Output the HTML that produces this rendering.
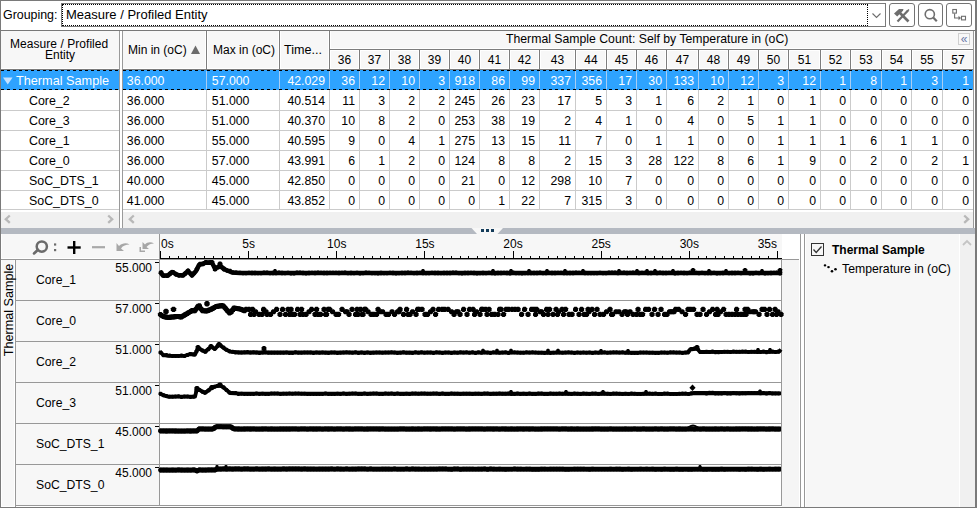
<!DOCTYPE html>
<html><head><meta charset="utf-8"><style>
html,body{margin:0;padding:0;width:977px;height:508px;overflow:hidden;background:#fff}
body{position:relative}
body>div,body>svg{position:absolute}
.t{font-family:'Liberation Sans',sans-serif;line-height:20px;height:20px;white-space:nowrap;color:#000}
</style></head><body>
<div class="t" style="left:3px;top:5px;font-size:12.4px;color:#000;">Grouping:</div>
<div style="left:61px;top:3px;width:825px;height:24px;border:1px solid #7a7a7a;box-sizing:border-box;background:#fff"></div>
<div style="left:62px;top:4px;width:806px;height:22px;border:1px dotted #000;box-sizing:border-box"></div>
<div class="t" style="left:66px;top:4.5px;font-size:13px;color:#000;">Measure / Profiled Entity</div>
<svg style="left:871px;top:11px" width="12" height="9"><polyline points="1.5,2.5 5.5,6.5 9.5,2.5" fill="none" stroke="#6d6d6d" stroke-width="1.1"/></svg>
<div style="left:889px;top:3px;width:26px;height:24px;border:1px solid #737373;border-radius:3px;box-sizing:border-box;background:#fff"></div>
<div style="left:918px;top:3px;width:25px;height:24px;border:1px solid #737373;border-radius:3px;box-sizing:border-box;background:#fff"></div>
<div style="left:946px;top:3px;width:26px;height:24px;border:1px solid #737373;border-radius:3px;box-sizing:border-box;background:#fff"></div>
<svg style="left:889px;top:3px" width="26" height="24">
<path d="M5,10.5 L10,6 L14.5,6 L14,7.8 L8.2,13.5 Z" fill="#6e6e6e"/>
<line x1="10" y1="9" x2="19.5" y2="18.5" stroke="#6e6e6e" stroke-width="2.6"/>
<line x1="19" y1="7.5" x2="8.5" y2="18.5" stroke="#6e6e6e" stroke-width="2.2"/>
<line x1="17.5" y1="9" x2="20" y2="6.5" stroke="#6e6e6e" stroke-width="1.4"/>
</svg>
<svg style="left:918px;top:3px" width="25" height="24">
<circle cx="11.8" cy="11.2" r="4.6" fill="none" stroke="#6e6e6e" stroke-width="1.6"/>
<line x1="15.2" y1="14.6" x2="18.8" y2="18.3" stroke="#6e6e6e" stroke-width="2.2"/>
</svg>
<svg style="left:946px;top:3px" width="26" height="24">
<rect x="6.8" y="6.5" width="3.6" height="3.6" fill="none" stroke="#6e6e6e" stroke-width="1.1"/>
<polyline points="8.6,10.5 8.6,15 13,15" fill="none" stroke="#6e6e6e" stroke-width="1.1"/>
<path d="M12.5,12.8 L15,15 L12.5,17.2 Z" fill="#6e6e6e"/>
<rect x="15.5" y="13.3" width="4" height="3.6" fill="none" stroke="#6e6e6e" stroke-width="1.1"/>
</svg>
<div style="left:1px;top:30px;width:974px;height:1px;background:#787878"></div>
<div style="left:1px;top:31px;width:973px;height:38px;background:#f7f7f7"></div>
<div style="left:1px;top:68px;width:973px;height:1px;background:#ffffff"></div>
<div style="left:1px;top:69px;width:973px;height:1px;background:#7d7d7d"></div>
<div style="left:120px;top:31px;width:2px;height:197px;background:#fff"></div>
<div style="left:119px;top:31px;width:1px;height:197px;background:#9a9a9a"></div>
<div style="left:122px;top:31px;width:1px;height:197px;background:#9a9a9a"></div>
<div style="left:205px;top:31px;width:1px;height:38px;background:#fff"></div>
<div style="left:207px;top:31px;width:1px;height:38px;background:#fff"></div>
<div style="left:278px;top:31px;width:1px;height:38px;background:#fff"></div>
<div style="left:280px;top:31px;width:1px;height:38px;background:#fff"></div>
<div style="left:328px;top:31px;width:1px;height:38px;background:#fff"></div>
<div style="left:330px;top:31px;width:1px;height:38px;background:#fff"></div>
<div style="left:358px;top:50px;width:1px;height:19px;background:#fff"></div>
<div style="left:360px;top:50px;width:1px;height:19px;background:#fff"></div>
<div style="left:388px;top:50px;width:1px;height:19px;background:#fff"></div>
<div style="left:390px;top:50px;width:1px;height:19px;background:#fff"></div>
<div style="left:418px;top:50px;width:1px;height:19px;background:#fff"></div>
<div style="left:420px;top:50px;width:1px;height:19px;background:#fff"></div>
<div style="left:448px;top:50px;width:1px;height:19px;background:#fff"></div>
<div style="left:450px;top:50px;width:1px;height:19px;background:#fff"></div>
<div style="left:478px;top:50px;width:1px;height:19px;background:#fff"></div>
<div style="left:480px;top:50px;width:1px;height:19px;background:#fff"></div>
<div style="left:508px;top:50px;width:1px;height:19px;background:#fff"></div>
<div style="left:510px;top:50px;width:1px;height:19px;background:#fff"></div>
<div style="left:538px;top:50px;width:1px;height:19px;background:#fff"></div>
<div style="left:540px;top:50px;width:1px;height:19px;background:#fff"></div>
<div style="left:574px;top:50px;width:1px;height:19px;background:#fff"></div>
<div style="left:576px;top:50px;width:1px;height:19px;background:#fff"></div>
<div style="left:605px;top:50px;width:1px;height:19px;background:#fff"></div>
<div style="left:607px;top:50px;width:1px;height:19px;background:#fff"></div>
<div style="left:635px;top:50px;width:1px;height:19px;background:#fff"></div>
<div style="left:637px;top:50px;width:1px;height:19px;background:#fff"></div>
<div style="left:665px;top:50px;width:1px;height:19px;background:#fff"></div>
<div style="left:667px;top:50px;width:1px;height:19px;background:#fff"></div>
<div style="left:697px;top:50px;width:1px;height:19px;background:#fff"></div>
<div style="left:699px;top:50px;width:1px;height:19px;background:#fff"></div>
<div style="left:727px;top:50px;width:1px;height:19px;background:#fff"></div>
<div style="left:729px;top:50px;width:1px;height:19px;background:#fff"></div>
<div style="left:757px;top:50px;width:1px;height:19px;background:#fff"></div>
<div style="left:759px;top:50px;width:1px;height:19px;background:#fff"></div>
<div style="left:787px;top:50px;width:1px;height:19px;background:#fff"></div>
<div style="left:789px;top:50px;width:1px;height:19px;background:#fff"></div>
<div style="left:819px;top:50px;width:1px;height:19px;background:#fff"></div>
<div style="left:821px;top:50px;width:1px;height:19px;background:#fff"></div>
<div style="left:849px;top:50px;width:1px;height:19px;background:#fff"></div>
<div style="left:851px;top:50px;width:1px;height:19px;background:#fff"></div>
<div style="left:880px;top:50px;width:1px;height:19px;background:#fff"></div>
<div style="left:882px;top:50px;width:1px;height:19px;background:#fff"></div>
<div style="left:910px;top:50px;width:1px;height:19px;background:#fff"></div>
<div style="left:912px;top:50px;width:1px;height:19px;background:#fff"></div>
<div style="left:941px;top:50px;width:1px;height:19px;background:#fff"></div>
<div style="left:943px;top:50px;width:1px;height:19px;background:#fff"></div>
<div style="left:330px;top:48px;width:644px;height:1px;background:#fff"></div>
<div style="left:330px;top:50px;width:644px;height:1px;background:#fff"></div>
<div style="left:206px;top:31px;width:1px;height:38px;background:#7d7d7d"></div>
<div style="left:279px;top:31px;width:1px;height:38px;background:#7d7d7d"></div>
<div style="left:329px;top:31px;width:1px;height:38px;background:#7d7d7d"></div>
<div style="left:359px;top:50px;width:1px;height:19px;background:#7d7d7d"></div>
<div style="left:389px;top:50px;width:1px;height:19px;background:#7d7d7d"></div>
<div style="left:419px;top:50px;width:1px;height:19px;background:#7d7d7d"></div>
<div style="left:449px;top:50px;width:1px;height:19px;background:#7d7d7d"></div>
<div style="left:479px;top:50px;width:1px;height:19px;background:#7d7d7d"></div>
<div style="left:509px;top:50px;width:1px;height:19px;background:#7d7d7d"></div>
<div style="left:539px;top:50px;width:1px;height:19px;background:#7d7d7d"></div>
<div style="left:575px;top:50px;width:1px;height:19px;background:#7d7d7d"></div>
<div style="left:606px;top:50px;width:1px;height:19px;background:#7d7d7d"></div>
<div style="left:636px;top:50px;width:1px;height:19px;background:#7d7d7d"></div>
<div style="left:666px;top:50px;width:1px;height:19px;background:#7d7d7d"></div>
<div style="left:698px;top:50px;width:1px;height:19px;background:#7d7d7d"></div>
<div style="left:728px;top:50px;width:1px;height:19px;background:#7d7d7d"></div>
<div style="left:758px;top:50px;width:1px;height:19px;background:#7d7d7d"></div>
<div style="left:788px;top:50px;width:1px;height:19px;background:#7d7d7d"></div>
<div style="left:820px;top:50px;width:1px;height:19px;background:#7d7d7d"></div>
<div style="left:850px;top:50px;width:1px;height:19px;background:#7d7d7d"></div>
<div style="left:881px;top:50px;width:1px;height:19px;background:#7d7d7d"></div>
<div style="left:911px;top:50px;width:1px;height:19px;background:#7d7d7d"></div>
<div style="left:942px;top:50px;width:1px;height:19px;background:#7d7d7d"></div>
<div style="left:330px;top:49px;width:644px;height:1px;background:#7d7d7d"></div>
<div style="left:973px;top:31px;width:1px;height:197px;background:#9a9a9a"></div>
<div class="t" style="left:10px;top:34px;font-size:12px;color:#000;letter-spacing:0.05px">Measure / Profiled</div>
<div class="t" style="left:45px;top:45px;font-size:12px;color:#000;">Entity</div>
<div class="t" style="left:128px;top:40px;font-size:12px;color:#000;">Min in (oC)</div>
<svg style="left:190px;top:44px" width="12" height="11"><path d="M1,10 L5.5,1.5 L10,10 Z" fill="#6b6b6b"/></svg>
<div class="t" style="left:213px;top:40px;font-size:12px;color:#000;">Max in (oC)</div>
<div class="t" style="left:284px;top:40px;font-size:12.6px;color:#000;">Time...</div>
<div class="t" style="left:506px;top:29px;font-size:12.25px;color:#000;">Thermal Sample Count: Self by Temperature in (oC)</div>
<div style="left:958px;top:33px;width:12px;height:12px;border:1px solid #cfcfcf;box-sizing:border-box;background:#f8f8f8"></div>
<div class="t" style="left:958px;top:30px;width:12px;text-align:center;font-size:12px;color:#6a78a8;line-height:18px">&laquo;</div>
<div class="t" style="left:194.5px;width:300px;text-align:center;top:50px;font-size:12px;color:#000;">36</div>
<div class="t" style="left:224.5px;width:300px;text-align:center;top:50px;font-size:12px;color:#000;">37</div>
<div class="t" style="left:254.5px;width:300px;text-align:center;top:50px;font-size:12px;color:#000;">38</div>
<div class="t" style="left:284.5px;width:300px;text-align:center;top:50px;font-size:12px;color:#000;">39</div>
<div class="t" style="left:314.5px;width:300px;text-align:center;top:50px;font-size:12px;color:#000;">40</div>
<div class="t" style="left:344.5px;width:300px;text-align:center;top:50px;font-size:12px;color:#000;">41</div>
<div class="t" style="left:374.5px;width:300px;text-align:center;top:50px;font-size:12px;color:#000;">42</div>
<div class="t" style="left:407.5px;width:300px;text-align:center;top:50px;font-size:12px;color:#000;">43</div>
<div class="t" style="left:441.0px;width:300px;text-align:center;top:50px;font-size:12px;color:#000;">44</div>
<div class="t" style="left:471.5px;width:300px;text-align:center;top:50px;font-size:12px;color:#000;">45</div>
<div class="t" style="left:501.5px;width:300px;text-align:center;top:50px;font-size:12px;color:#000;">46</div>
<div class="t" style="left:532.5px;width:300px;text-align:center;top:50px;font-size:12px;color:#000;">47</div>
<div class="t" style="left:563.5px;width:300px;text-align:center;top:50px;font-size:12px;color:#000;">48</div>
<div class="t" style="left:593.5px;width:300px;text-align:center;top:50px;font-size:12px;color:#000;">49</div>
<div class="t" style="left:623.5px;width:300px;text-align:center;top:50px;font-size:12px;color:#000;">50</div>
<div class="t" style="left:654.5px;width:300px;text-align:center;top:50px;font-size:12px;color:#000;">51</div>
<div class="t" style="left:685.5px;width:300px;text-align:center;top:50px;font-size:12px;color:#000;">52</div>
<div class="t" style="left:716.0px;width:300px;text-align:center;top:50px;font-size:12px;color:#000;">53</div>
<div class="t" style="left:746.5px;width:300px;text-align:center;top:50px;font-size:12px;color:#000;">54</div>
<div class="t" style="left:777.0px;width:300px;text-align:center;top:50px;font-size:12px;color:#000;">55</div>
<div class="t" style="left:808.0px;width:300px;text-align:center;top:50px;font-size:12px;color:#000;">57</div>
<div style="left:1px;top:110px;width:118px;height:1px;background:#cbcbcb"></div>
<div style="left:123px;top:110px;width:850px;height:1px;background:#cbcbcb"></div>
<div style="left:1px;top:130px;width:118px;height:1px;background:#cbcbcb"></div>
<div style="left:123px;top:130px;width:850px;height:1px;background:#cbcbcb"></div>
<div style="left:1px;top:150px;width:118px;height:1px;background:#cbcbcb"></div>
<div style="left:123px;top:150px;width:850px;height:1px;background:#cbcbcb"></div>
<div style="left:1px;top:170px;width:118px;height:1px;background:#cbcbcb"></div>
<div style="left:123px;top:170px;width:850px;height:1px;background:#cbcbcb"></div>
<div style="left:1px;top:190px;width:118px;height:1px;background:#cbcbcb"></div>
<div style="left:123px;top:190px;width:850px;height:1px;background:#cbcbcb"></div>
<div style="left:1px;top:209px;width:118px;height:1px;background:#cbcbcb"></div>
<div style="left:123px;top:209px;width:850px;height:1px;background:#cbcbcb"></div>
<div style="left:1px;top:70px;width:118px;height:20px;background:#2ea3ff"></div>
<div style="left:123px;top:70px;width:850px;height:20px;background:#2ea3ff"></div>
<div style="left:1px;top:70px;width:118px;height:1px;background:repeating-linear-gradient(90deg,#000 0 3px,transparent 3px 6px)"></div>
<div style="left:1px;top:89px;width:118px;height:1px;background:repeating-linear-gradient(90deg,#000 0 3px,transparent 3px 6px)"></div>
<div style="left:123px;top:70px;width:850px;height:1px;background:repeating-linear-gradient(90deg,#000 0 3px,transparent 3px 6px)"></div>
<div style="left:123px;top:89px;width:850px;height:1px;background:repeating-linear-gradient(90deg,#000 0 3px,transparent 3px 6px)"></div>
<div style="left:206px;top:71px;width:1px;height:18px;background:#a9cdf2"></div>
<div style="left:206px;top:90px;width:1px;height:120px;background:#cbcbcb"></div>
<div style="left:279px;top:71px;width:1px;height:18px;background:#a9cdf2"></div>
<div style="left:279px;top:90px;width:1px;height:120px;background:#cbcbcb"></div>
<div style="left:329px;top:71px;width:1px;height:18px;background:#a9cdf2"></div>
<div style="left:329px;top:90px;width:1px;height:120px;background:#cbcbcb"></div>
<div style="left:359px;top:71px;width:1px;height:18px;background:#a9cdf2"></div>
<div style="left:359px;top:90px;width:1px;height:120px;background:#cbcbcb"></div>
<div style="left:389px;top:71px;width:1px;height:18px;background:#a9cdf2"></div>
<div style="left:389px;top:90px;width:1px;height:120px;background:#cbcbcb"></div>
<div style="left:419px;top:71px;width:1px;height:18px;background:#a9cdf2"></div>
<div style="left:419px;top:90px;width:1px;height:120px;background:#cbcbcb"></div>
<div style="left:449px;top:71px;width:1px;height:18px;background:#a9cdf2"></div>
<div style="left:449px;top:90px;width:1px;height:120px;background:#cbcbcb"></div>
<div style="left:479px;top:71px;width:1px;height:18px;background:#a9cdf2"></div>
<div style="left:479px;top:90px;width:1px;height:120px;background:#cbcbcb"></div>
<div style="left:509px;top:71px;width:1px;height:18px;background:#a9cdf2"></div>
<div style="left:509px;top:90px;width:1px;height:120px;background:#cbcbcb"></div>
<div style="left:539px;top:71px;width:1px;height:18px;background:#a9cdf2"></div>
<div style="left:539px;top:90px;width:1px;height:120px;background:#cbcbcb"></div>
<div style="left:575px;top:71px;width:1px;height:18px;background:#a9cdf2"></div>
<div style="left:575px;top:90px;width:1px;height:120px;background:#cbcbcb"></div>
<div style="left:606px;top:71px;width:1px;height:18px;background:#a9cdf2"></div>
<div style="left:606px;top:90px;width:1px;height:120px;background:#cbcbcb"></div>
<div style="left:636px;top:71px;width:1px;height:18px;background:#a9cdf2"></div>
<div style="left:636px;top:90px;width:1px;height:120px;background:#cbcbcb"></div>
<div style="left:666px;top:71px;width:1px;height:18px;background:#a9cdf2"></div>
<div style="left:666px;top:90px;width:1px;height:120px;background:#cbcbcb"></div>
<div style="left:698px;top:71px;width:1px;height:18px;background:#a9cdf2"></div>
<div style="left:698px;top:90px;width:1px;height:120px;background:#cbcbcb"></div>
<div style="left:728px;top:71px;width:1px;height:18px;background:#a9cdf2"></div>
<div style="left:728px;top:90px;width:1px;height:120px;background:#cbcbcb"></div>
<div style="left:758px;top:71px;width:1px;height:18px;background:#a9cdf2"></div>
<div style="left:758px;top:90px;width:1px;height:120px;background:#cbcbcb"></div>
<div style="left:788px;top:71px;width:1px;height:18px;background:#a9cdf2"></div>
<div style="left:788px;top:90px;width:1px;height:120px;background:#cbcbcb"></div>
<div style="left:820px;top:71px;width:1px;height:18px;background:#a9cdf2"></div>
<div style="left:820px;top:90px;width:1px;height:120px;background:#cbcbcb"></div>
<div style="left:850px;top:71px;width:1px;height:18px;background:#a9cdf2"></div>
<div style="left:850px;top:90px;width:1px;height:120px;background:#cbcbcb"></div>
<div style="left:881px;top:71px;width:1px;height:18px;background:#a9cdf2"></div>
<div style="left:881px;top:90px;width:1px;height:120px;background:#cbcbcb"></div>
<div style="left:911px;top:71px;width:1px;height:18px;background:#a9cdf2"></div>
<div style="left:911px;top:90px;width:1px;height:120px;background:#cbcbcb"></div>
<div style="left:942px;top:71px;width:1px;height:18px;background:#a9cdf2"></div>
<div style="left:942px;top:90px;width:1px;height:120px;background:#cbcbcb"></div>
<svg style="left:2px;top:76px" width="12" height="10"><path d="M1,1.5 L10.5,1.5 L5.75,8.5 Z" fill="#c6e2ff"/></svg>
<div class="t" style="left:16px;top:71px;font-size:12.7px;color:#fff;">Thermal Sample</div>
<div class="t" style="left:126.8px;top:71px;font-size:12.3px;color:#fff;">36.000</div>
<div class="t" style="left:211.8px;top:71px;font-size:12.3px;color:#fff;">57.000</div>
<div class="t" style="left:25px;width:300px;text-align:right;top:71px;font-size:12.3px;color:#fff;">42.029</div>
<div class="t" style="left:55px;width:300px;text-align:right;top:71px;font-size:12.3px;color:#fff;">36</div>
<div class="t" style="left:85px;width:300px;text-align:right;top:71px;font-size:12.3px;color:#fff;">12</div>
<div class="t" style="left:115px;width:300px;text-align:right;top:71px;font-size:12.3px;color:#fff;">10</div>
<div class="t" style="left:145px;width:300px;text-align:right;top:71px;font-size:12.3px;color:#fff;">3</div>
<div class="t" style="left:175px;width:300px;text-align:right;top:71px;font-size:12.3px;color:#fff;">918</div>
<div class="t" style="left:205px;width:300px;text-align:right;top:71px;font-size:12.3px;color:#fff;">86</div>
<div class="t" style="left:235px;width:300px;text-align:right;top:71px;font-size:12.3px;color:#fff;">99</div>
<div class="t" style="left:271px;width:300px;text-align:right;top:71px;font-size:12.3px;color:#fff;">337</div>
<div class="t" style="left:302px;width:300px;text-align:right;top:71px;font-size:12.3px;color:#fff;">356</div>
<div class="t" style="left:332px;width:300px;text-align:right;top:71px;font-size:12.3px;color:#fff;">17</div>
<div class="t" style="left:362px;width:300px;text-align:right;top:71px;font-size:12.3px;color:#fff;">30</div>
<div class="t" style="left:394px;width:300px;text-align:right;top:71px;font-size:12.3px;color:#fff;">133</div>
<div class="t" style="left:424px;width:300px;text-align:right;top:71px;font-size:12.3px;color:#fff;">10</div>
<div class="t" style="left:454px;width:300px;text-align:right;top:71px;font-size:12.3px;color:#fff;">12</div>
<div class="t" style="left:484px;width:300px;text-align:right;top:71px;font-size:12.3px;color:#fff;">3</div>
<div class="t" style="left:516px;width:300px;text-align:right;top:71px;font-size:12.3px;color:#fff;">12</div>
<div class="t" style="left:546px;width:300px;text-align:right;top:71px;font-size:12.3px;color:#fff;">1</div>
<div class="t" style="left:577px;width:300px;text-align:right;top:71px;font-size:12.3px;color:#fff;">8</div>
<div class="t" style="left:607px;width:300px;text-align:right;top:71px;font-size:12.3px;color:#fff;">1</div>
<div class="t" style="left:638px;width:300px;text-align:right;top:71px;font-size:12.3px;color:#fff;">3</div>
<div class="t" style="left:669px;width:300px;text-align:right;top:71px;font-size:12.3px;color:#fff;">1</div>
<div class="t" style="left:29px;top:91px;font-size:12.4px;color:#000;">Core_2</div>
<div class="t" style="left:126.8px;top:91px;font-size:12.3px;color:#000;">36.000</div>
<div class="t" style="left:211.8px;top:91px;font-size:12.3px;color:#000;">51.000</div>
<div class="t" style="left:25px;width:300px;text-align:right;top:91px;font-size:12.3px;color:#000;">40.514</div>
<div class="t" style="left:55px;width:300px;text-align:right;top:91px;font-size:12.3px;color:#000;">11</div>
<div class="t" style="left:85px;width:300px;text-align:right;top:91px;font-size:12.3px;color:#000;">3</div>
<div class="t" style="left:115px;width:300px;text-align:right;top:91px;font-size:12.3px;color:#000;">2</div>
<div class="t" style="left:145px;width:300px;text-align:right;top:91px;font-size:12.3px;color:#000;">2</div>
<div class="t" style="left:175px;width:300px;text-align:right;top:91px;font-size:12.3px;color:#000;">245</div>
<div class="t" style="left:205px;width:300px;text-align:right;top:91px;font-size:12.3px;color:#000;">26</div>
<div class="t" style="left:235px;width:300px;text-align:right;top:91px;font-size:12.3px;color:#000;">23</div>
<div class="t" style="left:271px;width:300px;text-align:right;top:91px;font-size:12.3px;color:#000;">17</div>
<div class="t" style="left:302px;width:300px;text-align:right;top:91px;font-size:12.3px;color:#000;">5</div>
<div class="t" style="left:332px;width:300px;text-align:right;top:91px;font-size:12.3px;color:#000;">3</div>
<div class="t" style="left:362px;width:300px;text-align:right;top:91px;font-size:12.3px;color:#000;">1</div>
<div class="t" style="left:394px;width:300px;text-align:right;top:91px;font-size:12.3px;color:#000;">6</div>
<div class="t" style="left:424px;width:300px;text-align:right;top:91px;font-size:12.3px;color:#000;">2</div>
<div class="t" style="left:454px;width:300px;text-align:right;top:91px;font-size:12.3px;color:#000;">1</div>
<div class="t" style="left:484px;width:300px;text-align:right;top:91px;font-size:12.3px;color:#000;">0</div>
<div class="t" style="left:516px;width:300px;text-align:right;top:91px;font-size:12.3px;color:#000;">1</div>
<div class="t" style="left:546px;width:300px;text-align:right;top:91px;font-size:12.3px;color:#000;">0</div>
<div class="t" style="left:577px;width:300px;text-align:right;top:91px;font-size:12.3px;color:#000;">0</div>
<div class="t" style="left:607px;width:300px;text-align:right;top:91px;font-size:12.3px;color:#000;">0</div>
<div class="t" style="left:638px;width:300px;text-align:right;top:91px;font-size:12.3px;color:#000;">0</div>
<div class="t" style="left:669px;width:300px;text-align:right;top:91px;font-size:12.3px;color:#000;">0</div>
<div class="t" style="left:29px;top:111px;font-size:12.4px;color:#000;">Core_3</div>
<div class="t" style="left:126.8px;top:111px;font-size:12.3px;color:#000;">36.000</div>
<div class="t" style="left:211.8px;top:111px;font-size:12.3px;color:#000;">51.000</div>
<div class="t" style="left:25px;width:300px;text-align:right;top:111px;font-size:12.3px;color:#000;">40.370</div>
<div class="t" style="left:55px;width:300px;text-align:right;top:111px;font-size:12.3px;color:#000;">10</div>
<div class="t" style="left:85px;width:300px;text-align:right;top:111px;font-size:12.3px;color:#000;">8</div>
<div class="t" style="left:115px;width:300px;text-align:right;top:111px;font-size:12.3px;color:#000;">2</div>
<div class="t" style="left:145px;width:300px;text-align:right;top:111px;font-size:12.3px;color:#000;">0</div>
<div class="t" style="left:175px;width:300px;text-align:right;top:111px;font-size:12.3px;color:#000;">253</div>
<div class="t" style="left:205px;width:300px;text-align:right;top:111px;font-size:12.3px;color:#000;">38</div>
<div class="t" style="left:235px;width:300px;text-align:right;top:111px;font-size:12.3px;color:#000;">19</div>
<div class="t" style="left:271px;width:300px;text-align:right;top:111px;font-size:12.3px;color:#000;">2</div>
<div class="t" style="left:302px;width:300px;text-align:right;top:111px;font-size:12.3px;color:#000;">4</div>
<div class="t" style="left:332px;width:300px;text-align:right;top:111px;font-size:12.3px;color:#000;">1</div>
<div class="t" style="left:362px;width:300px;text-align:right;top:111px;font-size:12.3px;color:#000;">0</div>
<div class="t" style="left:394px;width:300px;text-align:right;top:111px;font-size:12.3px;color:#000;">4</div>
<div class="t" style="left:424px;width:300px;text-align:right;top:111px;font-size:12.3px;color:#000;">0</div>
<div class="t" style="left:454px;width:300px;text-align:right;top:111px;font-size:12.3px;color:#000;">5</div>
<div class="t" style="left:484px;width:300px;text-align:right;top:111px;font-size:12.3px;color:#000;">1</div>
<div class="t" style="left:516px;width:300px;text-align:right;top:111px;font-size:12.3px;color:#000;">1</div>
<div class="t" style="left:546px;width:300px;text-align:right;top:111px;font-size:12.3px;color:#000;">0</div>
<div class="t" style="left:577px;width:300px;text-align:right;top:111px;font-size:12.3px;color:#000;">0</div>
<div class="t" style="left:607px;width:300px;text-align:right;top:111px;font-size:12.3px;color:#000;">0</div>
<div class="t" style="left:638px;width:300px;text-align:right;top:111px;font-size:12.3px;color:#000;">0</div>
<div class="t" style="left:669px;width:300px;text-align:right;top:111px;font-size:12.3px;color:#000;">0</div>
<div class="t" style="left:29px;top:131px;font-size:12.4px;color:#000;">Core_1</div>
<div class="t" style="left:126.8px;top:131px;font-size:12.3px;color:#000;">36.000</div>
<div class="t" style="left:211.8px;top:131px;font-size:12.3px;color:#000;">55.000</div>
<div class="t" style="left:25px;width:300px;text-align:right;top:131px;font-size:12.3px;color:#000;">40.595</div>
<div class="t" style="left:55px;width:300px;text-align:right;top:131px;font-size:12.3px;color:#000;">9</div>
<div class="t" style="left:85px;width:300px;text-align:right;top:131px;font-size:12.3px;color:#000;">0</div>
<div class="t" style="left:115px;width:300px;text-align:right;top:131px;font-size:12.3px;color:#000;">4</div>
<div class="t" style="left:145px;width:300px;text-align:right;top:131px;font-size:12.3px;color:#000;">1</div>
<div class="t" style="left:175px;width:300px;text-align:right;top:131px;font-size:12.3px;color:#000;">275</div>
<div class="t" style="left:205px;width:300px;text-align:right;top:131px;font-size:12.3px;color:#000;">13</div>
<div class="t" style="left:235px;width:300px;text-align:right;top:131px;font-size:12.3px;color:#000;">15</div>
<div class="t" style="left:271px;width:300px;text-align:right;top:131px;font-size:12.3px;color:#000;">11</div>
<div class="t" style="left:302px;width:300px;text-align:right;top:131px;font-size:12.3px;color:#000;">7</div>
<div class="t" style="left:332px;width:300px;text-align:right;top:131px;font-size:12.3px;color:#000;">0</div>
<div class="t" style="left:362px;width:300px;text-align:right;top:131px;font-size:12.3px;color:#000;">1</div>
<div class="t" style="left:394px;width:300px;text-align:right;top:131px;font-size:12.3px;color:#000;">1</div>
<div class="t" style="left:424px;width:300px;text-align:right;top:131px;font-size:12.3px;color:#000;">0</div>
<div class="t" style="left:454px;width:300px;text-align:right;top:131px;font-size:12.3px;color:#000;">0</div>
<div class="t" style="left:484px;width:300px;text-align:right;top:131px;font-size:12.3px;color:#000;">1</div>
<div class="t" style="left:516px;width:300px;text-align:right;top:131px;font-size:12.3px;color:#000;">1</div>
<div class="t" style="left:546px;width:300px;text-align:right;top:131px;font-size:12.3px;color:#000;">1</div>
<div class="t" style="left:577px;width:300px;text-align:right;top:131px;font-size:12.3px;color:#000;">6</div>
<div class="t" style="left:607px;width:300px;text-align:right;top:131px;font-size:12.3px;color:#000;">1</div>
<div class="t" style="left:638px;width:300px;text-align:right;top:131px;font-size:12.3px;color:#000;">1</div>
<div class="t" style="left:669px;width:300px;text-align:right;top:131px;font-size:12.3px;color:#000;">0</div>
<div class="t" style="left:29px;top:151px;font-size:12.4px;color:#000;">Core_0</div>
<div class="t" style="left:126.8px;top:151px;font-size:12.3px;color:#000;">36.000</div>
<div class="t" style="left:211.8px;top:151px;font-size:12.3px;color:#000;">57.000</div>
<div class="t" style="left:25px;width:300px;text-align:right;top:151px;font-size:12.3px;color:#000;">43.991</div>
<div class="t" style="left:55px;width:300px;text-align:right;top:151px;font-size:12.3px;color:#000;">6</div>
<div class="t" style="left:85px;width:300px;text-align:right;top:151px;font-size:12.3px;color:#000;">1</div>
<div class="t" style="left:115px;width:300px;text-align:right;top:151px;font-size:12.3px;color:#000;">2</div>
<div class="t" style="left:145px;width:300px;text-align:right;top:151px;font-size:12.3px;color:#000;">0</div>
<div class="t" style="left:175px;width:300px;text-align:right;top:151px;font-size:12.3px;color:#000;">124</div>
<div class="t" style="left:205px;width:300px;text-align:right;top:151px;font-size:12.3px;color:#000;">8</div>
<div class="t" style="left:235px;width:300px;text-align:right;top:151px;font-size:12.3px;color:#000;">8</div>
<div class="t" style="left:271px;width:300px;text-align:right;top:151px;font-size:12.3px;color:#000;">2</div>
<div class="t" style="left:302px;width:300px;text-align:right;top:151px;font-size:12.3px;color:#000;">15</div>
<div class="t" style="left:332px;width:300px;text-align:right;top:151px;font-size:12.3px;color:#000;">3</div>
<div class="t" style="left:362px;width:300px;text-align:right;top:151px;font-size:12.3px;color:#000;">28</div>
<div class="t" style="left:394px;width:300px;text-align:right;top:151px;font-size:12.3px;color:#000;">122</div>
<div class="t" style="left:424px;width:300px;text-align:right;top:151px;font-size:12.3px;color:#000;">8</div>
<div class="t" style="left:454px;width:300px;text-align:right;top:151px;font-size:12.3px;color:#000;">6</div>
<div class="t" style="left:484px;width:300px;text-align:right;top:151px;font-size:12.3px;color:#000;">1</div>
<div class="t" style="left:516px;width:300px;text-align:right;top:151px;font-size:12.3px;color:#000;">9</div>
<div class="t" style="left:546px;width:300px;text-align:right;top:151px;font-size:12.3px;color:#000;">0</div>
<div class="t" style="left:577px;width:300px;text-align:right;top:151px;font-size:12.3px;color:#000;">2</div>
<div class="t" style="left:607px;width:300px;text-align:right;top:151px;font-size:12.3px;color:#000;">0</div>
<div class="t" style="left:638px;width:300px;text-align:right;top:151px;font-size:12.3px;color:#000;">2</div>
<div class="t" style="left:669px;width:300px;text-align:right;top:151px;font-size:12.3px;color:#000;">1</div>
<div class="t" style="left:29px;top:171px;font-size:12.4px;color:#000;">SoC_DTS_1</div>
<div class="t" style="left:126.8px;top:171px;font-size:12.3px;color:#000;">40.000</div>
<div class="t" style="left:211.8px;top:171px;font-size:12.3px;color:#000;">45.000</div>
<div class="t" style="left:25px;width:300px;text-align:right;top:171px;font-size:12.3px;color:#000;">42.850</div>
<div class="t" style="left:55px;width:300px;text-align:right;top:171px;font-size:12.3px;color:#000;">0</div>
<div class="t" style="left:85px;width:300px;text-align:right;top:171px;font-size:12.3px;color:#000;">0</div>
<div class="t" style="left:115px;width:300px;text-align:right;top:171px;font-size:12.3px;color:#000;">0</div>
<div class="t" style="left:145px;width:300px;text-align:right;top:171px;font-size:12.3px;color:#000;">0</div>
<div class="t" style="left:175px;width:300px;text-align:right;top:171px;font-size:12.3px;color:#000;">21</div>
<div class="t" style="left:205px;width:300px;text-align:right;top:171px;font-size:12.3px;color:#000;">0</div>
<div class="t" style="left:235px;width:300px;text-align:right;top:171px;font-size:12.3px;color:#000;">12</div>
<div class="t" style="left:271px;width:300px;text-align:right;top:171px;font-size:12.3px;color:#000;">298</div>
<div class="t" style="left:302px;width:300px;text-align:right;top:171px;font-size:12.3px;color:#000;">10</div>
<div class="t" style="left:332px;width:300px;text-align:right;top:171px;font-size:12.3px;color:#000;">7</div>
<div class="t" style="left:362px;width:300px;text-align:right;top:171px;font-size:12.3px;color:#000;">0</div>
<div class="t" style="left:394px;width:300px;text-align:right;top:171px;font-size:12.3px;color:#000;">0</div>
<div class="t" style="left:424px;width:300px;text-align:right;top:171px;font-size:12.3px;color:#000;">0</div>
<div class="t" style="left:454px;width:300px;text-align:right;top:171px;font-size:12.3px;color:#000;">0</div>
<div class="t" style="left:484px;width:300px;text-align:right;top:171px;font-size:12.3px;color:#000;">0</div>
<div class="t" style="left:516px;width:300px;text-align:right;top:171px;font-size:12.3px;color:#000;">0</div>
<div class="t" style="left:546px;width:300px;text-align:right;top:171px;font-size:12.3px;color:#000;">0</div>
<div class="t" style="left:577px;width:300px;text-align:right;top:171px;font-size:12.3px;color:#000;">0</div>
<div class="t" style="left:607px;width:300px;text-align:right;top:171px;font-size:12.3px;color:#000;">0</div>
<div class="t" style="left:638px;width:300px;text-align:right;top:171px;font-size:12.3px;color:#000;">0</div>
<div class="t" style="left:669px;width:300px;text-align:right;top:171px;font-size:12.3px;color:#000;">0</div>
<div class="t" style="left:29px;top:191px;font-size:12.4px;color:#000;">SoC_DTS_0</div>
<div class="t" style="left:126.8px;top:191px;font-size:12.3px;color:#000;">41.000</div>
<div class="t" style="left:211.8px;top:191px;font-size:12.3px;color:#000;">45.000</div>
<div class="t" style="left:25px;width:300px;text-align:right;top:191px;font-size:12.3px;color:#000;">43.852</div>
<div class="t" style="left:55px;width:300px;text-align:right;top:191px;font-size:12.3px;color:#000;">0</div>
<div class="t" style="left:85px;width:300px;text-align:right;top:191px;font-size:12.3px;color:#000;">0</div>
<div class="t" style="left:115px;width:300px;text-align:right;top:191px;font-size:12.3px;color:#000;">0</div>
<div class="t" style="left:145px;width:300px;text-align:right;top:191px;font-size:12.3px;color:#000;">0</div>
<div class="t" style="left:175px;width:300px;text-align:right;top:191px;font-size:12.3px;color:#000;">0</div>
<div class="t" style="left:205px;width:300px;text-align:right;top:191px;font-size:12.3px;color:#000;">1</div>
<div class="t" style="left:235px;width:300px;text-align:right;top:191px;font-size:12.3px;color:#000;">22</div>
<div class="t" style="left:271px;width:300px;text-align:right;top:191px;font-size:12.3px;color:#000;">7</div>
<div class="t" style="left:302px;width:300px;text-align:right;top:191px;font-size:12.3px;color:#000;">315</div>
<div class="t" style="left:332px;width:300px;text-align:right;top:191px;font-size:12.3px;color:#000;">3</div>
<div class="t" style="left:362px;width:300px;text-align:right;top:191px;font-size:12.3px;color:#000;">0</div>
<div class="t" style="left:394px;width:300px;text-align:right;top:191px;font-size:12.3px;color:#000;">0</div>
<div class="t" style="left:424px;width:300px;text-align:right;top:191px;font-size:12.3px;color:#000;">0</div>
<div class="t" style="left:454px;width:300px;text-align:right;top:191px;font-size:12.3px;color:#000;">0</div>
<div class="t" style="left:484px;width:300px;text-align:right;top:191px;font-size:12.3px;color:#000;">0</div>
<div class="t" style="left:516px;width:300px;text-align:right;top:191px;font-size:12.3px;color:#000;">0</div>
<div class="t" style="left:546px;width:300px;text-align:right;top:191px;font-size:12.3px;color:#000;">0</div>
<div class="t" style="left:577px;width:300px;text-align:right;top:191px;font-size:12.3px;color:#000;">0</div>
<div class="t" style="left:607px;width:300px;text-align:right;top:191px;font-size:12.3px;color:#000;">0</div>
<div class="t" style="left:638px;width:300px;text-align:right;top:191px;font-size:12.3px;color:#000;">0</div>
<div class="t" style="left:669px;width:300px;text-align:right;top:191px;font-size:12.3px;color:#000;">0</div>
<div style="left:1px;top:210px;width:118px;height:18px;background:#fff"></div>
<div style="left:123px;top:210px;width:850px;height:18px;background:#fff"></div>
<div style="left:1px;top:212px;width:118px;height:16px;background:#f0f0f0"></div>
<div style="left:123px;top:212px;width:850px;height:16px;background:#f0f0f0"></div>
<svg style="left:3px;top:214px" width="9" height="10"><polyline points="6.8,1.5 2.8,5.2 6.8,8.9" fill="none" stroke="#b8b8b8" stroke-width="2.3"/></svg>
<svg style="left:106px;top:214px" width="9" height="10"><polyline points="2.2,1.5 6.2,5.2 2.2,8.9" fill="none" stroke="#b8b8b8" stroke-width="2.3"/></svg>
<svg style="left:127px;top:214px" width="9" height="10"><polyline points="6.8,1.5 2.8,5.2 6.8,8.9" fill="none" stroke="#b8b8b8" stroke-width="2.3"/></svg>
<svg style="left:962px;top:214px" width="9" height="10"><polyline points="2.2,1.5 6.2,5.2 2.2,8.9" fill="none" stroke="#b8b8b8" stroke-width="2.3"/></svg>
<div style="left:1px;top:228px;width:974px;height:6px;background:#b4b9c1"></div>
<svg style="left:471px;top:228px" width="33" height="6"><path d="M0.5,0 L32,0 L26.5,6 L6,6 Z" fill="#f7f7f7"/><rect x="10" y="1" width="3" height="3" fill="#143c5a"/><rect x="15" y="1" width="3" height="3" fill="#143c5a"/><rect x="20" y="1" width="3" height="3" fill="#143c5a"/></svg>
<div style="left:1px;top:234px;width:799px;height:25px;background:#f7f7f7"></div>
<div style="left:782px;top:234px;width:18px;height:25px;background:#fff"></div>
<svg style="left:28px;top:237px" width="132" height="20">
<circle cx="13.8" cy="9.6" r="5.1" fill="none" stroke="#6b6b6b" stroke-width="2.5"/>
<line x1="10" y1="12.8" x2="6" y2="16.4" stroke="#6b6b6b" stroke-width="2.7" stroke-linecap="round"/>
<rect x="26" y="6.4" width="2.2" height="2.2" fill="#6b6b6b"/>
<rect x="26" y="12" width="2.2" height="2.2" fill="#6b6b6b"/>
<line x1="39.5" y1="10.5" x2="52.7" y2="10.5" stroke="#000" stroke-width="2.4"/>
<line x1="46.2" y1="4" x2="46.2" y2="17" stroke="#000" stroke-width="2.4"/>
<line x1="64" y1="10.2" x2="77" y2="10.2" stroke="#a9a9a9" stroke-width="2.2"/>
<path d="M88.5,6 L88.5,14 L96,14 L93,11.5 C95,8.5 98,7.5 101.5,7.5 C98.5,5.5 94,6 91,9 Z" fill="#a7a7a7"/>
<path d="M114.5,5 L114.5,12 L121,12 L118.5,10 C120.5,7.5 123,6.5 126,6.5 C123,4.5 119,5 117,7.5 Z" fill="#a7a7a7"/>
<path d="M111.5,10 L111.5,15 L117,15 L117,13.5 L113,13.5 L113,10 Z" fill="#a7a7a7"/>
</svg>
<div style="left:16px;top:260px;width:143px;height:246px;background:#f7f7f7"></div>
<div style="left:1px;top:260px;width:14px;height:247px;background:#f7f7f7;border-left:1px solid #fff;border-right:1px solid #fff;border-bottom:1px solid #fff;box-sizing:border-box"></div>
<div style="left:1px;top:234px;width:1px;height:25px;background:#fff"></div>
<div style="left:1px;top:258px;width:158px;height:1px;background:#fff"></div>
<div style="left:15px;top:260px;width:1px;height:247px;background:#989898"></div>
<div style="left:159px;top:234px;width:1px;height:272px;background:#989898"></div>
<div style="left:1px;top:259px;width:799px;height:1px;background:#989898"></div>
<div style="left:160px;top:260px;width:621px;height:246px;background:#fff"></div>
<div style="left:781px;top:259px;width:1px;height:247px;background:#989898"></div>
<div style="left:782px;top:260px;width:17px;height:247px;background:#f5f5f5"></div>
<div class="t" style="left:-41px;top:300px;width:100px;height:20px;text-align:center;transform:rotate(-90deg);font-size:12.6px;color:#000">Thermal Sample</div>
<div class="t" style="left:36px;top:270px;font-size:12.2px;color:#000;">Core_1</div>
<div class="t" style="left:-148px;width:300px;text-align:right;top:258px;font-size:12px;color:#000;">55.000</div>
<div style="left:155px;top:262px;width:4px;height:1px;background:#000"></div>
<div style="left:16px;top:300px;width:765px;height:1px;background:#989898"></div>
<div class="t" style="left:36px;top:311px;font-size:12.2px;color:#000;">Core_0</div>
<div class="t" style="left:-148px;width:300px;text-align:right;top:299px;font-size:12px;color:#000;">57.000</div>
<div style="left:155px;top:303px;width:4px;height:1px;background:#000"></div>
<div style="left:16px;top:341px;width:765px;height:1px;background:#989898"></div>
<div class="t" style="left:36px;top:352px;font-size:12.2px;color:#000;">Core_2</div>
<div class="t" style="left:-148px;width:300px;text-align:right;top:340px;font-size:12px;color:#000;">51.000</div>
<div style="left:155px;top:344px;width:4px;height:1px;background:#000"></div>
<div style="left:16px;top:382px;width:765px;height:1px;background:#989898"></div>
<div class="t" style="left:36px;top:393px;font-size:12.2px;color:#000;">Core_3</div>
<div class="t" style="left:-148px;width:300px;text-align:right;top:381px;font-size:12px;color:#000;">51.000</div>
<div style="left:155px;top:385px;width:4px;height:1px;background:#000"></div>
<div style="left:16px;top:423px;width:765px;height:1px;background:#989898"></div>
<div class="t" style="left:36px;top:434px;font-size:12.2px;color:#000;">SoC_DTS_1</div>
<div class="t" style="left:-148px;width:300px;text-align:right;top:422px;font-size:12px;color:#000;">45.000</div>
<div style="left:155px;top:426px;width:4px;height:1px;background:#000"></div>
<div style="left:16px;top:464px;width:765px;height:1px;background:#989898"></div>
<div class="t" style="left:36px;top:475px;font-size:12.2px;color:#000;">SoC_DTS_0</div>
<div class="t" style="left:-148px;width:300px;text-align:right;top:463px;font-size:12px;color:#000;">45.000</div>
<div style="left:155px;top:467px;width:4px;height:1px;background:#000"></div>
<div style="left:16px;top:505px;width:765px;height:1px;background:#989898"></div>
<div style="left:160px;top:251px;width:1px;height:7px;background:#000"></div>
<div style="left:169px;top:256px;width:1px;height:2px;background:#000"></div>
<div style="left:178px;top:256px;width:1px;height:2px;background:#000"></div>
<div style="left:186px;top:256px;width:1px;height:2px;background:#000"></div>
<div style="left:195px;top:256px;width:1px;height:2px;background:#000"></div>
<div style="left:204px;top:256px;width:1px;height:2px;background:#000"></div>
<div style="left:213px;top:256px;width:1px;height:2px;background:#000"></div>
<div style="left:222px;top:256px;width:1px;height:2px;background:#000"></div>
<div style="left:231px;top:256px;width:1px;height:2px;background:#000"></div>
<div style="left:239px;top:256px;width:1px;height:2px;background:#000"></div>
<div style="left:248px;top:251px;width:1px;height:7px;background:#000"></div>
<div style="left:257px;top:256px;width:1px;height:2px;background:#000"></div>
<div style="left:266px;top:256px;width:1px;height:2px;background:#000"></div>
<div style="left:275px;top:256px;width:1px;height:2px;background:#000"></div>
<div style="left:283px;top:256px;width:1px;height:2px;background:#000"></div>
<div style="left:292px;top:256px;width:1px;height:2px;background:#000"></div>
<div style="left:301px;top:256px;width:1px;height:2px;background:#000"></div>
<div style="left:310px;top:256px;width:1px;height:2px;background:#000"></div>
<div style="left:319px;top:256px;width:1px;height:2px;background:#000"></div>
<div style="left:327px;top:256px;width:1px;height:2px;background:#000"></div>
<div style="left:336px;top:251px;width:1px;height:7px;background:#000"></div>
<div style="left:345px;top:256px;width:1px;height:2px;background:#000"></div>
<div style="left:354px;top:256px;width:1px;height:2px;background:#000"></div>
<div style="left:363px;top:256px;width:1px;height:2px;background:#000"></div>
<div style="left:372px;top:256px;width:1px;height:2px;background:#000"></div>
<div style="left:380px;top:256px;width:1px;height:2px;background:#000"></div>
<div style="left:389px;top:256px;width:1px;height:2px;background:#000"></div>
<div style="left:398px;top:256px;width:1px;height:2px;background:#000"></div>
<div style="left:407px;top:256px;width:1px;height:2px;background:#000"></div>
<div style="left:416px;top:256px;width:1px;height:2px;background:#000"></div>
<div style="left:424px;top:251px;width:1px;height:7px;background:#000"></div>
<div style="left:433px;top:256px;width:1px;height:2px;background:#000"></div>
<div style="left:442px;top:256px;width:1px;height:2px;background:#000"></div>
<div style="left:451px;top:256px;width:1px;height:2px;background:#000"></div>
<div style="left:460px;top:256px;width:1px;height:2px;background:#000"></div>
<div style="left:468px;top:256px;width:1px;height:2px;background:#000"></div>
<div style="left:477px;top:256px;width:1px;height:2px;background:#000"></div>
<div style="left:486px;top:256px;width:1px;height:2px;background:#000"></div>
<div style="left:495px;top:256px;width:1px;height:2px;background:#000"></div>
<div style="left:504px;top:256px;width:1px;height:2px;background:#000"></div>
<div style="left:513px;top:251px;width:1px;height:7px;background:#000"></div>
<div style="left:521px;top:256px;width:1px;height:2px;background:#000"></div>
<div style="left:530px;top:256px;width:1px;height:2px;background:#000"></div>
<div style="left:539px;top:256px;width:1px;height:2px;background:#000"></div>
<div style="left:548px;top:256px;width:1px;height:2px;background:#000"></div>
<div style="left:557px;top:256px;width:1px;height:2px;background:#000"></div>
<div style="left:565px;top:256px;width:1px;height:2px;background:#000"></div>
<div style="left:574px;top:256px;width:1px;height:2px;background:#000"></div>
<div style="left:583px;top:256px;width:1px;height:2px;background:#000"></div>
<div style="left:592px;top:256px;width:1px;height:2px;background:#000"></div>
<div style="left:601px;top:251px;width:1px;height:7px;background:#000"></div>
<div style="left:610px;top:256px;width:1px;height:2px;background:#000"></div>
<div style="left:618px;top:256px;width:1px;height:2px;background:#000"></div>
<div style="left:627px;top:256px;width:1px;height:2px;background:#000"></div>
<div style="left:636px;top:256px;width:1px;height:2px;background:#000"></div>
<div style="left:645px;top:256px;width:1px;height:2px;background:#000"></div>
<div style="left:654px;top:256px;width:1px;height:2px;background:#000"></div>
<div style="left:662px;top:256px;width:1px;height:2px;background:#000"></div>
<div style="left:671px;top:256px;width:1px;height:2px;background:#000"></div>
<div style="left:680px;top:256px;width:1px;height:2px;background:#000"></div>
<div style="left:689px;top:251px;width:1px;height:7px;background:#000"></div>
<div style="left:698px;top:256px;width:1px;height:2px;background:#000"></div>
<div style="left:706px;top:256px;width:1px;height:2px;background:#000"></div>
<div style="left:715px;top:256px;width:1px;height:2px;background:#000"></div>
<div style="left:724px;top:256px;width:1px;height:2px;background:#000"></div>
<div style="left:733px;top:256px;width:1px;height:2px;background:#000"></div>
<div style="left:742px;top:256px;width:1px;height:2px;background:#000"></div>
<div style="left:751px;top:256px;width:1px;height:2px;background:#000"></div>
<div style="left:759px;top:256px;width:1px;height:2px;background:#000"></div>
<div style="left:768px;top:256px;width:1px;height:2px;background:#000"></div>
<div style="left:777px;top:251px;width:1px;height:7px;background:#000"></div>
<div style="left:160px;top:258px;width:622px;height:1px;background:#000"></div>
<div class="t" style="left:161px;top:234px;font-size:12px;color:#000;">0s</div>
<div class="t" style="left:98.63999999999999px;width:300px;text-align:center;top:234px;font-size:12px;color:#000;">5s</div>
<div class="t" style="left:186.77999999999997px;width:300px;text-align:center;top:234px;font-size:12px;color:#000;">10s</div>
<div class="t" style="left:274.92px;width:300px;text-align:center;top:234px;font-size:12px;color:#000;">15s</div>
<div class="t" style="left:363.05999999999995px;width:300px;text-align:center;top:234px;font-size:12px;color:#000;">20s</div>
<div class="t" style="left:451.20000000000005px;width:300px;text-align:center;top:234px;font-size:12px;color:#000;">25s</div>
<div class="t" style="left:539.34px;width:300px;text-align:center;top:234px;font-size:12px;color:#000;">30s</div>
<div class="t" style="left:477px;width:300px;text-align:right;top:234px;font-size:12px;color:#000;">35s</div>
<svg style="left:0;top:0" width="977" height="508"><g fill="#000"><polyline points="160.0,271.5 163.0,275.5 168.0,275.5 172.0,272.0 178.0,275.0 183.0,275.5 188.0,271.0 192.0,275.5 196.0,271.0 199.0,265.0 205.0,262.8 212.0,262.8 215.0,268.5 220.0,266.0 225.0,269.5 232.0,272.5 240.0,273.0" fill="none" stroke="#000" stroke-width="3.0" stroke-linejoin="round"/><polyline points="160.0,271.5 163.0,275.5 168.0,275.5 172.0,272.0 178.0,275.0 183.0,275.5 188.0,271.0 192.0,275.5 196.0,271.0 199.0,265.0 205.0,262.8 212.0,262.8 215.0,268.5 220.0,266.0 225.0,269.5 232.0,272.5 240.0,273.0 781.0,273.0" fill="none" stroke="#000" stroke-width="4.6" stroke-linejoin="round"/><path d="M239.0,270.7h2.0l1.2,1.2v2.0l-1.2,1.2h-2.0l-1.2,-1.2v-2.0z"/><path d="M242.0,270.9h2.0l1.2,1.2v2.0l-1.2,1.2h-2.0l-1.2,-1.2v-2.0z"/><path d="M245.0,270.9h2.0l1.2,1.2v2.0l-1.2,1.2h-2.0l-1.2,-1.2v-2.0z"/><path d="M248.0,270.7h2.0l1.2,1.2v2.0l-1.2,1.2h-2.0l-1.2,-1.2v-2.0z"/><path d="M251.0,270.8h2.0l1.2,1.2v2.0l-1.2,1.2h-2.0l-1.2,-1.2v-2.0z"/><path d="M254.0,270.8h2.0l1.2,1.2v2.0l-1.2,1.2h-2.0l-1.2,-1.2v-2.0z"/><path d="M257.0,270.9h2.0l1.2,1.2v2.0l-1.2,1.2h-2.0l-1.2,-1.2v-2.0z"/><path d="M260.0,270.9h2.0l1.2,1.2v2.0l-1.2,1.2h-2.0l-1.2,-1.2v-2.0z"/><path d="M263.0,270.6h2.0l1.2,1.2v2.0l-1.2,1.2h-2.0l-1.2,-1.2v-2.0z"/><path d="M266.0,270.6h2.0l1.2,1.2v2.0l-1.2,1.2h-2.0l-1.2,-1.2v-2.0z"/><path d="M269.0,270.9h2.0l1.2,1.2v2.0l-1.2,1.2h-2.0l-1.2,-1.2v-2.0z"/><path d="M272.0,270.8h2.0l1.2,1.2v2.0l-1.2,1.2h-2.0l-1.2,-1.2v-2.0z"/><path d="M275.0,270.9h2.0l1.2,1.2v2.0l-1.2,1.2h-2.0l-1.2,-1.2v-2.0z"/><path d="M278.0,270.6h2.0l1.2,1.2v2.0l-1.2,1.2h-2.0l-1.2,-1.2v-2.0z"/><path d="M281.0,270.8h2.0l1.2,1.2v2.0l-1.2,1.2h-2.0l-1.2,-1.2v-2.0z"/><path d="M284.0,270.9h2.0l1.2,1.2v2.0l-1.2,1.2h-2.0l-1.2,-1.2v-2.0z"/><path d="M287.0,270.7h2.0l1.2,1.2v2.0l-1.2,1.2h-2.0l-1.2,-1.2v-2.0z"/><path d="M290.0,271.0h2.0l1.2,1.2v2.0l-1.2,1.2h-2.0l-1.2,-1.2v-2.0z"/><path d="M293.0,271.0h2.0l1.2,1.2v2.0l-1.2,1.2h-2.0l-1.2,-1.2v-2.0z"/><path d="M296.0,270.6h2.0l1.2,1.2v2.0l-1.2,1.2h-2.0l-1.2,-1.2v-2.0z"/><path d="M299.0,270.6h2.0l1.2,1.2v2.0l-1.2,1.2h-2.0l-1.2,-1.2v-2.0z"/><path d="M302.0,270.8h2.0l1.2,1.2v2.0l-1.2,1.2h-2.0l-1.2,-1.2v-2.0z"/><path d="M305.0,271.0h2.0l1.2,1.2v2.0l-1.2,1.2h-2.0l-1.2,-1.2v-2.0z"/><path d="M308.0,270.8h2.0l1.2,1.2v2.0l-1.2,1.2h-2.0l-1.2,-1.2v-2.0z"/><path d="M311.0,270.7h2.0l1.2,1.2v2.0l-1.2,1.2h-2.0l-1.2,-1.2v-2.0z"/><path d="M314.0,270.8h2.0l1.2,1.2v2.0l-1.2,1.2h-2.0l-1.2,-1.2v-2.0z"/><path d="M317.0,270.6h2.0l1.2,1.2v2.0l-1.2,1.2h-2.0l-1.2,-1.2v-2.0z"/><path d="M320.0,270.7h2.0l1.2,1.2v2.0l-1.2,1.2h-2.0l-1.2,-1.2v-2.0z"/><path d="M323.0,270.8h2.0l1.2,1.2v2.0l-1.2,1.2h-2.0l-1.2,-1.2v-2.0z"/><path d="M326.0,270.8h2.0l1.2,1.2v2.0l-1.2,1.2h-2.0l-1.2,-1.2v-2.0z"/><path d="M329.0,270.7h2.0l1.2,1.2v2.0l-1.2,1.2h-2.0l-1.2,-1.2v-2.0z"/><path d="M332.0,270.7h2.0l1.2,1.2v2.0l-1.2,1.2h-2.0l-1.2,-1.2v-2.0z"/><path d="M335.0,270.7h2.0l1.2,1.2v2.0l-1.2,1.2h-2.0l-1.2,-1.2v-2.0z"/><path d="M338.0,270.8h2.0l1.2,1.2v2.0l-1.2,1.2h-2.0l-1.2,-1.2v-2.0z"/><path d="M341.0,270.7h2.0l1.2,1.2v2.0l-1.2,1.2h-2.0l-1.2,-1.2v-2.0z"/><path d="M344.0,270.6h2.0l1.2,1.2v2.0l-1.2,1.2h-2.0l-1.2,-1.2v-2.0z"/><path d="M347.0,270.9h2.0l1.2,1.2v2.0l-1.2,1.2h-2.0l-1.2,-1.2v-2.0z"/><path d="M350.0,270.8h2.0l1.2,1.2v2.0l-1.2,1.2h-2.0l-1.2,-1.2v-2.0z"/><path d="M353.0,270.9h2.0l1.2,1.2v2.0l-1.2,1.2h-2.0l-1.2,-1.2v-2.0z"/><path d="M356.0,270.7h2.0l1.2,1.2v2.0l-1.2,1.2h-2.0l-1.2,-1.2v-2.0z"/><path d="M359.0,271.0h2.0l1.2,1.2v2.0l-1.2,1.2h-2.0l-1.2,-1.2v-2.0z"/><path d="M362.0,270.9h2.0l1.2,1.2v2.0l-1.2,1.2h-2.0l-1.2,-1.2v-2.0z"/><path d="M365.0,270.6h2.0l1.2,1.2v2.0l-1.2,1.2h-2.0l-1.2,-1.2v-2.0z"/><path d="M368.0,270.7h2.0l1.2,1.2v2.0l-1.2,1.2h-2.0l-1.2,-1.2v-2.0z"/><path d="M371.0,270.9h2.0l1.2,1.2v2.0l-1.2,1.2h-2.0l-1.2,-1.2v-2.0z"/><path d="M374.0,270.9h2.0l1.2,1.2v2.0l-1.2,1.2h-2.0l-1.2,-1.2v-2.0z"/><path d="M377.0,271.0h2.0l1.2,1.2v2.0l-1.2,1.2h-2.0l-1.2,-1.2v-2.0z"/><path d="M380.0,270.8h2.0l1.2,1.2v2.0l-1.2,1.2h-2.0l-1.2,-1.2v-2.0z"/><path d="M383.0,270.9h2.0l1.2,1.2v2.0l-1.2,1.2h-2.0l-1.2,-1.2v-2.0z"/><path d="M386.0,270.9h2.0l1.2,1.2v2.0l-1.2,1.2h-2.0l-1.2,-1.2v-2.0z"/><path d="M389.0,270.7h2.0l1.2,1.2v2.0l-1.2,1.2h-2.0l-1.2,-1.2v-2.0z"/><path d="M392.0,270.8h2.0l1.2,1.2v2.0l-1.2,1.2h-2.0l-1.2,-1.2v-2.0z"/><path d="M395.0,271.0h2.0l1.2,1.2v2.0l-1.2,1.2h-2.0l-1.2,-1.2v-2.0z"/><path d="M398.0,270.9h2.0l1.2,1.2v2.0l-1.2,1.2h-2.0l-1.2,-1.2v-2.0z"/><path d="M401.0,270.8h2.0l1.2,1.2v2.0l-1.2,1.2h-2.0l-1.2,-1.2v-2.0z"/><path d="M404.0,270.8h2.0l1.2,1.2v2.0l-1.2,1.2h-2.0l-1.2,-1.2v-2.0z"/><path d="M407.0,270.6h2.0l1.2,1.2v2.0l-1.2,1.2h-2.0l-1.2,-1.2v-2.0z"/><path d="M410.0,270.7h2.0l1.2,1.2v2.0l-1.2,1.2h-2.0l-1.2,-1.2v-2.0z"/><path d="M413.0,270.9h2.0l1.2,1.2v2.0l-1.2,1.2h-2.0l-1.2,-1.2v-2.0z"/><path d="M416.0,270.8h2.0l1.2,1.2v2.0l-1.2,1.2h-2.0l-1.2,-1.2v-2.0z"/><path d="M419.0,270.7h2.0l1.2,1.2v2.0l-1.2,1.2h-2.0l-1.2,-1.2v-2.0z"/><path d="M422.0,270.8h2.0l1.2,1.2v2.0l-1.2,1.2h-2.0l-1.2,-1.2v-2.0z"/><path d="M425.0,270.9h2.0l1.2,1.2v2.0l-1.2,1.2h-2.0l-1.2,-1.2v-2.0z"/><path d="M428.0,270.9h2.0l1.2,1.2v2.0l-1.2,1.2h-2.0l-1.2,-1.2v-2.0z"/><path d="M431.0,270.7h2.0l1.2,1.2v2.0l-1.2,1.2h-2.0l-1.2,-1.2v-2.0z"/><path d="M434.0,270.8h2.0l1.2,1.2v2.0l-1.2,1.2h-2.0l-1.2,-1.2v-2.0z"/><path d="M437.0,270.8h2.0l1.2,1.2v2.0l-1.2,1.2h-2.0l-1.2,-1.2v-2.0z"/><path d="M440.0,270.9h2.0l1.2,1.2v2.0l-1.2,1.2h-2.0l-1.2,-1.2v-2.0z"/><path d="M443.0,270.8h2.0l1.2,1.2v2.0l-1.2,1.2h-2.0l-1.2,-1.2v-2.0z"/><path d="M446.0,270.8h2.0l1.2,1.2v2.0l-1.2,1.2h-2.0l-1.2,-1.2v-2.0z"/><path d="M449.0,270.8h2.0l1.2,1.2v2.0l-1.2,1.2h-2.0l-1.2,-1.2v-2.0z"/><path d="M452.0,270.6h2.0l1.2,1.2v2.0l-1.2,1.2h-2.0l-1.2,-1.2v-2.0z"/><path d="M455.0,270.6h2.0l1.2,1.2v2.0l-1.2,1.2h-2.0l-1.2,-1.2v-2.0z"/><path d="M458.0,270.9h2.0l1.2,1.2v2.0l-1.2,1.2h-2.0l-1.2,-1.2v-2.0z"/><path d="M461.0,271.0h2.0l1.2,1.2v2.0l-1.2,1.2h-2.0l-1.2,-1.2v-2.0z"/><path d="M464.0,270.8h2.0l1.2,1.2v2.0l-1.2,1.2h-2.0l-1.2,-1.2v-2.0z"/><path d="M467.0,270.8h2.0l1.2,1.2v2.0l-1.2,1.2h-2.0l-1.2,-1.2v-2.0z"/><path d="M470.0,270.7h2.0l1.2,1.2v2.0l-1.2,1.2h-2.0l-1.2,-1.2v-2.0z"/><path d="M473.0,270.8h2.0l1.2,1.2v2.0l-1.2,1.2h-2.0l-1.2,-1.2v-2.0z"/><path d="M476.0,271.0h2.0l1.2,1.2v2.0l-1.2,1.2h-2.0l-1.2,-1.2v-2.0z"/><path d="M479.0,270.9h2.0l1.2,1.2v2.0l-1.2,1.2h-2.0l-1.2,-1.2v-2.0z"/><path d="M482.0,270.8h2.0l1.2,1.2v2.0l-1.2,1.2h-2.0l-1.2,-1.2v-2.0z"/><path d="M485.0,270.9h2.0l1.2,1.2v2.0l-1.2,1.2h-2.0l-1.2,-1.2v-2.0z"/><path d="M488.0,270.7h2.0l1.2,1.2v2.0l-1.2,1.2h-2.0l-1.2,-1.2v-2.0z"/><path d="M491.0,270.8h2.0l1.2,1.2v2.0l-1.2,1.2h-2.0l-1.2,-1.2v-2.0z"/><path d="M494.0,271.0h2.0l1.2,1.2v2.0l-1.2,1.2h-2.0l-1.2,-1.2v-2.0z"/><path d="M497.0,270.8h2.0l1.2,1.2v2.0l-1.2,1.2h-2.0l-1.2,-1.2v-2.0z"/><path d="M500.0,270.8h2.0l1.2,1.2v2.0l-1.2,1.2h-2.0l-1.2,-1.2v-2.0z"/><path d="M503.0,270.7h2.0l1.2,1.2v2.0l-1.2,1.2h-2.0l-1.2,-1.2v-2.0z"/><path d="M506.0,270.8h2.0l1.2,1.2v2.0l-1.2,1.2h-2.0l-1.2,-1.2v-2.0z"/><path d="M509.0,271.0h2.0l1.2,1.2v2.0l-1.2,1.2h-2.0l-1.2,-1.2v-2.0z"/><path d="M512.0,270.6h2.0l1.2,1.2v2.0l-1.2,1.2h-2.0l-1.2,-1.2v-2.0z"/><path d="M515.0,270.9h2.0l1.2,1.2v2.0l-1.2,1.2h-2.0l-1.2,-1.2v-2.0z"/><path d="M518.0,270.9h2.0l1.2,1.2v2.0l-1.2,1.2h-2.0l-1.2,-1.2v-2.0z"/><path d="M521.0,271.0h2.0l1.2,1.2v2.0l-1.2,1.2h-2.0l-1.2,-1.2v-2.0z"/><path d="M524.0,270.9h2.0l1.2,1.2v2.0l-1.2,1.2h-2.0l-1.2,-1.2v-2.0z"/><path d="M527.0,270.9h2.0l1.2,1.2v2.0l-1.2,1.2h-2.0l-1.2,-1.2v-2.0z"/><path d="M530.0,270.8h2.0l1.2,1.2v2.0l-1.2,1.2h-2.0l-1.2,-1.2v-2.0z"/><path d="M533.0,270.8h2.0l1.2,1.2v2.0l-1.2,1.2h-2.0l-1.2,-1.2v-2.0z"/><path d="M536.0,270.8h2.0l1.2,1.2v2.0l-1.2,1.2h-2.0l-1.2,-1.2v-2.0z"/><path d="M539.0,270.6h2.0l1.2,1.2v2.0l-1.2,1.2h-2.0l-1.2,-1.2v-2.0z"/><path d="M542.0,270.9h2.0l1.2,1.2v2.0l-1.2,1.2h-2.0l-1.2,-1.2v-2.0z"/><path d="M545.0,270.8h2.0l1.2,1.2v2.0l-1.2,1.2h-2.0l-1.2,-1.2v-2.0z"/><path d="M548.0,270.7h2.0l1.2,1.2v2.0l-1.2,1.2h-2.0l-1.2,-1.2v-2.0z"/><path d="M551.0,270.8h2.0l1.2,1.2v2.0l-1.2,1.2h-2.0l-1.2,-1.2v-2.0z"/><path d="M554.0,270.8h2.0l1.2,1.2v2.0l-1.2,1.2h-2.0l-1.2,-1.2v-2.0z"/><path d="M557.0,270.7h2.0l1.2,1.2v2.0l-1.2,1.2h-2.0l-1.2,-1.2v-2.0z"/><path d="M560.0,270.7h2.0l1.2,1.2v2.0l-1.2,1.2h-2.0l-1.2,-1.2v-2.0z"/><path d="M563.0,270.8h2.0l1.2,1.2v2.0l-1.2,1.2h-2.0l-1.2,-1.2v-2.0z"/><path d="M566.0,270.8h2.0l1.2,1.2v2.0l-1.2,1.2h-2.0l-1.2,-1.2v-2.0z"/><path d="M569.0,270.8h2.0l1.2,1.2v2.0l-1.2,1.2h-2.0l-1.2,-1.2v-2.0z"/><path d="M572.0,270.8h2.0l1.2,1.2v2.0l-1.2,1.2h-2.0l-1.2,-1.2v-2.0z"/><path d="M575.0,270.6h2.0l1.2,1.2v2.0l-1.2,1.2h-2.0l-1.2,-1.2v-2.0z"/><path d="M578.0,270.7h2.0l1.2,1.2v2.0l-1.2,1.2h-2.0l-1.2,-1.2v-2.0z"/><path d="M581.0,270.7h2.0l1.2,1.2v2.0l-1.2,1.2h-2.0l-1.2,-1.2v-2.0z"/><path d="M584.0,270.8h2.0l1.2,1.2v2.0l-1.2,1.2h-2.0l-1.2,-1.2v-2.0z"/><path d="M587.0,270.9h2.0l1.2,1.2v2.0l-1.2,1.2h-2.0l-1.2,-1.2v-2.0z"/><path d="M590.0,270.9h2.0l1.2,1.2v2.0l-1.2,1.2h-2.0l-1.2,-1.2v-2.0z"/><path d="M593.0,270.9h2.0l1.2,1.2v2.0l-1.2,1.2h-2.0l-1.2,-1.2v-2.0z"/><path d="M596.0,270.9h2.0l1.2,1.2v2.0l-1.2,1.2h-2.0l-1.2,-1.2v-2.0z"/><path d="M599.0,270.7h2.0l1.2,1.2v2.0l-1.2,1.2h-2.0l-1.2,-1.2v-2.0z"/><path d="M602.0,270.9h2.0l1.2,1.2v2.0l-1.2,1.2h-2.0l-1.2,-1.2v-2.0z"/><path d="M605.0,270.9h2.0l1.2,1.2v2.0l-1.2,1.2h-2.0l-1.2,-1.2v-2.0z"/><path d="M608.0,270.6h2.0l1.2,1.2v2.0l-1.2,1.2h-2.0l-1.2,-1.2v-2.0z"/><path d="M611.0,270.6h2.0l1.2,1.2v2.0l-1.2,1.2h-2.0l-1.2,-1.2v-2.0z"/><path d="M614.0,270.6h2.0l1.2,1.2v2.0l-1.2,1.2h-2.0l-1.2,-1.2v-2.0z"/><path d="M617.0,270.9h2.0l1.2,1.2v2.0l-1.2,1.2h-2.0l-1.2,-1.2v-2.0z"/><path d="M620.0,270.7h2.0l1.2,1.2v2.0l-1.2,1.2h-2.0l-1.2,-1.2v-2.0z"/><path d="M623.0,270.6h2.0l1.2,1.2v2.0l-1.2,1.2h-2.0l-1.2,-1.2v-2.0z"/><path d="M626.0,270.8h2.0l1.2,1.2v2.0l-1.2,1.2h-2.0l-1.2,-1.2v-2.0z"/><path d="M629.0,270.7h2.0l1.2,1.2v2.0l-1.2,1.2h-2.0l-1.2,-1.2v-2.0z"/><path d="M632.0,270.6h2.0l1.2,1.2v2.0l-1.2,1.2h-2.0l-1.2,-1.2v-2.0z"/><path d="M635.0,270.7h2.0l1.2,1.2v2.0l-1.2,1.2h-2.0l-1.2,-1.2v-2.0z"/><path d="M638.0,270.8h2.0l1.2,1.2v2.0l-1.2,1.2h-2.0l-1.2,-1.2v-2.0z"/><path d="M641.0,270.7h2.0l1.2,1.2v2.0l-1.2,1.2h-2.0l-1.2,-1.2v-2.0z"/><path d="M644.0,270.7h2.0l1.2,1.2v2.0l-1.2,1.2h-2.0l-1.2,-1.2v-2.0z"/><path d="M647.0,270.9h2.0l1.2,1.2v2.0l-1.2,1.2h-2.0l-1.2,-1.2v-2.0z"/><path d="M650.0,270.8h2.0l1.2,1.2v2.0l-1.2,1.2h-2.0l-1.2,-1.2v-2.0z"/><path d="M653.0,270.7h2.0l1.2,1.2v2.0l-1.2,1.2h-2.0l-1.2,-1.2v-2.0z"/><path d="M656.0,270.8h2.0l1.2,1.2v2.0l-1.2,1.2h-2.0l-1.2,-1.2v-2.0z"/><path d="M659.0,270.6h2.0l1.2,1.2v2.0l-1.2,1.2h-2.0l-1.2,-1.2v-2.0z"/><path d="M662.0,270.8h2.0l1.2,1.2v2.0l-1.2,1.2h-2.0l-1.2,-1.2v-2.0z"/><path d="M665.0,270.8h2.0l1.2,1.2v2.0l-1.2,1.2h-2.0l-1.2,-1.2v-2.0z"/><path d="M668.0,270.7h2.0l1.2,1.2v2.0l-1.2,1.2h-2.0l-1.2,-1.2v-2.0z"/><path d="M671.0,270.6h2.0l1.2,1.2v2.0l-1.2,1.2h-2.0l-1.2,-1.2v-2.0z"/><path d="M674.0,271.0h2.0l1.2,1.2v2.0l-1.2,1.2h-2.0l-1.2,-1.2v-2.0z"/><path d="M677.0,270.8h2.0l1.2,1.2v2.0l-1.2,1.2h-2.0l-1.2,-1.2v-2.0z"/><path d="M680.0,270.7h2.0l1.2,1.2v2.0l-1.2,1.2h-2.0l-1.2,-1.2v-2.0z"/><path d="M683.0,270.8h2.0l1.2,1.2v2.0l-1.2,1.2h-2.0l-1.2,-1.2v-2.0z"/><path d="M686.0,270.9h2.0l1.2,1.2v2.0l-1.2,1.2h-2.0l-1.2,-1.2v-2.0z"/><path d="M689.0,270.6h2.0l1.2,1.2v2.0l-1.2,1.2h-2.0l-1.2,-1.2v-2.0z"/><path d="M692.0,270.6h2.0l1.2,1.2v2.0l-1.2,1.2h-2.0l-1.2,-1.2v-2.0z"/><path d="M695.0,270.7h2.0l1.2,1.2v2.0l-1.2,1.2h-2.0l-1.2,-1.2v-2.0z"/><path d="M698.0,270.9h2.0l1.2,1.2v2.0l-1.2,1.2h-2.0l-1.2,-1.2v-2.0z"/><path d="M701.0,270.7h2.0l1.2,1.2v2.0l-1.2,1.2h-2.0l-1.2,-1.2v-2.0z"/><path d="M704.0,270.9h2.0l1.2,1.2v2.0l-1.2,1.2h-2.0l-1.2,-1.2v-2.0z"/><path d="M707.0,270.9h2.0l1.2,1.2v2.0l-1.2,1.2h-2.0l-1.2,-1.2v-2.0z"/><path d="M710.0,270.8h2.0l1.2,1.2v2.0l-1.2,1.2h-2.0l-1.2,-1.2v-2.0z"/><path d="M713.0,270.7h2.0l1.2,1.2v2.0l-1.2,1.2h-2.0l-1.2,-1.2v-2.0z"/><path d="M716.0,271.0h2.0l1.2,1.2v2.0l-1.2,1.2h-2.0l-1.2,-1.2v-2.0z"/><path d="M719.0,270.9h2.0l1.2,1.2v2.0l-1.2,1.2h-2.0l-1.2,-1.2v-2.0z"/><path d="M722.0,270.8h2.0l1.2,1.2v2.0l-1.2,1.2h-2.0l-1.2,-1.2v-2.0z"/><path d="M725.0,270.7h2.0l1.2,1.2v2.0l-1.2,1.2h-2.0l-1.2,-1.2v-2.0z"/><path d="M728.0,270.9h2.0l1.2,1.2v2.0l-1.2,1.2h-2.0l-1.2,-1.2v-2.0z"/><path d="M731.0,270.8h2.0l1.2,1.2v2.0l-1.2,1.2h-2.0l-1.2,-1.2v-2.0z"/><path d="M734.0,270.8h2.0l1.2,1.2v2.0l-1.2,1.2h-2.0l-1.2,-1.2v-2.0z"/><path d="M737.0,270.7h2.0l1.2,1.2v2.0l-1.2,1.2h-2.0l-1.2,-1.2v-2.0z"/><path d="M740.0,270.9h2.0l1.2,1.2v2.0l-1.2,1.2h-2.0l-1.2,-1.2v-2.0z"/><path d="M743.0,270.6h2.0l1.2,1.2v2.0l-1.2,1.2h-2.0l-1.2,-1.2v-2.0z"/><path d="M746.0,270.7h2.0l1.2,1.2v2.0l-1.2,1.2h-2.0l-1.2,-1.2v-2.0z"/><path d="M749.0,271.0h2.0l1.2,1.2v2.0l-1.2,1.2h-2.0l-1.2,-1.2v-2.0z"/><path d="M752.0,271.0h2.0l1.2,1.2v2.0l-1.2,1.2h-2.0l-1.2,-1.2v-2.0z"/><path d="M755.0,270.7h2.0l1.2,1.2v2.0l-1.2,1.2h-2.0l-1.2,-1.2v-2.0z"/><path d="M758.0,270.9h2.0l1.2,1.2v2.0l-1.2,1.2h-2.0l-1.2,-1.2v-2.0z"/><path d="M761.0,270.7h2.0l1.2,1.2v2.0l-1.2,1.2h-2.0l-1.2,-1.2v-2.0z"/><path d="M764.0,271.0h2.0l1.2,1.2v2.0l-1.2,1.2h-2.0l-1.2,-1.2v-2.0z"/><path d="M767.0,270.9h2.0l1.2,1.2v2.0l-1.2,1.2h-2.0l-1.2,-1.2v-2.0z"/><path d="M770.0,270.8h2.0l1.2,1.2v2.0l-1.2,1.2h-2.0l-1.2,-1.2v-2.0z"/><path d="M773.0,270.7h2.0l1.2,1.2v2.0l-1.2,1.2h-2.0l-1.2,-1.2v-2.0z"/><path d="M776.0,270.6h2.0l1.2,1.2v2.0l-1.2,1.2h-2.0l-1.2,-1.2v-2.0z"/><path d="M779.0,271.0h2.0l1.2,1.2v2.0l-1.2,1.2h-2.0l-1.2,-1.2v-2.0z"/><path d="M160.1,270.2h1.9l1.2,1.2v1.9l-1.2,1.2h-1.9l-1.2,-1.2v-1.9z"/><path d="M163.1,273.7h1.9l1.2,1.2v1.9l-1.2,1.2h-1.9l-1.2,-1.2v-1.9z"/><path d="M166.1,273.6h1.9l1.2,1.2v1.9l-1.2,1.2h-1.9l-1.2,-1.2v-1.9z"/><path d="M169.1,271.6h1.9l1.2,1.2v1.9l-1.2,1.2h-1.9l-1.2,-1.2v-1.9z"/><path d="M172.1,269.9h1.9l1.2,1.2v1.9l-1.2,1.2h-1.9l-1.2,-1.2v-1.9z"/><path d="M175.1,272.4h1.9l1.2,1.2v1.9l-1.2,1.2h-1.9l-1.2,-1.2v-1.9z"/><path d="M178.1,273.5h1.9l1.2,1.2v1.9l-1.2,1.2h-1.9l-1.2,-1.2v-1.9z"/><path d="M181.1,273.3h1.9l1.2,1.2v1.9l-1.2,1.2h-1.9l-1.2,-1.2v-1.9z"/><path d="M184.1,271.6h1.9l1.2,1.2v1.9l-1.2,1.2h-1.9l-1.2,-1.2v-1.9z"/><path d="M187.1,268.5h1.9l1.2,1.2v1.9l-1.2,1.2h-1.9l-1.2,-1.2v-1.9z"/><path d="M190.1,271.5h1.9l1.2,1.2v1.9l-1.2,1.2h-1.9l-1.2,-1.2v-1.9z"/><path d="M193.1,270.9h1.9l1.2,1.2v1.9l-1.2,1.2h-1.9l-1.2,-1.2v-1.9z"/><path d="M196.1,267.0h1.9l1.2,1.2v1.9l-1.2,1.2h-1.9l-1.2,-1.2v-1.9z"/><path d="M199.1,261.8h1.9l1.2,1.2v1.9l-1.2,1.2h-1.9l-1.2,-1.2v-1.9z"/><path d="M202.1,261.9h1.9l1.2,1.2v1.9l-1.2,1.2h-1.9l-1.2,-1.2v-1.9z"/><path d="M205.1,260.3h1.9l1.2,1.2v1.9l-1.2,1.2h-1.9l-1.2,-1.2v-1.9z"/><path d="M208.1,260.3h1.9l1.2,1.2v1.9l-1.2,1.2h-1.9l-1.2,-1.2v-1.9z"/><path d="M211.1,260.0h1.9l1.2,1.2v1.9l-1.2,1.2h-1.9l-1.2,-1.2v-1.9z"/><path d="M214.1,267.2h1.9l1.2,1.2v1.9l-1.2,1.2h-1.9l-1.2,-1.2v-1.9z"/><path d="M217.1,265.3h1.9l1.2,1.2v1.9l-1.2,1.2h-1.9l-1.2,-1.2v-1.9z"/><path d="M223.1,267.3h1.9l1.2,1.2v1.9l-1.2,1.2h-1.9l-1.2,-1.2v-1.9z"/><path d="M226.1,268.4h1.9l1.2,1.2v1.9l-1.2,1.2h-1.9l-1.2,-1.2v-1.9z"/><path d="M229.1,268.8h1.9l1.2,1.2v1.9l-1.2,1.2h-1.9l-1.2,-1.2v-1.9z"/><path d="M232.1,270.2h1.9l1.2,1.2v1.9l-1.2,1.2h-1.9l-1.2,-1.2v-1.9z"/><path d="M235.1,270.6h1.9l1.2,1.2v1.9l-1.2,1.2h-1.9l-1.2,-1.2v-1.9z"/><path d="M218.9,261.5h2.2l1.4,1.4v2.2l-1.4,1.4h-2.2l-1.4,-1.4v-2.2z"/><path d="M204.9,260.0h2.2l1.4,1.4v2.2l-1.4,1.4h-2.2l-1.4,-1.4v-2.2z"/><path d="M209.9,260.0h2.2l1.4,1.4v2.2l-1.4,1.4h-2.2l-1.4,-1.4v-2.2z"/><path d="M274.2,268.9h1.6l1.0,1.0v1.6l-1.0,1.0h-1.6l-1.0,-1.0v-1.6z"/><path d="M422.2,268.9h1.6l1.0,1.0v1.6l-1.0,1.0h-1.6l-1.0,-1.0v-1.6z"/><path d="M492.2,268.9h1.6l1.0,1.0v1.6l-1.0,1.0h-1.6l-1.0,-1.0v-1.6z"/><path d="M510.2,268.9h1.6l1.0,1.0v1.6l-1.0,1.0h-1.6l-1.0,-1.0v-1.6z"/><path d="M528.2,268.9h1.6l1.0,1.0v1.6l-1.0,1.0h-1.6l-1.0,-1.0v-1.6z"/><path d="M546.2,268.9h1.6l1.0,1.0v1.6l-1.0,1.0h-1.6l-1.0,-1.0v-1.6z"/><path d="M564.2,268.9h1.6l1.0,1.0v1.6l-1.0,1.0h-1.6l-1.0,-1.0v-1.6z"/><path d="M582.2,268.9h1.6l1.0,1.0v1.6l-1.0,1.0h-1.6l-1.0,-1.0v-1.6z"/><path d="M618.2,268.9h1.6l1.0,1.0v1.6l-1.0,1.0h-1.6l-1.0,-1.0v-1.6z"/><path d="M636.2,268.9h1.6l1.0,1.0v1.6l-1.0,1.0h-1.6l-1.0,-1.0v-1.6z"/><path d="M646.2,268.9h1.6l1.0,1.0v1.6l-1.0,1.0h-1.6l-1.0,-1.0v-1.6z"/><path d="M654.2,268.9h1.6l1.0,1.0v1.6l-1.0,1.0h-1.6l-1.0,-1.0v-1.6z"/><path d="M672.2,268.9h1.6l1.0,1.0v1.6l-1.0,1.0h-1.6l-1.0,-1.0v-1.6z"/><path d="M708.2,268.9h1.6l1.0,1.0v1.6l-1.0,1.0h-1.6l-1.0,-1.0v-1.6z"/><path d="M725.2,268.9h1.6l1.0,1.0v1.6l-1.0,1.0h-1.6l-1.0,-1.0v-1.6z"/><path d="M761.2,268.9h1.6l1.0,1.0v1.6l-1.0,1.0h-1.6l-1.0,-1.0v-1.6z"/><path d="M692.1,268.1h1.9l1.2,1.2v1.9l-1.2,1.2h-1.9l-1.2,-1.2v-1.9z"/><path d="M744.1,268.1h1.9l1.2,1.2v1.9l-1.2,1.2h-1.9l-1.2,-1.2v-1.9z"/><path d="M779.1,268.1h1.9l1.2,1.2v1.9l-1.2,1.2h-1.9l-1.2,-1.2v-1.9z"/><path d="M159.3,312.0h2.3l1.4,1.4v2.3l-1.4,1.4h-2.3l-1.4,-1.4v-2.3z"/><path d="M160.8,313.1h2.3l1.4,1.4v2.3l-1.4,1.4h-2.3l-1.4,-1.4v-2.3z"/><path d="M162.3,313.9h2.3l1.4,1.4v2.3l-1.4,1.4h-2.3l-1.4,-1.4v-2.3z"/><path d="M163.8,314.3h2.3l1.4,1.4v2.3l-1.4,1.4h-2.3l-1.4,-1.4v-2.3z"/><path d="M165.3,314.6h2.3l1.4,1.4v2.3l-1.4,1.4h-2.3l-1.4,-1.4v-2.3z"/><path d="M166.8,315.0h2.3l1.4,1.4v2.3l-1.4,1.4h-2.3l-1.4,-1.4v-2.3z"/><path d="M168.3,314.8h2.3l1.4,1.4v2.3l-1.4,1.4h-2.3l-1.4,-1.4v-2.3z"/><path d="M169.8,314.6h2.3l1.4,1.4v2.3l-1.4,1.4h-2.3l-1.4,-1.4v-2.3z"/><path d="M171.3,314.5h2.3l1.4,1.4v2.3l-1.4,1.4h-2.3l-1.4,-1.4v-2.3z"/><path d="M172.8,314.3h2.3l1.4,1.4v2.3l-1.4,1.4h-2.3l-1.4,-1.4v-2.3z"/><path d="M174.3,314.1h2.3l1.4,1.4v2.3l-1.4,1.4h-2.3l-1.4,-1.4v-2.3z"/><path d="M175.8,313.9h2.3l1.4,1.4v2.3l-1.4,1.4h-2.3l-1.4,-1.4v-2.3z"/><path d="M177.3,313.9h2.3l1.4,1.4v2.3l-1.4,1.4h-2.3l-1.4,-1.4v-2.3z"/><path d="M178.8,314.3h2.3l1.4,1.4v2.3l-1.4,1.4h-2.3l-1.4,-1.4v-2.3z"/><path d="M180.3,314.3h2.3l1.4,1.4v2.3l-1.4,1.4h-2.3l-1.4,-1.4v-2.3z"/><path d="M181.8,313.4h2.3l1.4,1.4v2.3l-1.4,1.4h-2.3l-1.4,-1.4v-2.3z"/><path d="M183.3,312.6h2.3l1.4,1.4v2.3l-1.4,1.4h-2.3l-1.4,-1.4v-2.3z"/><path d="M184.8,311.7h2.3l1.4,1.4v2.3l-1.4,1.4h-2.3l-1.4,-1.4v-2.3z"/><path d="M186.3,310.8h2.3l1.4,1.4v2.3l-1.4,1.4h-2.3l-1.4,-1.4v-2.3z"/><path d="M187.8,309.9h2.3l1.4,1.4v2.3l-1.4,1.4h-2.3l-1.4,-1.4v-2.3z"/><path d="M189.3,309.0h2.3l1.4,1.4v2.3l-1.4,1.4h-2.3l-1.4,-1.4v-2.3z"/><path d="M190.8,308.1h2.3l1.4,1.4v2.3l-1.4,1.4h-2.3l-1.4,-1.4v-2.3z"/><path d="M192.3,308.1h2.3l1.4,1.4v2.3l-1.4,1.4h-2.3l-1.4,-1.4v-2.3z"/><path d="M193.8,308.1h2.3l1.4,1.4v2.3l-1.4,1.4h-2.3l-1.4,-1.4v-2.3z"/><path d="M195.3,306.0h2.3l1.4,1.4v2.3l-1.4,1.4h-2.3l-1.4,-1.4v-2.3z"/><path d="M196.8,303.8h2.3l1.4,1.4v2.3l-1.4,1.4h-2.3l-1.4,-1.4v-2.3z"/><path d="M198.3,303.3h2.3l1.4,1.4v2.3l-1.4,1.4h-2.3l-1.4,-1.4v-2.3z"/><path d="M199.8,306.2h2.3l1.4,1.4v2.3l-1.4,1.4h-2.3l-1.4,-1.4v-2.3z"/><path d="M201.3,308.1h2.3l1.4,1.4v2.3l-1.4,1.4h-2.3l-1.4,-1.4v-2.3z"/><path d="M202.8,308.2h2.3l1.4,1.4v2.3l-1.4,1.4h-2.3l-1.4,-1.4v-2.3z"/><path d="M204.3,308.3h2.3l1.4,1.4v2.3l-1.4,1.4h-2.3l-1.4,-1.4v-2.3z"/><path d="M205.8,308.4h2.3l1.4,1.4v2.3l-1.4,1.4h-2.3l-1.4,-1.4v-2.3z"/><path d="M207.3,307.8h2.3l1.4,1.4v2.3l-1.4,1.4h-2.3l-1.4,-1.4v-2.3z"/><path d="M208.8,307.2h2.3l1.4,1.4v2.3l-1.4,1.4h-2.3l-1.4,-1.4v-2.3z"/><path d="M210.3,306.6h2.3l1.4,1.4v2.3l-1.4,1.4h-2.3l-1.4,-1.4v-2.3z"/><path d="M211.8,305.8h2.3l1.4,1.4v2.3l-1.4,1.4h-2.3l-1.4,-1.4v-2.3z"/><path d="M213.3,304.9h2.3l1.4,1.4v2.3l-1.4,1.4h-2.3l-1.4,-1.4v-2.3z"/><path d="M214.8,304.0h2.3l1.4,1.4v2.3l-1.4,1.4h-2.3l-1.4,-1.4v-2.3z"/><path d="M216.3,303.8h2.3l1.4,1.4v2.3l-1.4,1.4h-2.3l-1.4,-1.4v-2.3z"/><path d="M217.8,303.5h2.3l1.4,1.4v2.3l-1.4,1.4h-2.3l-1.4,-1.4v-2.3z"/><path d="M219.3,303.3h2.3l1.4,1.4v2.3l-1.4,1.4h-2.3l-1.4,-1.4v-2.3z"/><path d="M220.8,303.1h2.3l1.4,1.4v2.3l-1.4,1.4h-2.3l-1.4,-1.4v-2.3z"/><path d="M222.3,303.5h2.3l1.4,1.4v2.3l-1.4,1.4h-2.3l-1.4,-1.4v-2.3z"/><path d="M223.8,305.2h2.3l1.4,1.4v2.3l-1.4,1.4h-2.3l-1.4,-1.4v-2.3z"/><path d="M225.3,307.0h2.3l1.4,1.4v2.3l-1.4,1.4h-2.3l-1.4,-1.4v-2.3z"/><path d="M226.8,308.6h2.3l1.4,1.4v2.3l-1.4,1.4h-2.3l-1.4,-1.4v-2.3z"/><path d="M228.3,310.3h2.3l1.4,1.4v2.3l-1.4,1.4h-2.3l-1.4,-1.4v-2.3z"/><path d="M229.8,309.6h2.3l1.4,1.4v2.3l-1.4,1.4h-2.3l-1.4,-1.4v-2.3z"/><path d="M231.3,307.6h2.3l1.4,1.4v2.3l-1.4,1.4h-2.3l-1.4,-1.4v-2.3z"/><path d="M232.8,305.6h2.3l1.4,1.4v2.3l-1.4,1.4h-2.3l-1.4,-1.4v-2.3z"/><path d="M234.3,305.8h2.3l1.4,1.4v2.3l-1.4,1.4h-2.3l-1.4,-1.4v-2.3z"/><path d="M235.8,306.0h2.3l1.4,1.4v2.3l-1.4,1.4h-2.3l-1.4,-1.4v-2.3z"/><path d="M237.3,306.2h2.3l1.4,1.4v2.3l-1.4,1.4h-2.3l-1.4,-1.4v-2.3z"/><path d="M238.8,306.4h2.3l1.4,1.4v2.3l-1.4,1.4h-2.3l-1.4,-1.4v-2.3z"/><path d="M240.3,307.0h2.3l1.4,1.4v2.3l-1.4,1.4h-2.3l-1.4,-1.4v-2.3z"/><path d="M241.8,307.6h2.3l1.4,1.4v2.3l-1.4,1.4h-2.3l-1.4,-1.4v-2.3z"/><path d="M243.3,308.2h2.3l1.4,1.4v2.3l-1.4,1.4h-2.3l-1.4,-1.4v-2.3z"/><path d="M164.8,308.8h2.4l1.5,1.5v2.4l-1.5,1.5h-2.4l-1.5,-1.5v-2.4z"/><path d="M172.3,306.7h2.4l1.5,1.5v2.4l-1.5,1.5h-2.4l-1.5,-1.5v-2.4z"/><path d="M205.8,301.0h2.4l1.5,1.5v2.4l-1.5,1.5h-2.4l-1.5,-1.5v-2.4z"/><path d="M244.9,306.8h2.3l1.4,1.4v2.3l-1.4,1.4h-2.3l-1.4,-1.4v-2.3z"/><path d="M247.9,306.8h2.3l1.4,1.4v2.3l-1.4,1.4h-2.3l-1.4,-1.4v-2.3z"/><path d="M249.4,311.8h2.3l1.4,1.4v2.3l-1.4,1.4h-2.3l-1.4,-1.4v-2.3z"/><path d="M251.4,306.8h2.3l1.4,1.4v2.3l-1.4,1.4h-2.3l-1.4,-1.4v-2.3z"/><path d="M252.9,311.8h2.3l1.4,1.4v2.3l-1.4,1.4h-2.3l-1.4,-1.4v-2.3z"/><path d="M254.4,309.2h2.3l1.4,1.4v2.3l-1.4,1.4h-2.3l-1.4,-1.4v-2.3z"/><path d="M257.9,311.8h2.3l1.4,1.4v2.3l-1.4,1.4h-2.3l-1.4,-1.4v-2.3z"/><path d="M260.9,311.8h2.3l1.4,1.4v2.3l-1.4,1.4h-2.3l-1.4,-1.4v-2.3z"/><path d="M262.4,306.8h2.3l1.4,1.4v2.3l-1.4,1.4h-2.3l-1.4,-1.4v-2.3z"/><path d="M263.4,309.2h2.3l1.4,1.4v2.3l-1.4,1.4h-2.3l-1.4,-1.4v-2.3z"/><path d="M264.9,309.2h2.3l1.4,1.4v2.3l-1.4,1.4h-2.3l-1.4,-1.4v-2.3z"/><path d="M265.9,311.8h2.3l1.4,1.4v2.3l-1.4,1.4h-2.3l-1.4,-1.4v-2.3z"/><path d="M269.4,311.8h2.3l1.4,1.4v2.3l-1.4,1.4h-2.3l-1.4,-1.4v-2.3z"/><path d="M272.4,309.2h2.3l1.4,1.4v2.3l-1.4,1.4h-2.3l-1.4,-1.4v-2.3z"/><path d="M275.4,306.8h2.3l1.4,1.4v2.3l-1.4,1.4h-2.3l-1.4,-1.4v-2.3z"/><path d="M278.9,311.8h2.3l1.4,1.4v2.3l-1.4,1.4h-2.3l-1.4,-1.4v-2.3z"/><path d="M281.4,306.8h2.3l1.4,1.4v2.3l-1.4,1.4h-2.3l-1.4,-1.4v-2.3z"/><path d="M284.4,311.8h2.3l1.4,1.4v2.3l-1.4,1.4h-2.3l-1.4,-1.4v-2.3z"/><path d="M286.9,306.8h2.3l1.4,1.4v2.3l-1.4,1.4h-2.3l-1.4,-1.4v-2.3z"/><path d="M288.4,311.8h2.3l1.4,1.4v2.3l-1.4,1.4h-2.3l-1.4,-1.4v-2.3z"/><path d="M289.9,306.8h2.3l1.4,1.4v2.3l-1.4,1.4h-2.3l-1.4,-1.4v-2.3z"/><path d="M291.4,311.8h2.3l1.4,1.4v2.3l-1.4,1.4h-2.3l-1.4,-1.4v-2.3z"/><path d="M293.4,311.8h2.3l1.4,1.4v2.3l-1.4,1.4h-2.3l-1.4,-1.4v-2.3z"/><path d="M296.4,306.8h2.3l1.4,1.4v2.3l-1.4,1.4h-2.3l-1.4,-1.4v-2.3z"/><path d="M298.9,311.8h2.3l1.4,1.4v2.3l-1.4,1.4h-2.3l-1.4,-1.4v-2.3z"/><path d="M300.4,306.8h2.3l1.4,1.4v2.3l-1.4,1.4h-2.3l-1.4,-1.4v-2.3z"/><path d="M301.9,311.8h2.3l1.4,1.4v2.3l-1.4,1.4h-2.3l-1.4,-1.4v-2.3z"/><path d="M304.9,311.8h2.3l1.4,1.4v2.3l-1.4,1.4h-2.3l-1.4,-1.4v-2.3z"/><path d="M307.9,309.2h2.3l1.4,1.4v2.3l-1.4,1.4h-2.3l-1.4,-1.4v-2.3z"/><path d="M310.4,306.8h2.3l1.4,1.4v2.3l-1.4,1.4h-2.3l-1.4,-1.4v-2.3z"/><path d="M313.9,311.8h2.3l1.4,1.4v2.3l-1.4,1.4h-2.3l-1.4,-1.4v-2.3z"/><path d="M315.4,306.8h2.3l1.4,1.4v2.3l-1.4,1.4h-2.3l-1.4,-1.4v-2.3z"/><path d="M316.9,311.8h2.3l1.4,1.4v2.3l-1.4,1.4h-2.3l-1.4,-1.4v-2.3z"/><path d="M319.4,311.8h2.3l1.4,1.4v2.3l-1.4,1.4h-2.3l-1.4,-1.4v-2.3z"/><path d="M322.9,306.8h2.3l1.4,1.4v2.3l-1.4,1.4h-2.3l-1.4,-1.4v-2.3z"/><path d="M324.4,311.8h2.3l1.4,1.4v2.3l-1.4,1.4h-2.3l-1.4,-1.4v-2.3z"/><path d="M325.4,311.8h2.3l1.4,1.4v2.3l-1.4,1.4h-2.3l-1.4,-1.4v-2.3z"/><path d="M326.9,306.8h2.3l1.4,1.4v2.3l-1.4,1.4h-2.3l-1.4,-1.4v-2.3z"/><path d="M328.4,306.8h2.3l1.4,1.4v2.3l-1.4,1.4h-2.3l-1.4,-1.4v-2.3z"/><path d="M331.4,309.2h2.3l1.4,1.4v2.3l-1.4,1.4h-2.3l-1.4,-1.4v-2.3z"/><path d="M334.9,311.8h2.3l1.4,1.4v2.3l-1.4,1.4h-2.3l-1.4,-1.4v-2.3z"/><path d="M337.4,311.8h2.3l1.4,1.4v2.3l-1.4,1.4h-2.3l-1.4,-1.4v-2.3z"/><path d="M340.9,306.8h2.3l1.4,1.4v2.3l-1.4,1.4h-2.3l-1.4,-1.4v-2.3z"/><path d="M344.4,309.2h2.3l1.4,1.4v2.3l-1.4,1.4h-2.3l-1.4,-1.4v-2.3z"/><path d="M345.9,309.2h2.3l1.4,1.4v2.3l-1.4,1.4h-2.3l-1.4,-1.4v-2.3z"/><path d="M347.9,311.8h2.3l1.4,1.4v2.3l-1.4,1.4h-2.3l-1.4,-1.4v-2.3z"/><path d="M350.9,306.8h2.3l1.4,1.4v2.3l-1.4,1.4h-2.3l-1.4,-1.4v-2.3z"/><path d="M354.4,311.8h2.3l1.4,1.4v2.3l-1.4,1.4h-2.3l-1.4,-1.4v-2.3z"/><path d="M355.9,306.8h2.3l1.4,1.4v2.3l-1.4,1.4h-2.3l-1.4,-1.4v-2.3z"/><path d="M356.9,311.8h2.3l1.4,1.4v2.3l-1.4,1.4h-2.3l-1.4,-1.4v-2.3z"/><path d="M359.4,306.8h2.3l1.4,1.4v2.3l-1.4,1.4h-2.3l-1.4,-1.4v-2.3z"/><path d="M360.9,311.8h2.3l1.4,1.4v2.3l-1.4,1.4h-2.3l-1.4,-1.4v-2.3z"/><path d="M361.9,311.8h2.3l1.4,1.4v2.3l-1.4,1.4h-2.3l-1.4,-1.4v-2.3z"/><path d="M363.4,306.8h2.3l1.4,1.4v2.3l-1.4,1.4h-2.3l-1.4,-1.4v-2.3z"/><path d="M364.4,306.8h2.3l1.4,1.4v2.3l-1.4,1.4h-2.3l-1.4,-1.4v-2.3z"/><path d="M366.9,309.2h2.3l1.4,1.4v2.3l-1.4,1.4h-2.3l-1.4,-1.4v-2.3z"/><path d="M369.9,311.8h2.3l1.4,1.4v2.3l-1.4,1.4h-2.3l-1.4,-1.4v-2.3z"/><path d="M372.4,311.8h2.3l1.4,1.4v2.3l-1.4,1.4h-2.3l-1.4,-1.4v-2.3z"/><path d="M375.4,311.8h2.3l1.4,1.4v2.3l-1.4,1.4h-2.3l-1.4,-1.4v-2.3z"/><path d="M376.9,306.8h2.3l1.4,1.4v2.3l-1.4,1.4h-2.3l-1.4,-1.4v-2.3z"/><path d="M378.9,309.2h2.3l1.4,1.4v2.3l-1.4,1.4h-2.3l-1.4,-1.4v-2.3z"/><path d="M381.4,309.2h2.3l1.4,1.4v2.3l-1.4,1.4h-2.3l-1.4,-1.4v-2.3z"/><path d="M384.9,311.8h2.3l1.4,1.4v2.3l-1.4,1.4h-2.3l-1.4,-1.4v-2.3z"/><path d="M387.4,311.8h2.3l1.4,1.4v2.3l-1.4,1.4h-2.3l-1.4,-1.4v-2.3z"/><path d="M390.9,309.2h2.3l1.4,1.4v2.3l-1.4,1.4h-2.3l-1.4,-1.4v-2.3z"/><path d="M393.4,311.8h2.3l1.4,1.4v2.3l-1.4,1.4h-2.3l-1.4,-1.4v-2.3z"/><path d="M396.4,309.2h2.3l1.4,1.4v2.3l-1.4,1.4h-2.3l-1.4,-1.4v-2.3z"/><path d="M397.9,309.2h2.3l1.4,1.4v2.3l-1.4,1.4h-2.3l-1.4,-1.4v-2.3z"/><path d="M398.9,306.8h2.3l1.4,1.4v2.3l-1.4,1.4h-2.3l-1.4,-1.4v-2.3z"/><path d="M402.4,311.8h2.3l1.4,1.4v2.3l-1.4,1.4h-2.3l-1.4,-1.4v-2.3z"/><path d="M405.4,306.8h2.3l1.4,1.4v2.3l-1.4,1.4h-2.3l-1.4,-1.4v-2.3z"/><path d="M406.9,311.8h2.3l1.4,1.4v2.3l-1.4,1.4h-2.3l-1.4,-1.4v-2.3z"/><path d="M408.9,311.8h2.3l1.4,1.4v2.3l-1.4,1.4h-2.3l-1.4,-1.4v-2.3z"/><path d="M411.4,309.2h2.3l1.4,1.4v2.3l-1.4,1.4h-2.3l-1.4,-1.4v-2.3z"/><path d="M414.9,311.8h2.3l1.4,1.4v2.3l-1.4,1.4h-2.3l-1.4,-1.4v-2.3z"/><path d="M416.4,306.8h2.3l1.4,1.4v2.3l-1.4,1.4h-2.3l-1.4,-1.4v-2.3z"/><path d="M417.9,306.8h2.3l1.4,1.4v2.3l-1.4,1.4h-2.3l-1.4,-1.4v-2.3z"/><path d="M420.9,306.8h2.3l1.4,1.4v2.3l-1.4,1.4h-2.3l-1.4,-1.4v-2.3z"/><path d="M423.9,311.8h2.3l1.4,1.4v2.3l-1.4,1.4h-2.3l-1.4,-1.4v-2.3z"/><path d="M426.4,311.8h2.3l1.4,1.4v2.3l-1.4,1.4h-2.3l-1.4,-1.4v-2.3z"/><path d="M429.4,309.2h2.3l1.4,1.4v2.3l-1.4,1.4h-2.3l-1.4,-1.4v-2.3z"/><path d="M431.9,306.8h2.3l1.4,1.4v2.3l-1.4,1.4h-2.3l-1.4,-1.4v-2.3z"/><path d="M434.4,311.8h2.3l1.4,1.4v2.3l-1.4,1.4h-2.3l-1.4,-1.4v-2.3z"/><path d="M437.4,306.8h2.3l1.4,1.4v2.3l-1.4,1.4h-2.3l-1.4,-1.4v-2.3z"/><path d="M440.9,306.8h2.3l1.4,1.4v2.3l-1.4,1.4h-2.3l-1.4,-1.4v-2.3z"/><path d="M443.4,306.8h2.3l1.4,1.4v2.3l-1.4,1.4h-2.3l-1.4,-1.4v-2.3z"/><path d="M446.9,306.8h2.3l1.4,1.4v2.3l-1.4,1.4h-2.3l-1.4,-1.4v-2.3z"/><path d="M450.4,309.2h2.3l1.4,1.4v2.3l-1.4,1.4h-2.3l-1.4,-1.4v-2.3z"/><path d="M452.9,311.8h2.3l1.4,1.4v2.3l-1.4,1.4h-2.3l-1.4,-1.4v-2.3z"/><path d="M455.4,309.2h2.3l1.4,1.4v2.3l-1.4,1.4h-2.3l-1.4,-1.4v-2.3z"/><path d="M456.9,309.2h2.3l1.4,1.4v2.3l-1.4,1.4h-2.3l-1.4,-1.4v-2.3z"/><path d="M458.9,311.8h2.3l1.4,1.4v2.3l-1.4,1.4h-2.3l-1.4,-1.4v-2.3z"/><path d="M462.4,306.8h2.3l1.4,1.4v2.3l-1.4,1.4h-2.3l-1.4,-1.4v-2.3z"/><path d="M465.9,311.8h2.3l1.4,1.4v2.3l-1.4,1.4h-2.3l-1.4,-1.4v-2.3z"/><path d="M468.4,306.8h2.3l1.4,1.4v2.3l-1.4,1.4h-2.3l-1.4,-1.4v-2.3z"/><path d="M471.9,306.8h2.3l1.4,1.4v2.3l-1.4,1.4h-2.3l-1.4,-1.4v-2.3z"/><path d="M473.4,311.8h2.3l1.4,1.4v2.3l-1.4,1.4h-2.3l-1.4,-1.4v-2.3z"/><path d="M475.4,309.2h2.3l1.4,1.4v2.3l-1.4,1.4h-2.3l-1.4,-1.4v-2.3z"/><path d="M478.9,311.8h2.3l1.4,1.4v2.3l-1.4,1.4h-2.3l-1.4,-1.4v-2.3z"/><path d="M480.4,306.8h2.3l1.4,1.4v2.3l-1.4,1.4h-2.3l-1.4,-1.4v-2.3z"/><path d="M481.4,306.8h2.3l1.4,1.4v2.3l-1.4,1.4h-2.3l-1.4,-1.4v-2.3z"/><path d="M484.4,306.8h2.3l1.4,1.4v2.3l-1.4,1.4h-2.3l-1.4,-1.4v-2.3z"/><path d="M485.9,311.8h2.3l1.4,1.4v2.3l-1.4,1.4h-2.3l-1.4,-1.4v-2.3z"/><path d="M487.9,306.8h2.3l1.4,1.4v2.3l-1.4,1.4h-2.3l-1.4,-1.4v-2.3z"/><path d="M490.4,311.8h2.3l1.4,1.4v2.3l-1.4,1.4h-2.3l-1.4,-1.4v-2.3z"/><path d="M493.4,311.8h2.3l1.4,1.4v2.3l-1.4,1.4h-2.3l-1.4,-1.4v-2.3z"/><path d="M496.9,311.8h2.3l1.4,1.4v2.3l-1.4,1.4h-2.3l-1.4,-1.4v-2.3z"/><path d="M498.4,306.8h2.3l1.4,1.4v2.3l-1.4,1.4h-2.3l-1.4,-1.4v-2.3z"/><path d="M499.9,306.8h2.3l1.4,1.4v2.3l-1.4,1.4h-2.3l-1.4,-1.4v-2.3z"/><path d="M502.4,311.8h2.3l1.4,1.4v2.3l-1.4,1.4h-2.3l-1.4,-1.4v-2.3z"/><path d="M504.9,306.8h2.3l1.4,1.4v2.3l-1.4,1.4h-2.3l-1.4,-1.4v-2.3z"/><path d="M507.4,306.8h2.3l1.4,1.4v2.3l-1.4,1.4h-2.3l-1.4,-1.4v-2.3z"/><path d="M510.9,306.8h2.3l1.4,1.4v2.3l-1.4,1.4h-2.3l-1.4,-1.4v-2.3z"/><path d="M513.9,306.8h2.3l1.4,1.4v2.3l-1.4,1.4h-2.3l-1.4,-1.4v-2.3z"/><path d="M516.9,306.8h2.3l1.4,1.4v2.3l-1.4,1.4h-2.3l-1.4,-1.4v-2.3z"/><path d="M520.4,311.8h2.3l1.4,1.4v2.3l-1.4,1.4h-2.3l-1.4,-1.4v-2.3z"/><path d="M523.4,306.8h2.3l1.4,1.4v2.3l-1.4,1.4h-2.3l-1.4,-1.4v-2.3z"/><path d="M526.9,311.8h2.3l1.4,1.4v2.3l-1.4,1.4h-2.3l-1.4,-1.4v-2.3z"/><path d="M530.4,306.8h2.3l1.4,1.4v2.3l-1.4,1.4h-2.3l-1.4,-1.4v-2.3z"/><path d="M532.9,306.8h2.3l1.4,1.4v2.3l-1.4,1.4h-2.3l-1.4,-1.4v-2.3z"/><path d="M534.4,311.8h2.3l1.4,1.4v2.3l-1.4,1.4h-2.3l-1.4,-1.4v-2.3z"/><path d="M535.4,306.8h2.3l1.4,1.4v2.3l-1.4,1.4h-2.3l-1.4,-1.4v-2.3z"/><path d="M538.9,309.2h2.3l1.4,1.4v2.3l-1.4,1.4h-2.3l-1.4,-1.4v-2.3z"/><path d="M540.4,309.2h2.3l1.4,1.4v2.3l-1.4,1.4h-2.3l-1.4,-1.4v-2.3z"/><path d="M542.4,311.8h2.3l1.4,1.4v2.3l-1.4,1.4h-2.3l-1.4,-1.4v-2.3z"/><path d="M545.4,306.8h2.3l1.4,1.4v2.3l-1.4,1.4h-2.3l-1.4,-1.4v-2.3z"/><path d="M546.9,311.8h2.3l1.4,1.4v2.3l-1.4,1.4h-2.3l-1.4,-1.4v-2.3z"/><path d="M548.4,306.8h2.3l1.4,1.4v2.3l-1.4,1.4h-2.3l-1.4,-1.4v-2.3z"/><path d="M551.9,311.8h2.3l1.4,1.4v2.3l-1.4,1.4h-2.3l-1.4,-1.4v-2.3z"/><path d="M554.9,306.8h2.3l1.4,1.4v2.3l-1.4,1.4h-2.3l-1.4,-1.4v-2.3z"/><path d="M556.4,311.8h2.3l1.4,1.4v2.3l-1.4,1.4h-2.3l-1.4,-1.4v-2.3z"/><path d="M557.4,309.2h2.3l1.4,1.4v2.3l-1.4,1.4h-2.3l-1.4,-1.4v-2.3z"/><path d="M560.9,306.8h2.3l1.4,1.4v2.3l-1.4,1.4h-2.3l-1.4,-1.4v-2.3z"/><path d="M562.4,311.8h2.3l1.4,1.4v2.3l-1.4,1.4h-2.3l-1.4,-1.4v-2.3z"/><path d="M564.4,306.8h2.3l1.4,1.4v2.3l-1.4,1.4h-2.3l-1.4,-1.4v-2.3z"/><path d="M567.9,311.8h2.3l1.4,1.4v2.3l-1.4,1.4h-2.3l-1.4,-1.4v-2.3z"/><path d="M570.9,311.8h2.3l1.4,1.4v2.3l-1.4,1.4h-2.3l-1.4,-1.4v-2.3z"/><path d="M574.4,306.8h2.3l1.4,1.4v2.3l-1.4,1.4h-2.3l-1.4,-1.4v-2.3z"/><path d="M577.9,311.8h2.3l1.4,1.4v2.3l-1.4,1.4h-2.3l-1.4,-1.4v-2.3z"/><path d="M580.4,306.8h2.3l1.4,1.4v2.3l-1.4,1.4h-2.3l-1.4,-1.4v-2.3z"/><path d="M582.9,311.8h2.3l1.4,1.4v2.3l-1.4,1.4h-2.3l-1.4,-1.4v-2.3z"/><path d="M585.4,311.8h2.3l1.4,1.4v2.3l-1.4,1.4h-2.3l-1.4,-1.4v-2.3z"/><path d="M586.9,306.8h2.3l1.4,1.4v2.3l-1.4,1.4h-2.3l-1.4,-1.4v-2.3z"/><path d="M587.9,309.2h2.3l1.4,1.4v2.3l-1.4,1.4h-2.3l-1.4,-1.4v-2.3z"/><path d="M590.9,306.8h2.3l1.4,1.4v2.3l-1.4,1.4h-2.3l-1.4,-1.4v-2.3z"/><path d="M593.4,311.8h2.3l1.4,1.4v2.3l-1.4,1.4h-2.3l-1.4,-1.4v-2.3z"/><path d="M595.9,306.8h2.3l1.4,1.4v2.3l-1.4,1.4h-2.3l-1.4,-1.4v-2.3z"/><path d="M598.9,311.8h2.3l1.4,1.4v2.3l-1.4,1.4h-2.3l-1.4,-1.4v-2.3z"/><path d="M602.4,311.8h2.3l1.4,1.4v2.3l-1.4,1.4h-2.3l-1.4,-1.4v-2.3z"/><path d="M605.4,309.2h2.3l1.4,1.4v2.3l-1.4,1.4h-2.3l-1.4,-1.4v-2.3z"/><path d="M608.9,306.8h2.3l1.4,1.4v2.3l-1.4,1.4h-2.3l-1.4,-1.4v-2.3z"/><path d="M610.4,311.8h2.3l1.4,1.4v2.3l-1.4,1.4h-2.3l-1.4,-1.4v-2.3z"/><path d="M611.4,311.8h2.3l1.4,1.4v2.3l-1.4,1.4h-2.3l-1.4,-1.4v-2.3z"/><path d="M614.9,309.2h2.3l1.4,1.4v2.3l-1.4,1.4h-2.3l-1.4,-1.4v-2.3z"/><path d="M617.9,309.2h2.3l1.4,1.4v2.3l-1.4,1.4h-2.3l-1.4,-1.4v-2.3z"/><path d="M620.9,311.8h2.3l1.4,1.4v2.3l-1.4,1.4h-2.3l-1.4,-1.4v-2.3z"/><path d="M623.4,309.2h2.3l1.4,1.4v2.3l-1.4,1.4h-2.3l-1.4,-1.4v-2.3z"/><path d="M624.9,309.2h2.3l1.4,1.4v2.3l-1.4,1.4h-2.3l-1.4,-1.4v-2.3z"/><path d="M626.4,311.8h2.3l1.4,1.4v2.3l-1.4,1.4h-2.3l-1.4,-1.4v-2.3z"/><path d="M628.9,309.2h2.3l1.4,1.4v2.3l-1.4,1.4h-2.3l-1.4,-1.4v-2.3z"/><path d="M631.9,311.8h2.3l1.4,1.4v2.3l-1.4,1.4h-2.3l-1.4,-1.4v-2.3z"/><path d="M635.4,311.8h2.3l1.4,1.4v2.3l-1.4,1.4h-2.3l-1.4,-1.4v-2.3z"/><path d="M636.9,306.8h2.3l1.4,1.4v2.3l-1.4,1.4h-2.3l-1.4,-1.4v-2.3z"/><path d="M638.9,311.8h2.3l1.4,1.4v2.3l-1.4,1.4h-2.3l-1.4,-1.4v-2.3z"/><path d="M641.4,311.8h2.3l1.4,1.4v2.3l-1.4,1.4h-2.3l-1.4,-1.4v-2.3z"/><path d="M644.4,306.8h2.3l1.4,1.4v2.3l-1.4,1.4h-2.3l-1.4,-1.4v-2.3z"/><path d="M647.4,306.8h2.3l1.4,1.4v2.3l-1.4,1.4h-2.3l-1.4,-1.4v-2.3z"/><path d="M650.9,311.8h2.3l1.4,1.4v2.3l-1.4,1.4h-2.3l-1.4,-1.4v-2.3z"/><path d="M653.4,306.8h2.3l1.4,1.4v2.3l-1.4,1.4h-2.3l-1.4,-1.4v-2.3z"/><path d="M656.9,311.8h2.3l1.4,1.4v2.3l-1.4,1.4h-2.3l-1.4,-1.4v-2.3z"/><path d="M659.9,306.8h2.3l1.4,1.4v2.3l-1.4,1.4h-2.3l-1.4,-1.4v-2.3z"/><path d="M663.4,311.8h2.3l1.4,1.4v2.3l-1.4,1.4h-2.3l-1.4,-1.4v-2.3z"/><path d="M665.9,311.8h2.3l1.4,1.4v2.3l-1.4,1.4h-2.3l-1.4,-1.4v-2.3z"/><path d="M668.4,309.2h2.3l1.4,1.4v2.3l-1.4,1.4h-2.3l-1.4,-1.4v-2.3z"/><path d="M669.9,309.2h2.3l1.4,1.4v2.3l-1.4,1.4h-2.3l-1.4,-1.4v-2.3z"/><path d="M671.4,309.2h2.3l1.4,1.4v2.3l-1.4,1.4h-2.3l-1.4,-1.4v-2.3z"/><path d="M672.9,309.2h2.3l1.4,1.4v2.3l-1.4,1.4h-2.3l-1.4,-1.4v-2.3z"/><path d="M674.4,306.8h2.3l1.4,1.4v2.3l-1.4,1.4h-2.3l-1.4,-1.4v-2.3z"/><path d="M677.4,306.8h2.3l1.4,1.4v2.3l-1.4,1.4h-2.3l-1.4,-1.4v-2.3z"/><path d="M680.9,309.2h2.3l1.4,1.4v2.3l-1.4,1.4h-2.3l-1.4,-1.4v-2.3z"/><path d="M684.4,311.8h2.3l1.4,1.4v2.3l-1.4,1.4h-2.3l-1.4,-1.4v-2.3z"/><path d="M686.9,306.8h2.3l1.4,1.4v2.3l-1.4,1.4h-2.3l-1.4,-1.4v-2.3z"/><path d="M689.4,306.8h2.3l1.4,1.4v2.3l-1.4,1.4h-2.3l-1.4,-1.4v-2.3z"/><path d="M692.4,306.8h2.3l1.4,1.4v2.3l-1.4,1.4h-2.3l-1.4,-1.4v-2.3z"/><path d="M695.9,311.8h2.3l1.4,1.4v2.3l-1.4,1.4h-2.3l-1.4,-1.4v-2.3z"/><path d="M698.9,311.8h2.3l1.4,1.4v2.3l-1.4,1.4h-2.3l-1.4,-1.4v-2.3z"/><path d="M701.9,306.8h2.3l1.4,1.4v2.3l-1.4,1.4h-2.3l-1.4,-1.4v-2.3z"/><path d="M705.4,311.8h2.3l1.4,1.4v2.3l-1.4,1.4h-2.3l-1.4,-1.4v-2.3z"/><path d="M708.4,309.2h2.3l1.4,1.4v2.3l-1.4,1.4h-2.3l-1.4,-1.4v-2.3z"/><path d="M711.4,306.8h2.3l1.4,1.4v2.3l-1.4,1.4h-2.3l-1.4,-1.4v-2.3z"/><path d="M714.4,311.8h2.3l1.4,1.4v2.3l-1.4,1.4h-2.3l-1.4,-1.4v-2.3z"/><path d="M715.9,306.8h2.3l1.4,1.4v2.3l-1.4,1.4h-2.3l-1.4,-1.4v-2.3z"/><path d="M716.9,311.8h2.3l1.4,1.4v2.3l-1.4,1.4h-2.3l-1.4,-1.4v-2.3z"/><path d="M719.4,309.2h2.3l1.4,1.4v2.3l-1.4,1.4h-2.3l-1.4,-1.4v-2.3z"/><path d="M722.4,306.8h2.3l1.4,1.4v2.3l-1.4,1.4h-2.3l-1.4,-1.4v-2.3z"/><path d="M724.9,311.8h2.3l1.4,1.4v2.3l-1.4,1.4h-2.3l-1.4,-1.4v-2.3z"/><path d="M727.9,311.8h2.3l1.4,1.4v2.3l-1.4,1.4h-2.3l-1.4,-1.4v-2.3z"/><path d="M730.9,311.8h2.3l1.4,1.4v2.3l-1.4,1.4h-2.3l-1.4,-1.4v-2.3z"/><path d="M733.9,311.8h2.3l1.4,1.4v2.3l-1.4,1.4h-2.3l-1.4,-1.4v-2.3z"/><path d="M735.4,306.8h2.3l1.4,1.4v2.3l-1.4,1.4h-2.3l-1.4,-1.4v-2.3z"/><path d="M736.9,311.8h2.3l1.4,1.4v2.3l-1.4,1.4h-2.3l-1.4,-1.4v-2.3z"/><path d="M739.9,311.8h2.3l1.4,1.4v2.3l-1.4,1.4h-2.3l-1.4,-1.4v-2.3z"/><path d="M742.4,311.8h2.3l1.4,1.4v2.3l-1.4,1.4h-2.3l-1.4,-1.4v-2.3z"/><path d="M743.9,306.8h2.3l1.4,1.4v2.3l-1.4,1.4h-2.3l-1.4,-1.4v-2.3z"/><path d="M744.9,311.8h2.3l1.4,1.4v2.3l-1.4,1.4h-2.3l-1.4,-1.4v-2.3z"/><path d="M746.4,306.8h2.3l1.4,1.4v2.3l-1.4,1.4h-2.3l-1.4,-1.4v-2.3z"/><path d="M748.4,309.2h2.3l1.4,1.4v2.3l-1.4,1.4h-2.3l-1.4,-1.4v-2.3z"/><path d="M751.4,309.2h2.3l1.4,1.4v2.3l-1.4,1.4h-2.3l-1.4,-1.4v-2.3z"/><path d="M752.9,309.2h2.3l1.4,1.4v2.3l-1.4,1.4h-2.3l-1.4,-1.4v-2.3z"/><path d="M754.4,309.2h2.3l1.4,1.4v2.3l-1.4,1.4h-2.3l-1.4,-1.4v-2.3z"/><path d="M757.9,311.8h2.3l1.4,1.4v2.3l-1.4,1.4h-2.3l-1.4,-1.4v-2.3z"/><path d="M760.9,306.8h2.3l1.4,1.4v2.3l-1.4,1.4h-2.3l-1.4,-1.4v-2.3z"/><path d="M763.4,306.8h2.3l1.4,1.4v2.3l-1.4,1.4h-2.3l-1.4,-1.4v-2.3z"/><path d="M765.9,311.8h2.3l1.4,1.4v2.3l-1.4,1.4h-2.3l-1.4,-1.4v-2.3z"/><path d="M768.4,306.8h2.3l1.4,1.4v2.3l-1.4,1.4h-2.3l-1.4,-1.4v-2.3z"/><path d="M771.4,311.8h2.3l1.4,1.4v2.3l-1.4,1.4h-2.3l-1.4,-1.4v-2.3z"/><path d="M773.9,306.8h2.3l1.4,1.4v2.3l-1.4,1.4h-2.3l-1.4,-1.4v-2.3z"/><path d="M775.4,311.8h2.3l1.4,1.4v2.3l-1.4,1.4h-2.3l-1.4,-1.4v-2.3z"/><path d="M776.9,309.2h2.3l1.4,1.4v2.3l-1.4,1.4h-2.3l-1.4,-1.4v-2.3z"/><path d="M779.9,311.8h2.3l1.4,1.4v2.3l-1.4,1.4h-2.3l-1.4,-1.4v-2.3z"/><polyline points="160.0,351.6 163.0,354.8 168.0,355.8 185.0,355.8 190.0,354.0 195.0,354.8 198.0,348.0 205.0,351.8 211.0,346.7 215.0,349.0 219.0,344.5 225.0,349.0 230.0,351.6 240.0,352.5 688.0,352.7 690.0,349.5 697.0,348.5 700.0,352.0 720.0,351.8 779.0,351.8 781.0,349.5" fill="none" stroke="#000" stroke-width="3.8" stroke-linejoin="round"/><path d="M159.6,350.5h1.8l1.1,1.1v1.8l-1.1,1.1h-1.8l-1.1,-1.1v-1.8z"/><path d="M162.6,353.3h1.8l1.1,1.1v1.8l-1.1,1.1h-1.8l-1.1,-1.1v-1.8z"/><path d="M165.6,353.1h1.8l1.1,1.1v1.8l-1.1,1.1h-1.8l-1.1,-1.1v-1.8z"/><path d="M168.6,353.5h1.8l1.1,1.1v1.8l-1.1,1.1h-1.8l-1.1,-1.1v-1.8z"/><path d="M171.6,354.1h1.8l1.1,1.1v1.8l-1.1,1.1h-1.8l-1.1,-1.1v-1.8z"/><path d="M174.6,354.0h1.8l1.1,1.1v1.8l-1.1,1.1h-1.8l-1.1,-1.1v-1.8z"/><path d="M177.6,353.9h1.8l1.1,1.1v1.8l-1.1,1.1h-1.8l-1.1,-1.1v-1.8z"/><path d="M180.6,353.6h1.8l1.1,1.1v1.8l-1.1,1.1h-1.8l-1.1,-1.1v-1.8z"/><path d="M183.6,353.9h1.8l1.1,1.1v1.8l-1.1,1.1h-1.8l-1.1,-1.1v-1.8z"/><path d="M186.6,353.0h1.8l1.1,1.1v1.8l-1.1,1.1h-1.8l-1.1,-1.1v-1.8z"/><path d="M189.6,352.1h1.8l1.1,1.1v1.8l-1.1,1.1h-1.8l-1.1,-1.1v-1.8z"/><path d="M192.6,352.3h1.8l1.1,1.1v1.8l-1.1,1.1h-1.8l-1.1,-1.1v-1.8z"/><path d="M195.6,349.3h1.8l1.1,1.1v1.8l-1.1,1.1h-1.8l-1.1,-1.1v-1.8z"/><path d="M198.6,346.7h1.8l1.1,1.1v1.8l-1.1,1.1h-1.8l-1.1,-1.1v-1.8z"/><path d="M201.6,348.6h1.8l1.1,1.1v1.8l-1.1,1.1h-1.8l-1.1,-1.1v-1.8z"/><path d="M204.6,349.8h1.8l1.1,1.1v1.8l-1.1,1.1h-1.8l-1.1,-1.1v-1.8z"/><path d="M207.6,347.2h1.8l1.1,1.1v1.8l-1.1,1.1h-1.8l-1.1,-1.1v-1.8z"/><path d="M210.6,345.0h1.8l1.1,1.1v1.8l-1.1,1.1h-1.8l-1.1,-1.1v-1.8z"/><path d="M213.6,346.7h1.8l1.1,1.1v1.8l-1.1,1.1h-1.8l-1.1,-1.1v-1.8z"/><path d="M216.6,344.0h1.8l1.1,1.1v1.8l-1.1,1.1h-1.8l-1.1,-1.1v-1.8z"/><path d="M219.6,343.3h1.8l1.1,1.1v1.8l-1.1,1.1h-1.8l-1.1,-1.1v-1.8z"/><path d="M222.6,345.5h1.8l1.1,1.1v1.8l-1.1,1.1h-1.8l-1.1,-1.1v-1.8z"/><path d="M225.6,347.8h1.8l1.1,1.1v1.8l-1.1,1.1h-1.8l-1.1,-1.1v-1.8z"/><path d="M228.6,349.2h1.8l1.1,1.1v1.8l-1.1,1.1h-1.8l-1.1,-1.1v-1.8z"/><path d="M231.6,349.7h1.8l1.1,1.1v1.8l-1.1,1.1h-1.8l-1.1,-1.1v-1.8z"/><path d="M234.6,350.4h1.8l1.1,1.1v1.8l-1.1,1.1h-1.8l-1.1,-1.1v-1.8z"/><path d="M237.6,350.4h1.8l1.1,1.1v1.8l-1.1,1.1h-1.8l-1.1,-1.1v-1.8z"/><path d="M240.6,350.5h1.8l1.1,1.1v1.8l-1.1,1.1h-1.8l-1.1,-1.1v-1.8z"/><path d="M243.6,350.3h1.8l1.1,1.1v1.8l-1.1,1.1h-1.8l-1.1,-1.1v-1.8z"/><path d="M246.6,350.1h1.8l1.1,1.1v1.8l-1.1,1.1h-1.8l-1.1,-1.1v-1.8z"/><path d="M249.6,350.4h1.8l1.1,1.1v1.8l-1.1,1.1h-1.8l-1.1,-1.1v-1.8z"/><path d="M252.6,350.2h1.8l1.1,1.1v1.8l-1.1,1.1h-1.8l-1.1,-1.1v-1.8z"/><path d="M255.6,350.5h1.8l1.1,1.1v1.8l-1.1,1.1h-1.8l-1.1,-1.1v-1.8z"/><path d="M258.6,350.9h1.8l1.1,1.1v1.8l-1.1,1.1h-1.8l-1.1,-1.1v-1.8z"/><path d="M261.6,350.6h1.8l1.1,1.1v1.8l-1.1,1.1h-1.8l-1.1,-1.1v-1.8z"/><path d="M264.6,350.3h1.8l1.1,1.1v1.8l-1.1,1.1h-1.8l-1.1,-1.1v-1.8z"/><path d="M267.6,350.8h1.8l1.1,1.1v1.8l-1.1,1.1h-1.8l-1.1,-1.1v-1.8z"/><path d="M270.6,350.8h1.8l1.1,1.1v1.8l-1.1,1.1h-1.8l-1.1,-1.1v-1.8z"/><path d="M273.6,350.7h1.8l1.1,1.1v1.8l-1.1,1.1h-1.8l-1.1,-1.1v-1.8z"/><path d="M276.6,350.8h1.8l1.1,1.1v1.8l-1.1,1.1h-1.8l-1.1,-1.1v-1.8z"/><path d="M279.6,350.7h1.8l1.1,1.1v1.8l-1.1,1.1h-1.8l-1.1,-1.1v-1.8z"/><path d="M282.6,350.8h1.8l1.1,1.1v1.8l-1.1,1.1h-1.8l-1.1,-1.1v-1.8z"/><path d="M285.6,350.4h1.8l1.1,1.1v1.8l-1.1,1.1h-1.8l-1.1,-1.1v-1.8z"/><path d="M288.6,350.9h1.8l1.1,1.1v1.8l-1.1,1.1h-1.8l-1.1,-1.1v-1.8z"/><path d="M291.6,350.9h1.8l1.1,1.1v1.8l-1.1,1.1h-1.8l-1.1,-1.1v-1.8z"/><path d="M294.6,350.3h1.8l1.1,1.1v1.8l-1.1,1.1h-1.8l-1.1,-1.1v-1.8z"/><path d="M297.6,350.7h1.8l1.1,1.1v1.8l-1.1,1.1h-1.8l-1.1,-1.1v-1.8z"/><path d="M300.6,350.7h1.8l1.1,1.1v1.8l-1.1,1.1h-1.8l-1.1,-1.1v-1.8z"/><path d="M303.6,350.5h1.8l1.1,1.1v1.8l-1.1,1.1h-1.8l-1.1,-1.1v-1.8z"/><path d="M306.6,350.6h1.8l1.1,1.1v1.8l-1.1,1.1h-1.8l-1.1,-1.1v-1.8z"/><path d="M309.6,350.5h1.8l1.1,1.1v1.8l-1.1,1.1h-1.8l-1.1,-1.1v-1.8z"/><path d="M312.6,350.9h1.8l1.1,1.1v1.8l-1.1,1.1h-1.8l-1.1,-1.1v-1.8z"/><path d="M315.6,350.5h1.8l1.1,1.1v1.8l-1.1,1.1h-1.8l-1.1,-1.1v-1.8z"/><path d="M318.6,350.8h1.8l1.1,1.1v1.8l-1.1,1.1h-1.8l-1.1,-1.1v-1.8z"/><path d="M321.6,350.4h1.8l1.1,1.1v1.8l-1.1,1.1h-1.8l-1.1,-1.1v-1.8z"/><path d="M324.6,350.8h1.8l1.1,1.1v1.8l-1.1,1.1h-1.8l-1.1,-1.1v-1.8z"/><path d="M327.6,350.9h1.8l1.1,1.1v1.8l-1.1,1.1h-1.8l-1.1,-1.1v-1.8z"/><path d="M330.6,350.5h1.8l1.1,1.1v1.8l-1.1,1.1h-1.8l-1.1,-1.1v-1.8z"/><path d="M333.6,350.6h1.8l1.1,1.1v1.8l-1.1,1.1h-1.8l-1.1,-1.1v-1.8z"/><path d="M336.6,350.9h1.8l1.1,1.1v1.8l-1.1,1.1h-1.8l-1.1,-1.1v-1.8z"/><path d="M339.6,350.7h1.8l1.1,1.1v1.8l-1.1,1.1h-1.8l-1.1,-1.1v-1.8z"/><path d="M342.6,350.5h1.8l1.1,1.1v1.8l-1.1,1.1h-1.8l-1.1,-1.1v-1.8z"/><path d="M345.6,350.3h1.8l1.1,1.1v1.8l-1.1,1.1h-1.8l-1.1,-1.1v-1.8z"/><path d="M348.6,350.4h1.8l1.1,1.1v1.8l-1.1,1.1h-1.8l-1.1,-1.1v-1.8z"/><path d="M351.6,350.7h1.8l1.1,1.1v1.8l-1.1,1.1h-1.8l-1.1,-1.1v-1.8z"/><path d="M354.6,350.3h1.8l1.1,1.1v1.8l-1.1,1.1h-1.8l-1.1,-1.1v-1.8z"/><path d="M357.6,350.9h1.8l1.1,1.1v1.8l-1.1,1.1h-1.8l-1.1,-1.1v-1.8z"/><path d="M360.6,350.4h1.8l1.1,1.1v1.8l-1.1,1.1h-1.8l-1.1,-1.1v-1.8z"/><path d="M363.6,350.9h1.8l1.1,1.1v1.8l-1.1,1.1h-1.8l-1.1,-1.1v-1.8z"/><path d="M366.6,350.4h1.8l1.1,1.1v1.8l-1.1,1.1h-1.8l-1.1,-1.1v-1.8z"/><path d="M369.6,350.9h1.8l1.1,1.1v1.8l-1.1,1.1h-1.8l-1.1,-1.1v-1.8z"/><path d="M372.6,350.7h1.8l1.1,1.1v1.8l-1.1,1.1h-1.8l-1.1,-1.1v-1.8z"/><path d="M375.6,350.6h1.8l1.1,1.1v1.8l-1.1,1.1h-1.8l-1.1,-1.1v-1.8z"/><path d="M378.6,350.6h1.8l1.1,1.1v1.8l-1.1,1.1h-1.8l-1.1,-1.1v-1.8z"/><path d="M381.6,350.7h1.8l1.1,1.1v1.8l-1.1,1.1h-1.8l-1.1,-1.1v-1.8z"/><path d="M384.6,350.6h1.8l1.1,1.1v1.8l-1.1,1.1h-1.8l-1.1,-1.1v-1.8z"/><path d="M387.6,350.4h1.8l1.1,1.1v1.8l-1.1,1.1h-1.8l-1.1,-1.1v-1.8z"/><path d="M390.6,350.3h1.8l1.1,1.1v1.8l-1.1,1.1h-1.8l-1.1,-1.1v-1.8z"/><path d="M393.6,350.6h1.8l1.1,1.1v1.8l-1.1,1.1h-1.8l-1.1,-1.1v-1.8z"/><path d="M396.6,350.9h1.8l1.1,1.1v1.8l-1.1,1.1h-1.8l-1.1,-1.1v-1.8z"/><path d="M399.6,350.7h1.8l1.1,1.1v1.8l-1.1,1.1h-1.8l-1.1,-1.1v-1.8z"/><path d="M402.6,350.2h1.8l1.1,1.1v1.8l-1.1,1.1h-1.8l-1.1,-1.1v-1.8z"/><path d="M405.6,350.8h1.8l1.1,1.1v1.8l-1.1,1.1h-1.8l-1.1,-1.1v-1.8z"/><path d="M408.6,350.8h1.8l1.1,1.1v1.8l-1.1,1.1h-1.8l-1.1,-1.1v-1.8z"/><path d="M411.6,350.9h1.8l1.1,1.1v1.8l-1.1,1.1h-1.8l-1.1,-1.1v-1.8z"/><path d="M414.6,350.3h1.8l1.1,1.1v1.8l-1.1,1.1h-1.8l-1.1,-1.1v-1.8z"/><path d="M417.6,350.8h1.8l1.1,1.1v1.8l-1.1,1.1h-1.8l-1.1,-1.1v-1.8z"/><path d="M420.6,350.2h1.8l1.1,1.1v1.8l-1.1,1.1h-1.8l-1.1,-1.1v-1.8z"/><path d="M423.6,350.7h1.8l1.1,1.1v1.8l-1.1,1.1h-1.8l-1.1,-1.1v-1.8z"/><path d="M426.6,350.4h1.8l1.1,1.1v1.8l-1.1,1.1h-1.8l-1.1,-1.1v-1.8z"/><path d="M429.6,350.4h1.8l1.1,1.1v1.8l-1.1,1.1h-1.8l-1.1,-1.1v-1.8z"/><path d="M432.6,350.9h1.8l1.1,1.1v1.8l-1.1,1.1h-1.8l-1.1,-1.1v-1.8z"/><path d="M435.6,350.3h1.8l1.1,1.1v1.8l-1.1,1.1h-1.8l-1.1,-1.1v-1.8z"/><path d="M438.6,350.6h1.8l1.1,1.1v1.8l-1.1,1.1h-1.8l-1.1,-1.1v-1.8z"/><path d="M441.6,350.9h1.8l1.1,1.1v1.8l-1.1,1.1h-1.8l-1.1,-1.1v-1.8z"/><path d="M444.6,350.4h1.8l1.1,1.1v1.8l-1.1,1.1h-1.8l-1.1,-1.1v-1.8z"/><path d="M447.6,350.4h1.8l1.1,1.1v1.8l-1.1,1.1h-1.8l-1.1,-1.1v-1.8z"/><path d="M450.6,350.9h1.8l1.1,1.1v1.8l-1.1,1.1h-1.8l-1.1,-1.1v-1.8z"/><path d="M453.6,350.5h1.8l1.1,1.1v1.8l-1.1,1.1h-1.8l-1.1,-1.1v-1.8z"/><path d="M456.6,350.8h1.8l1.1,1.1v1.8l-1.1,1.1h-1.8l-1.1,-1.1v-1.8z"/><path d="M459.6,350.2h1.8l1.1,1.1v1.8l-1.1,1.1h-1.8l-1.1,-1.1v-1.8z"/><path d="M462.6,350.5h1.8l1.1,1.1v1.8l-1.1,1.1h-1.8l-1.1,-1.1v-1.8z"/><path d="M465.6,350.3h1.8l1.1,1.1v1.8l-1.1,1.1h-1.8l-1.1,-1.1v-1.8z"/><path d="M468.6,350.7h1.8l1.1,1.1v1.8l-1.1,1.1h-1.8l-1.1,-1.1v-1.8z"/><path d="M471.6,350.3h1.8l1.1,1.1v1.8l-1.1,1.1h-1.8l-1.1,-1.1v-1.8z"/><path d="M474.6,351.0h1.8l1.1,1.1v1.8l-1.1,1.1h-1.8l-1.1,-1.1v-1.8z"/><path d="M477.6,350.2h1.8l1.1,1.1v1.8l-1.1,1.1h-1.8l-1.1,-1.1v-1.8z"/><path d="M480.6,350.8h1.8l1.1,1.1v1.8l-1.1,1.1h-1.8l-1.1,-1.1v-1.8z"/><path d="M483.6,350.2h1.8l1.1,1.1v1.8l-1.1,1.1h-1.8l-1.1,-1.1v-1.8z"/><path d="M486.6,350.4h1.8l1.1,1.1v1.8l-1.1,1.1h-1.8l-1.1,-1.1v-1.8z"/><path d="M489.6,350.9h1.8l1.1,1.1v1.8l-1.1,1.1h-1.8l-1.1,-1.1v-1.8z"/><path d="M492.6,350.3h1.8l1.1,1.1v1.8l-1.1,1.1h-1.8l-1.1,-1.1v-1.8z"/><path d="M495.6,350.4h1.8l1.1,1.1v1.8l-1.1,1.1h-1.8l-1.1,-1.1v-1.8z"/><path d="M498.6,350.8h1.8l1.1,1.1v1.8l-1.1,1.1h-1.8l-1.1,-1.1v-1.8z"/><path d="M501.6,350.5h1.8l1.1,1.1v1.8l-1.1,1.1h-1.8l-1.1,-1.1v-1.8z"/><path d="M504.6,350.3h1.8l1.1,1.1v1.8l-1.1,1.1h-1.8l-1.1,-1.1v-1.8z"/><path d="M507.6,351.0h1.8l1.1,1.1v1.8l-1.1,1.1h-1.8l-1.1,-1.1v-1.8z"/><path d="M510.6,350.3h1.8l1.1,1.1v1.8l-1.1,1.1h-1.8l-1.1,-1.1v-1.8z"/><path d="M513.6,350.3h1.8l1.1,1.1v1.8l-1.1,1.1h-1.8l-1.1,-1.1v-1.8z"/><path d="M516.6,350.5h1.8l1.1,1.1v1.8l-1.1,1.1h-1.8l-1.1,-1.1v-1.8z"/><path d="M519.6,350.7h1.8l1.1,1.1v1.8l-1.1,1.1h-1.8l-1.1,-1.1v-1.8z"/><path d="M522.6,350.8h1.8l1.1,1.1v1.8l-1.1,1.1h-1.8l-1.1,-1.1v-1.8z"/><path d="M525.6,350.3h1.8l1.1,1.1v1.8l-1.1,1.1h-1.8l-1.1,-1.1v-1.8z"/><path d="M528.6,350.5h1.8l1.1,1.1v1.8l-1.1,1.1h-1.8l-1.1,-1.1v-1.8z"/><path d="M531.6,350.3h1.8l1.1,1.1v1.8l-1.1,1.1h-1.8l-1.1,-1.1v-1.8z"/><path d="M534.6,350.6h1.8l1.1,1.1v1.8l-1.1,1.1h-1.8l-1.1,-1.1v-1.8z"/><path d="M537.6,350.8h1.8l1.1,1.1v1.8l-1.1,1.1h-1.8l-1.1,-1.1v-1.8z"/><path d="M540.6,350.8h1.8l1.1,1.1v1.8l-1.1,1.1h-1.8l-1.1,-1.1v-1.8z"/><path d="M543.6,351.0h1.8l1.1,1.1v1.8l-1.1,1.1h-1.8l-1.1,-1.1v-1.8z"/><path d="M546.6,350.8h1.8l1.1,1.1v1.8l-1.1,1.1h-1.8l-1.1,-1.1v-1.8z"/><path d="M549.6,350.9h1.8l1.1,1.1v1.8l-1.1,1.1h-1.8l-1.1,-1.1v-1.8z"/><path d="M552.6,350.8h1.8l1.1,1.1v1.8l-1.1,1.1h-1.8l-1.1,-1.1v-1.8z"/><path d="M555.6,350.6h1.8l1.1,1.1v1.8l-1.1,1.1h-1.8l-1.1,-1.1v-1.8z"/><path d="M558.6,350.4h1.8l1.1,1.1v1.8l-1.1,1.1h-1.8l-1.1,-1.1v-1.8z"/><path d="M561.6,350.8h1.8l1.1,1.1v1.8l-1.1,1.1h-1.8l-1.1,-1.1v-1.8z"/><path d="M564.6,350.5h1.8l1.1,1.1v1.8l-1.1,1.1h-1.8l-1.1,-1.1v-1.8z"/><path d="M567.6,350.3h1.8l1.1,1.1v1.8l-1.1,1.1h-1.8l-1.1,-1.1v-1.8z"/><path d="M570.6,350.6h1.8l1.1,1.1v1.8l-1.1,1.1h-1.8l-1.1,-1.1v-1.8z"/><path d="M573.6,350.9h1.8l1.1,1.1v1.8l-1.1,1.1h-1.8l-1.1,-1.1v-1.8z"/><path d="M576.6,350.4h1.8l1.1,1.1v1.8l-1.1,1.1h-1.8l-1.1,-1.1v-1.8z"/><path d="M579.6,350.7h1.8l1.1,1.1v1.8l-1.1,1.1h-1.8l-1.1,-1.1v-1.8z"/><path d="M582.6,350.6h1.8l1.1,1.1v1.8l-1.1,1.1h-1.8l-1.1,-1.1v-1.8z"/><path d="M585.6,350.7h1.8l1.1,1.1v1.8l-1.1,1.1h-1.8l-1.1,-1.1v-1.8z"/><path d="M588.6,350.4h1.8l1.1,1.1v1.8l-1.1,1.1h-1.8l-1.1,-1.1v-1.8z"/><path d="M591.6,351.0h1.8l1.1,1.1v1.8l-1.1,1.1h-1.8l-1.1,-1.1v-1.8z"/><path d="M594.6,350.5h1.8l1.1,1.1v1.8l-1.1,1.1h-1.8l-1.1,-1.1v-1.8z"/><path d="M597.6,350.7h1.8l1.1,1.1v1.8l-1.1,1.1h-1.8l-1.1,-1.1v-1.8z"/><path d="M600.6,350.6h1.8l1.1,1.1v1.8l-1.1,1.1h-1.8l-1.1,-1.1v-1.8z"/><path d="M603.6,350.3h1.8l1.1,1.1v1.8l-1.1,1.1h-1.8l-1.1,-1.1v-1.8z"/><path d="M606.6,350.7h1.8l1.1,1.1v1.8l-1.1,1.1h-1.8l-1.1,-1.1v-1.8z"/><path d="M609.6,350.4h1.8l1.1,1.1v1.8l-1.1,1.1h-1.8l-1.1,-1.1v-1.8z"/><path d="M612.6,350.3h1.8l1.1,1.1v1.8l-1.1,1.1h-1.8l-1.1,-1.1v-1.8z"/><path d="M615.6,350.3h1.8l1.1,1.1v1.8l-1.1,1.1h-1.8l-1.1,-1.1v-1.8z"/><path d="M618.6,350.4h1.8l1.1,1.1v1.8l-1.1,1.1h-1.8l-1.1,-1.1v-1.8z"/><path d="M621.6,350.3h1.8l1.1,1.1v1.8l-1.1,1.1h-1.8l-1.1,-1.1v-1.8z"/><path d="M624.6,350.8h1.8l1.1,1.1v1.8l-1.1,1.1h-1.8l-1.1,-1.1v-1.8z"/><path d="M627.6,350.7h1.8l1.1,1.1v1.8l-1.1,1.1h-1.8l-1.1,-1.1v-1.8z"/><path d="M630.6,351.1h1.8l1.1,1.1v1.8l-1.1,1.1h-1.8l-1.1,-1.1v-1.8z"/><path d="M633.6,351.0h1.8l1.1,1.1v1.8l-1.1,1.1h-1.8l-1.1,-1.1v-1.8z"/><path d="M636.6,351.1h1.8l1.1,1.1v1.8l-1.1,1.1h-1.8l-1.1,-1.1v-1.8z"/><path d="M639.6,350.5h1.8l1.1,1.1v1.8l-1.1,1.1h-1.8l-1.1,-1.1v-1.8z"/><path d="M642.6,350.6h1.8l1.1,1.1v1.8l-1.1,1.1h-1.8l-1.1,-1.1v-1.8z"/><path d="M645.6,350.5h1.8l1.1,1.1v1.8l-1.1,1.1h-1.8l-1.1,-1.1v-1.8z"/><path d="M648.6,350.8h1.8l1.1,1.1v1.8l-1.1,1.1h-1.8l-1.1,-1.1v-1.8z"/><path d="M651.6,350.8h1.8l1.1,1.1v1.8l-1.1,1.1h-1.8l-1.1,-1.1v-1.8z"/><path d="M654.6,350.9h1.8l1.1,1.1v1.8l-1.1,1.1h-1.8l-1.1,-1.1v-1.8z"/><path d="M657.6,350.9h1.8l1.1,1.1v1.8l-1.1,1.1h-1.8l-1.1,-1.1v-1.8z"/><path d="M660.6,350.5h1.8l1.1,1.1v1.8l-1.1,1.1h-1.8l-1.1,-1.1v-1.8z"/><path d="M663.6,350.6h1.8l1.1,1.1v1.8l-1.1,1.1h-1.8l-1.1,-1.1v-1.8z"/><path d="M666.6,350.7h1.8l1.1,1.1v1.8l-1.1,1.1h-1.8l-1.1,-1.1v-1.8z"/><path d="M669.6,350.3h1.8l1.1,1.1v1.8l-1.1,1.1h-1.8l-1.1,-1.1v-1.8z"/><path d="M672.6,350.3h1.8l1.1,1.1v1.8l-1.1,1.1h-1.8l-1.1,-1.1v-1.8z"/><path d="M675.6,350.6h1.8l1.1,1.1v1.8l-1.1,1.1h-1.8l-1.1,-1.1v-1.8z"/><path d="M678.6,350.4h1.8l1.1,1.1v1.8l-1.1,1.1h-1.8l-1.1,-1.1v-1.8z"/><path d="M681.6,350.9h1.8l1.1,1.1v1.8l-1.1,1.1h-1.8l-1.1,-1.1v-1.8z"/><path d="M684.6,350.5h1.8l1.1,1.1v1.8l-1.1,1.1h-1.8l-1.1,-1.1v-1.8z"/><path d="M687.6,349.6h1.8l1.1,1.1v1.8l-1.1,1.1h-1.8l-1.1,-1.1v-1.8z"/><path d="M690.6,347.0h1.8l1.1,1.1v1.8l-1.1,1.1h-1.8l-1.1,-1.1v-1.8z"/><path d="M693.6,346.6h1.8l1.1,1.1v1.8l-1.1,1.1h-1.8l-1.1,-1.1v-1.8z"/><path d="M696.6,346.9h1.8l1.1,1.1v1.8l-1.1,1.1h-1.8l-1.1,-1.1v-1.8z"/><path d="M699.6,350.0h1.8l1.1,1.1v1.8l-1.1,1.1h-1.8l-1.1,-1.1v-1.8z"/><path d="M702.6,349.9h1.8l1.1,1.1v1.8l-1.1,1.1h-1.8l-1.1,-1.1v-1.8z"/><path d="M705.6,349.8h1.8l1.1,1.1v1.8l-1.1,1.1h-1.8l-1.1,-1.1v-1.8z"/><path d="M708.6,350.0h1.8l1.1,1.1v1.8l-1.1,1.1h-1.8l-1.1,-1.1v-1.8z"/><path d="M711.6,349.6h1.8l1.1,1.1v1.8l-1.1,1.1h-1.8l-1.1,-1.1v-1.8z"/><path d="M714.6,350.2h1.8l1.1,1.1v1.8l-1.1,1.1h-1.8l-1.1,-1.1v-1.8z"/><path d="M717.6,350.2h1.8l1.1,1.1v1.8l-1.1,1.1h-1.8l-1.1,-1.1v-1.8z"/><path d="M720.6,350.0h1.8l1.1,1.1v1.8l-1.1,1.1h-1.8l-1.1,-1.1v-1.8z"/><path d="M723.6,349.7h1.8l1.1,1.1v1.8l-1.1,1.1h-1.8l-1.1,-1.1v-1.8z"/><path d="M726.6,349.8h1.8l1.1,1.1v1.8l-1.1,1.1h-1.8l-1.1,-1.1v-1.8z"/><path d="M729.6,349.9h1.8l1.1,1.1v1.8l-1.1,1.1h-1.8l-1.1,-1.1v-1.8z"/><path d="M732.6,349.4h1.8l1.1,1.1v1.8l-1.1,1.1h-1.8l-1.1,-1.1v-1.8z"/><path d="M735.6,349.7h1.8l1.1,1.1v1.8l-1.1,1.1h-1.8l-1.1,-1.1v-1.8z"/><path d="M738.6,349.8h1.8l1.1,1.1v1.8l-1.1,1.1h-1.8l-1.1,-1.1v-1.8z"/><path d="M741.6,349.5h1.8l1.1,1.1v1.8l-1.1,1.1h-1.8l-1.1,-1.1v-1.8z"/><path d="M744.6,349.5h1.8l1.1,1.1v1.8l-1.1,1.1h-1.8l-1.1,-1.1v-1.8z"/><path d="M747.6,350.0h1.8l1.1,1.1v1.8l-1.1,1.1h-1.8l-1.1,-1.1v-1.8z"/><path d="M750.6,349.7h1.8l1.1,1.1v1.8l-1.1,1.1h-1.8l-1.1,-1.1v-1.8z"/><path d="M753.6,349.8h1.8l1.1,1.1v1.8l-1.1,1.1h-1.8l-1.1,-1.1v-1.8z"/><path d="M756.6,350.1h1.8l1.1,1.1v1.8l-1.1,1.1h-1.8l-1.1,-1.1v-1.8z"/><path d="M759.6,349.9h1.8l1.1,1.1v1.8l-1.1,1.1h-1.8l-1.1,-1.1v-1.8z"/><path d="M762.6,349.6h1.8l1.1,1.1v1.8l-1.1,1.1h-1.8l-1.1,-1.1v-1.8z"/><path d="M765.6,350.2h1.8l1.1,1.1v1.8l-1.1,1.1h-1.8l-1.1,-1.1v-1.8z"/><path d="M768.6,349.7h1.8l1.1,1.1v1.8l-1.1,1.1h-1.8l-1.1,-1.1v-1.8z"/><path d="M771.6,349.4h1.8l1.1,1.1v1.8l-1.1,1.1h-1.8l-1.1,-1.1v-1.8z"/><path d="M774.6,349.9h1.8l1.1,1.1v1.8l-1.1,1.1h-1.8l-1.1,-1.1v-1.8z"/><path d="M777.6,349.5h1.8l1.1,1.1v1.8l-1.1,1.1h-1.8l-1.1,-1.1v-1.8z"/><path d="M196.9,345.1h2.2l1.3,1.3v2.2l-1.3,1.3h-2.2l-1.3,-1.3v-2.2z"/><path d="M209.9,344.1h2.2l1.3,1.3v2.2l-1.3,1.3h-2.2l-1.3,-1.3v-2.2z"/><path d="M217.9,342.1h2.2l1.3,1.3v2.2l-1.3,1.3h-2.2l-1.3,-1.3v-2.2z"/><path d="M262.9,346.1h2.2l1.3,1.3v2.2l-1.3,1.3h-2.2l-1.3,-1.3v-2.2z"/><path d="M695.9,345.1h2.2l1.3,1.3v2.2l-1.3,1.3h-2.2l-1.3,-1.3v-2.2z"/><path d="M482.2,348.8h1.6l1.0,1.0v1.6l-1.0,1.0h-1.6l-1.0,-1.0v-1.6z"/><path d="M496.2,348.8h1.6l1.0,1.0v1.6l-1.0,1.0h-1.6l-1.0,-1.0v-1.6z"/><path d="M510.2,348.8h1.6l1.0,1.0v1.6l-1.0,1.0h-1.6l-1.0,-1.0v-1.6z"/><path d="M547.2,348.8h1.6l1.0,1.0v1.6l-1.0,1.0h-1.6l-1.0,-1.0v-1.6z"/><path d="M557.2,348.8h1.6l1.0,1.0v1.6l-1.0,1.0h-1.6l-1.0,-1.0v-1.6z"/><path d="M600.2,348.9h1.6l1.0,1.0v1.6l-1.0,1.0h-1.6l-1.0,-1.0v-1.6z"/><path d="M627.2,348.9h1.6l1.0,1.0v1.6l-1.0,1.0h-1.6l-1.0,-1.0v-1.6z"/><path d="M757.2,348.0h1.6l1.0,1.0v1.6l-1.0,1.0h-1.6l-1.0,-1.0v-1.6z"/><path d="M769.2,348.0h1.6l1.0,1.0v1.6l-1.0,1.0h-1.6l-1.0,-1.0v-1.6z"/><polyline points="160.0,393.7 164.0,395.4 168.0,396.7 195.0,396.7 197.0,388.6 205.0,393.0 212.0,387.5 220.0,385.2 225.0,388.6 230.0,393.0 240.0,393.7 689.0,393.8 695.0,393.0 781.0,393.3" fill="none" stroke="#000" stroke-width="3.8" stroke-linejoin="round"/><path d="M159.6,391.7h1.8l1.1,1.1v1.8l-1.1,1.1h-1.8l-1.1,-1.1v-1.8z"/><path d="M162.6,393.2h1.8l1.1,1.1v1.8l-1.1,1.1h-1.8l-1.1,-1.1v-1.8z"/><path d="M165.6,394.1h1.8l1.1,1.1v1.8l-1.1,1.1h-1.8l-1.1,-1.1v-1.8z"/><path d="M168.6,394.8h1.8l1.1,1.1v1.8l-1.1,1.1h-1.8l-1.1,-1.1v-1.8z"/><path d="M171.6,394.8h1.8l1.1,1.1v1.8l-1.1,1.1h-1.8l-1.1,-1.1v-1.8z"/><path d="M174.6,394.4h1.8l1.1,1.1v1.8l-1.1,1.1h-1.8l-1.1,-1.1v-1.8z"/><path d="M177.6,394.3h1.8l1.1,1.1v1.8l-1.1,1.1h-1.8l-1.1,-1.1v-1.8z"/><path d="M180.6,395.0h1.8l1.1,1.1v1.8l-1.1,1.1h-1.8l-1.1,-1.1v-1.8z"/><path d="M183.6,394.5h1.8l1.1,1.1v1.8l-1.1,1.1h-1.8l-1.1,-1.1v-1.8z"/><path d="M186.6,394.5h1.8l1.1,1.1v1.8l-1.1,1.1h-1.8l-1.1,-1.1v-1.8z"/><path d="M189.6,395.1h1.8l1.1,1.1v1.8l-1.1,1.1h-1.8l-1.1,-1.1v-1.8z"/><path d="M192.6,394.7h1.8l1.1,1.1v1.8l-1.1,1.1h-1.8l-1.1,-1.1v-1.8z"/><path d="M195.6,388.9h1.8l1.1,1.1v1.8l-1.1,1.1h-1.8l-1.1,-1.1v-1.8z"/><path d="M198.6,388.0h1.8l1.1,1.1v1.8l-1.1,1.1h-1.8l-1.1,-1.1v-1.8z"/><path d="M201.6,389.7h1.8l1.1,1.1v1.8l-1.1,1.1h-1.8l-1.1,-1.1v-1.8z"/><path d="M204.6,390.3h1.8l1.1,1.1v1.8l-1.1,1.1h-1.8l-1.1,-1.1v-1.8z"/><path d="M207.6,388.4h1.8l1.1,1.1v1.8l-1.1,1.1h-1.8l-1.1,-1.1v-1.8z"/><path d="M210.6,386.2h1.8l1.1,1.1v1.8l-1.1,1.1h-1.8l-1.1,-1.1v-1.8z"/><path d="M213.6,384.8h1.8l1.1,1.1v1.8l-1.1,1.1h-1.8l-1.1,-1.1v-1.8z"/><path d="M216.6,384.1h1.8l1.1,1.1v1.8l-1.1,1.1h-1.8l-1.1,-1.1v-1.8z"/><path d="M219.6,383.7h1.8l1.1,1.1v1.8l-1.1,1.1h-1.8l-1.1,-1.1v-1.8z"/><path d="M222.6,385.2h1.8l1.1,1.1v1.8l-1.1,1.1h-1.8l-1.1,-1.1v-1.8z"/><path d="M225.6,388.1h1.8l1.1,1.1v1.8l-1.1,1.1h-1.8l-1.1,-1.1v-1.8z"/><path d="M228.6,390.6h1.8l1.1,1.1v1.8l-1.1,1.1h-1.8l-1.1,-1.1v-1.8z"/><path d="M231.6,391.0h1.8l1.1,1.1v1.8l-1.1,1.1h-1.8l-1.1,-1.1v-1.8z"/><path d="M234.6,391.0h1.8l1.1,1.1v1.8l-1.1,1.1h-1.8l-1.1,-1.1v-1.8z"/><path d="M237.6,391.9h1.8l1.1,1.1v1.8l-1.1,1.1h-1.8l-1.1,-1.1v-1.8z"/><path d="M240.6,391.7h1.8l1.1,1.1v1.8l-1.1,1.1h-1.8l-1.1,-1.1v-1.8z"/><path d="M243.6,391.9h1.8l1.1,1.1v1.8l-1.1,1.1h-1.8l-1.1,-1.1v-1.8z"/><path d="M246.6,392.0h1.8l1.1,1.1v1.8l-1.1,1.1h-1.8l-1.1,-1.1v-1.8z"/><path d="M249.6,391.9h1.8l1.1,1.1v1.8l-1.1,1.1h-1.8l-1.1,-1.1v-1.8z"/><path d="M252.6,392.0h1.8l1.1,1.1v1.8l-1.1,1.1h-1.8l-1.1,-1.1v-1.8z"/><path d="M255.6,391.6h1.8l1.1,1.1v1.8l-1.1,1.1h-1.8l-1.1,-1.1v-1.8z"/><path d="M258.6,391.9h1.8l1.1,1.1v1.8l-1.1,1.1h-1.8l-1.1,-1.1v-1.8z"/><path d="M261.6,391.7h1.8l1.1,1.1v1.8l-1.1,1.1h-1.8l-1.1,-1.1v-1.8z"/><path d="M264.6,392.1h1.8l1.1,1.1v1.8l-1.1,1.1h-1.8l-1.1,-1.1v-1.8z"/><path d="M267.6,392.0h1.8l1.1,1.1v1.8l-1.1,1.1h-1.8l-1.1,-1.1v-1.8z"/><path d="M270.6,391.4h1.8l1.1,1.1v1.8l-1.1,1.1h-1.8l-1.1,-1.1v-1.8z"/><path d="M273.6,391.4h1.8l1.1,1.1v1.8l-1.1,1.1h-1.8l-1.1,-1.1v-1.8z"/><path d="M276.6,391.5h1.8l1.1,1.1v1.8l-1.1,1.1h-1.8l-1.1,-1.1v-1.8z"/><path d="M279.6,392.1h1.8l1.1,1.1v1.8l-1.1,1.1h-1.8l-1.1,-1.1v-1.8z"/><path d="M282.6,391.7h1.8l1.1,1.1v1.8l-1.1,1.1h-1.8l-1.1,-1.1v-1.8z"/><path d="M285.6,391.8h1.8l1.1,1.1v1.8l-1.1,1.1h-1.8l-1.1,-1.1v-1.8z"/><path d="M288.6,391.6h1.8l1.1,1.1v1.8l-1.1,1.1h-1.8l-1.1,-1.1v-1.8z"/><path d="M291.6,391.7h1.8l1.1,1.1v1.8l-1.1,1.1h-1.8l-1.1,-1.1v-1.8z"/><path d="M294.6,391.6h1.8l1.1,1.1v1.8l-1.1,1.1h-1.8l-1.1,-1.1v-1.8z"/><path d="M297.6,391.6h1.8l1.1,1.1v1.8l-1.1,1.1h-1.8l-1.1,-1.1v-1.8z"/><path d="M300.6,391.8h1.8l1.1,1.1v1.8l-1.1,1.1h-1.8l-1.1,-1.1v-1.8z"/><path d="M303.6,391.8h1.8l1.1,1.1v1.8l-1.1,1.1h-1.8l-1.1,-1.1v-1.8z"/><path d="M306.6,392.0h1.8l1.1,1.1v1.8l-1.1,1.1h-1.8l-1.1,-1.1v-1.8z"/><path d="M309.6,391.9h1.8l1.1,1.1v1.8l-1.1,1.1h-1.8l-1.1,-1.1v-1.8z"/><path d="M312.6,392.1h1.8l1.1,1.1v1.8l-1.1,1.1h-1.8l-1.1,-1.1v-1.8z"/><path d="M315.6,392.0h1.8l1.1,1.1v1.8l-1.1,1.1h-1.8l-1.1,-1.1v-1.8z"/><path d="M318.6,392.1h1.8l1.1,1.1v1.8l-1.1,1.1h-1.8l-1.1,-1.1v-1.8z"/><path d="M321.6,391.9h1.8l1.1,1.1v1.8l-1.1,1.1h-1.8l-1.1,-1.1v-1.8z"/><path d="M324.6,391.4h1.8l1.1,1.1v1.8l-1.1,1.1h-1.8l-1.1,-1.1v-1.8z"/><path d="M327.6,392.0h1.8l1.1,1.1v1.8l-1.1,1.1h-1.8l-1.1,-1.1v-1.8z"/><path d="M330.6,392.1h1.8l1.1,1.1v1.8l-1.1,1.1h-1.8l-1.1,-1.1v-1.8z"/><path d="M333.6,392.0h1.8l1.1,1.1v1.8l-1.1,1.1h-1.8l-1.1,-1.1v-1.8z"/><path d="M336.6,391.8h1.8l1.1,1.1v1.8l-1.1,1.1h-1.8l-1.1,-1.1v-1.8z"/><path d="M339.6,391.9h1.8l1.1,1.1v1.8l-1.1,1.1h-1.8l-1.1,-1.1v-1.8z"/><path d="M342.6,391.5h1.8l1.1,1.1v1.8l-1.1,1.1h-1.8l-1.1,-1.1v-1.8z"/><path d="M345.6,392.0h1.8l1.1,1.1v1.8l-1.1,1.1h-1.8l-1.1,-1.1v-1.8z"/><path d="M348.6,391.8h1.8l1.1,1.1v1.8l-1.1,1.1h-1.8l-1.1,-1.1v-1.8z"/><path d="M351.6,391.6h1.8l1.1,1.1v1.8l-1.1,1.1h-1.8l-1.1,-1.1v-1.8z"/><path d="M354.6,391.4h1.8l1.1,1.1v1.8l-1.1,1.1h-1.8l-1.1,-1.1v-1.8z"/><path d="M357.6,392.0h1.8l1.1,1.1v1.8l-1.1,1.1h-1.8l-1.1,-1.1v-1.8z"/><path d="M360.6,392.1h1.8l1.1,1.1v1.8l-1.1,1.1h-1.8l-1.1,-1.1v-1.8z"/><path d="M363.6,391.4h1.8l1.1,1.1v1.8l-1.1,1.1h-1.8l-1.1,-1.1v-1.8z"/><path d="M366.6,392.0h1.8l1.1,1.1v1.8l-1.1,1.1h-1.8l-1.1,-1.1v-1.8z"/><path d="M369.6,391.7h1.8l1.1,1.1v1.8l-1.1,1.1h-1.8l-1.1,-1.1v-1.8z"/><path d="M372.6,391.5h1.8l1.1,1.1v1.8l-1.1,1.1h-1.8l-1.1,-1.1v-1.8z"/><path d="M375.6,391.6h1.8l1.1,1.1v1.8l-1.1,1.1h-1.8l-1.1,-1.1v-1.8z"/><path d="M378.6,391.9h1.8l1.1,1.1v1.8l-1.1,1.1h-1.8l-1.1,-1.1v-1.8z"/><path d="M381.6,392.0h1.8l1.1,1.1v1.8l-1.1,1.1h-1.8l-1.1,-1.1v-1.8z"/><path d="M384.6,391.4h1.8l1.1,1.1v1.8l-1.1,1.1h-1.8l-1.1,-1.1v-1.8z"/><path d="M387.6,391.8h1.8l1.1,1.1v1.8l-1.1,1.1h-1.8l-1.1,-1.1v-1.8z"/><path d="M390.6,391.4h1.8l1.1,1.1v1.8l-1.1,1.1h-1.8l-1.1,-1.1v-1.8z"/><path d="M393.6,391.9h1.8l1.1,1.1v1.8l-1.1,1.1h-1.8l-1.1,-1.1v-1.8z"/><path d="M396.6,391.6h1.8l1.1,1.1v1.8l-1.1,1.1h-1.8l-1.1,-1.1v-1.8z"/><path d="M399.6,392.0h1.8l1.1,1.1v1.8l-1.1,1.1h-1.8l-1.1,-1.1v-1.8z"/><path d="M402.6,392.1h1.8l1.1,1.1v1.8l-1.1,1.1h-1.8l-1.1,-1.1v-1.8z"/><path d="M405.6,391.7h1.8l1.1,1.1v1.8l-1.1,1.1h-1.8l-1.1,-1.1v-1.8z"/><path d="M408.6,392.1h1.8l1.1,1.1v1.8l-1.1,1.1h-1.8l-1.1,-1.1v-1.8z"/><path d="M411.6,391.6h1.8l1.1,1.1v1.8l-1.1,1.1h-1.8l-1.1,-1.1v-1.8z"/><path d="M414.6,391.4h1.8l1.1,1.1v1.8l-1.1,1.1h-1.8l-1.1,-1.1v-1.8z"/><path d="M417.6,391.8h1.8l1.1,1.1v1.8l-1.1,1.1h-1.8l-1.1,-1.1v-1.8z"/><path d="M420.6,391.4h1.8l1.1,1.1v1.8l-1.1,1.1h-1.8l-1.1,-1.1v-1.8z"/><path d="M423.6,391.5h1.8l1.1,1.1v1.8l-1.1,1.1h-1.8l-1.1,-1.1v-1.8z"/><path d="M426.6,391.7h1.8l1.1,1.1v1.8l-1.1,1.1h-1.8l-1.1,-1.1v-1.8z"/><path d="M429.6,391.8h1.8l1.1,1.1v1.8l-1.1,1.1h-1.8l-1.1,-1.1v-1.8z"/><path d="M432.6,391.5h1.8l1.1,1.1v1.8l-1.1,1.1h-1.8l-1.1,-1.1v-1.8z"/><path d="M435.6,391.4h1.8l1.1,1.1v1.8l-1.1,1.1h-1.8l-1.1,-1.1v-1.8z"/><path d="M438.6,392.0h1.8l1.1,1.1v1.8l-1.1,1.1h-1.8l-1.1,-1.1v-1.8z"/><path d="M441.6,391.6h1.8l1.1,1.1v1.8l-1.1,1.1h-1.8l-1.1,-1.1v-1.8z"/><path d="M444.6,392.1h1.8l1.1,1.1v1.8l-1.1,1.1h-1.8l-1.1,-1.1v-1.8z"/><path d="M447.6,392.1h1.8l1.1,1.1v1.8l-1.1,1.1h-1.8l-1.1,-1.1v-1.8z"/><path d="M450.6,391.6h1.8l1.1,1.1v1.8l-1.1,1.1h-1.8l-1.1,-1.1v-1.8z"/><path d="M453.6,391.7h1.8l1.1,1.1v1.8l-1.1,1.1h-1.8l-1.1,-1.1v-1.8z"/><path d="M456.6,391.8h1.8l1.1,1.1v1.8l-1.1,1.1h-1.8l-1.1,-1.1v-1.8z"/><path d="M459.6,391.9h1.8l1.1,1.1v1.8l-1.1,1.1h-1.8l-1.1,-1.1v-1.8z"/><path d="M462.6,391.8h1.8l1.1,1.1v1.8l-1.1,1.1h-1.8l-1.1,-1.1v-1.8z"/><path d="M465.6,391.8h1.8l1.1,1.1v1.8l-1.1,1.1h-1.8l-1.1,-1.1v-1.8z"/><path d="M468.6,391.8h1.8l1.1,1.1v1.8l-1.1,1.1h-1.8l-1.1,-1.1v-1.8z"/><path d="M471.6,392.1h1.8l1.1,1.1v1.8l-1.1,1.1h-1.8l-1.1,-1.1v-1.8z"/><path d="M474.6,391.8h1.8l1.1,1.1v1.8l-1.1,1.1h-1.8l-1.1,-1.1v-1.8z"/><path d="M477.6,391.7h1.8l1.1,1.1v1.8l-1.1,1.1h-1.8l-1.1,-1.1v-1.8z"/><path d="M480.6,391.9h1.8l1.1,1.1v1.8l-1.1,1.1h-1.8l-1.1,-1.1v-1.8z"/><path d="M483.6,391.5h1.8l1.1,1.1v1.8l-1.1,1.1h-1.8l-1.1,-1.1v-1.8z"/><path d="M486.6,391.6h1.8l1.1,1.1v1.8l-1.1,1.1h-1.8l-1.1,-1.1v-1.8z"/><path d="M489.6,392.1h1.8l1.1,1.1v1.8l-1.1,1.1h-1.8l-1.1,-1.1v-1.8z"/><path d="M492.6,391.8h1.8l1.1,1.1v1.8l-1.1,1.1h-1.8l-1.1,-1.1v-1.8z"/><path d="M495.6,391.8h1.8l1.1,1.1v1.8l-1.1,1.1h-1.8l-1.1,-1.1v-1.8z"/><path d="M498.6,391.4h1.8l1.1,1.1v1.8l-1.1,1.1h-1.8l-1.1,-1.1v-1.8z"/><path d="M501.6,391.7h1.8l1.1,1.1v1.8l-1.1,1.1h-1.8l-1.1,-1.1v-1.8z"/><path d="M504.6,391.8h1.8l1.1,1.1v1.8l-1.1,1.1h-1.8l-1.1,-1.1v-1.8z"/><path d="M507.6,391.4h1.8l1.1,1.1v1.8l-1.1,1.1h-1.8l-1.1,-1.1v-1.8z"/><path d="M510.6,391.9h1.8l1.1,1.1v1.8l-1.1,1.1h-1.8l-1.1,-1.1v-1.8z"/><path d="M513.6,391.9h1.8l1.1,1.1v1.8l-1.1,1.1h-1.8l-1.1,-1.1v-1.8z"/><path d="M516.6,391.4h1.8l1.1,1.1v1.8l-1.1,1.1h-1.8l-1.1,-1.1v-1.8z"/><path d="M519.6,391.9h1.8l1.1,1.1v1.8l-1.1,1.1h-1.8l-1.1,-1.1v-1.8z"/><path d="M522.6,391.7h1.8l1.1,1.1v1.8l-1.1,1.1h-1.8l-1.1,-1.1v-1.8z"/><path d="M525.6,391.9h1.8l1.1,1.1v1.8l-1.1,1.1h-1.8l-1.1,-1.1v-1.8z"/><path d="M528.6,391.6h1.8l1.1,1.1v1.8l-1.1,1.1h-1.8l-1.1,-1.1v-1.8z"/><path d="M531.6,391.9h1.8l1.1,1.1v1.8l-1.1,1.1h-1.8l-1.1,-1.1v-1.8z"/><path d="M534.6,392.0h1.8l1.1,1.1v1.8l-1.1,1.1h-1.8l-1.1,-1.1v-1.8z"/><path d="M537.6,391.4h1.8l1.1,1.1v1.8l-1.1,1.1h-1.8l-1.1,-1.1v-1.8z"/><path d="M540.6,391.4h1.8l1.1,1.1v1.8l-1.1,1.1h-1.8l-1.1,-1.1v-1.8z"/><path d="M543.6,391.9h1.8l1.1,1.1v1.8l-1.1,1.1h-1.8l-1.1,-1.1v-1.8z"/><path d="M546.6,392.1h1.8l1.1,1.1v1.8l-1.1,1.1h-1.8l-1.1,-1.1v-1.8z"/><path d="M549.6,391.6h1.8l1.1,1.1v1.8l-1.1,1.1h-1.8l-1.1,-1.1v-1.8z"/><path d="M552.6,391.7h1.8l1.1,1.1v1.8l-1.1,1.1h-1.8l-1.1,-1.1v-1.8z"/><path d="M555.6,391.8h1.8l1.1,1.1v1.8l-1.1,1.1h-1.8l-1.1,-1.1v-1.8z"/><path d="M558.6,391.6h1.8l1.1,1.1v1.8l-1.1,1.1h-1.8l-1.1,-1.1v-1.8z"/><path d="M561.6,391.7h1.8l1.1,1.1v1.8l-1.1,1.1h-1.8l-1.1,-1.1v-1.8z"/><path d="M564.6,391.6h1.8l1.1,1.1v1.8l-1.1,1.1h-1.8l-1.1,-1.1v-1.8z"/><path d="M567.6,391.7h1.8l1.1,1.1v1.8l-1.1,1.1h-1.8l-1.1,-1.1v-1.8z"/><path d="M570.6,391.9h1.8l1.1,1.1v1.8l-1.1,1.1h-1.8l-1.1,-1.1v-1.8z"/><path d="M573.6,391.6h1.8l1.1,1.1v1.8l-1.1,1.1h-1.8l-1.1,-1.1v-1.8z"/><path d="M576.6,391.7h1.8l1.1,1.1v1.8l-1.1,1.1h-1.8l-1.1,-1.1v-1.8z"/><path d="M579.6,392.0h1.8l1.1,1.1v1.8l-1.1,1.1h-1.8l-1.1,-1.1v-1.8z"/><path d="M582.6,391.4h1.8l1.1,1.1v1.8l-1.1,1.1h-1.8l-1.1,-1.1v-1.8z"/><path d="M585.6,391.8h1.8l1.1,1.1v1.8l-1.1,1.1h-1.8l-1.1,-1.1v-1.8z"/><path d="M588.6,392.0h1.8l1.1,1.1v1.8l-1.1,1.1h-1.8l-1.1,-1.1v-1.8z"/><path d="M591.6,391.6h1.8l1.1,1.1v1.8l-1.1,1.1h-1.8l-1.1,-1.1v-1.8z"/><path d="M594.6,391.6h1.8l1.1,1.1v1.8l-1.1,1.1h-1.8l-1.1,-1.1v-1.8z"/><path d="M597.6,392.0h1.8l1.1,1.1v1.8l-1.1,1.1h-1.8l-1.1,-1.1v-1.8z"/><path d="M600.6,391.6h1.8l1.1,1.1v1.8l-1.1,1.1h-1.8l-1.1,-1.1v-1.8z"/><path d="M603.6,391.5h1.8l1.1,1.1v1.8l-1.1,1.1h-1.8l-1.1,-1.1v-1.8z"/><path d="M606.6,391.7h1.8l1.1,1.1v1.8l-1.1,1.1h-1.8l-1.1,-1.1v-1.8z"/><path d="M609.6,391.9h1.8l1.1,1.1v1.8l-1.1,1.1h-1.8l-1.1,-1.1v-1.8z"/><path d="M612.6,391.5h1.8l1.1,1.1v1.8l-1.1,1.1h-1.8l-1.1,-1.1v-1.8z"/><path d="M615.6,391.6h1.8l1.1,1.1v1.8l-1.1,1.1h-1.8l-1.1,-1.1v-1.8z"/><path d="M618.6,391.7h1.8l1.1,1.1v1.8l-1.1,1.1h-1.8l-1.1,-1.1v-1.8z"/><path d="M621.6,392.1h1.8l1.1,1.1v1.8l-1.1,1.1h-1.8l-1.1,-1.1v-1.8z"/><path d="M624.6,391.7h1.8l1.1,1.1v1.8l-1.1,1.1h-1.8l-1.1,-1.1v-1.8z"/><path d="M627.6,392.1h1.8l1.1,1.1v1.8l-1.1,1.1h-1.8l-1.1,-1.1v-1.8z"/><path d="M630.6,391.5h1.8l1.1,1.1v1.8l-1.1,1.1h-1.8l-1.1,-1.1v-1.8z"/><path d="M633.6,391.7h1.8l1.1,1.1v1.8l-1.1,1.1h-1.8l-1.1,-1.1v-1.8z"/><path d="M636.6,391.9h1.8l1.1,1.1v1.8l-1.1,1.1h-1.8l-1.1,-1.1v-1.8z"/><path d="M639.6,392.1h1.8l1.1,1.1v1.8l-1.1,1.1h-1.8l-1.1,-1.1v-1.8z"/><path d="M642.6,391.8h1.8l1.1,1.1v1.8l-1.1,1.1h-1.8l-1.1,-1.1v-1.8z"/><path d="M645.6,391.6h1.8l1.1,1.1v1.8l-1.1,1.1h-1.8l-1.1,-1.1v-1.8z"/><path d="M648.6,391.5h1.8l1.1,1.1v1.8l-1.1,1.1h-1.8l-1.1,-1.1v-1.8z"/><path d="M651.6,391.8h1.8l1.1,1.1v1.8l-1.1,1.1h-1.8l-1.1,-1.1v-1.8z"/><path d="M654.6,391.5h1.8l1.1,1.1v1.8l-1.1,1.1h-1.8l-1.1,-1.1v-1.8z"/><path d="M657.6,392.0h1.8l1.1,1.1v1.8l-1.1,1.1h-1.8l-1.1,-1.1v-1.8z"/><path d="M660.6,392.1h1.8l1.1,1.1v1.8l-1.1,1.1h-1.8l-1.1,-1.1v-1.8z"/><path d="M663.6,391.5h1.8l1.1,1.1v1.8l-1.1,1.1h-1.8l-1.1,-1.1v-1.8z"/><path d="M666.6,391.6h1.8l1.1,1.1v1.8l-1.1,1.1h-1.8l-1.1,-1.1v-1.8z"/><path d="M669.6,392.0h1.8l1.1,1.1v1.8l-1.1,1.1h-1.8l-1.1,-1.1v-1.8z"/><path d="M672.6,391.9h1.8l1.1,1.1v1.8l-1.1,1.1h-1.8l-1.1,-1.1v-1.8z"/><path d="M675.6,392.0h1.8l1.1,1.1v1.8l-1.1,1.1h-1.8l-1.1,-1.1v-1.8z"/><path d="M678.6,391.7h1.8l1.1,1.1v1.8l-1.1,1.1h-1.8l-1.1,-1.1v-1.8z"/><path d="M681.6,391.5h1.8l1.1,1.1v1.8l-1.1,1.1h-1.8l-1.1,-1.1v-1.8z"/><path d="M684.6,391.6h1.8l1.1,1.1v1.8l-1.1,1.1h-1.8l-1.1,-1.1v-1.8z"/><path d="M687.6,392.0h1.8l1.1,1.1v1.8l-1.1,1.1h-1.8l-1.1,-1.1v-1.8z"/><path d="M690.6,391.3h1.8l1.1,1.1v1.8l-1.1,1.1h-1.8l-1.1,-1.1v-1.8z"/><path d="M693.6,390.9h1.8l1.1,1.1v1.8l-1.1,1.1h-1.8l-1.1,-1.1v-1.8z"/><path d="M696.6,390.9h1.8l1.1,1.1v1.8l-1.1,1.1h-1.8l-1.1,-1.1v-1.8z"/><path d="M699.6,391.0h1.8l1.1,1.1v1.8l-1.1,1.1h-1.8l-1.1,-1.1v-1.8z"/><path d="M702.6,391.0h1.8l1.1,1.1v1.8l-1.1,1.1h-1.8l-1.1,-1.1v-1.8z"/><path d="M705.6,391.4h1.8l1.1,1.1v1.8l-1.1,1.1h-1.8l-1.1,-1.1v-1.8z"/><path d="M708.6,390.8h1.8l1.1,1.1v1.8l-1.1,1.1h-1.8l-1.1,-1.1v-1.8z"/><path d="M711.6,390.7h1.8l1.1,1.1v1.8l-1.1,1.1h-1.8l-1.1,-1.1v-1.8z"/><path d="M714.6,391.4h1.8l1.1,1.1v1.8l-1.1,1.1h-1.8l-1.1,-1.1v-1.8z"/><path d="M717.6,391.4h1.8l1.1,1.1v1.8l-1.1,1.1h-1.8l-1.1,-1.1v-1.8z"/><path d="M720.6,391.5h1.8l1.1,1.1v1.8l-1.1,1.1h-1.8l-1.1,-1.1v-1.8z"/><path d="M723.6,391.1h1.8l1.1,1.1v1.8l-1.1,1.1h-1.8l-1.1,-1.1v-1.8z"/><path d="M726.6,391.5h1.8l1.1,1.1v1.8l-1.1,1.1h-1.8l-1.1,-1.1v-1.8z"/><path d="M729.6,391.5h1.8l1.1,1.1v1.8l-1.1,1.1h-1.8l-1.1,-1.1v-1.8z"/><path d="M732.6,390.9h1.8l1.1,1.1v1.8l-1.1,1.1h-1.8l-1.1,-1.1v-1.8z"/><path d="M735.6,391.3h1.8l1.1,1.1v1.8l-1.1,1.1h-1.8l-1.1,-1.1v-1.8z"/><path d="M738.6,391.4h1.8l1.1,1.1v1.8l-1.1,1.1h-1.8l-1.1,-1.1v-1.8z"/><path d="M741.6,391.3h1.8l1.1,1.1v1.8l-1.1,1.1h-1.8l-1.1,-1.1v-1.8z"/><path d="M744.6,391.2h1.8l1.1,1.1v1.8l-1.1,1.1h-1.8l-1.1,-1.1v-1.8z"/><path d="M747.6,391.0h1.8l1.1,1.1v1.8l-1.1,1.1h-1.8l-1.1,-1.1v-1.8z"/><path d="M750.6,391.1h1.8l1.1,1.1v1.8l-1.1,1.1h-1.8l-1.1,-1.1v-1.8z"/><path d="M753.6,391.0h1.8l1.1,1.1v1.8l-1.1,1.1h-1.8l-1.1,-1.1v-1.8z"/><path d="M756.6,390.9h1.8l1.1,1.1v1.8l-1.1,1.1h-1.8l-1.1,-1.1v-1.8z"/><path d="M759.6,391.3h1.8l1.1,1.1v1.8l-1.1,1.1h-1.8l-1.1,-1.1v-1.8z"/><path d="M762.6,391.1h1.8l1.1,1.1v1.8l-1.1,1.1h-1.8l-1.1,-1.1v-1.8z"/><path d="M765.6,391.5h1.8l1.1,1.1v1.8l-1.1,1.1h-1.8l-1.1,-1.1v-1.8z"/><path d="M768.6,390.9h1.8l1.1,1.1v1.8l-1.1,1.1h-1.8l-1.1,-1.1v-1.8z"/><path d="M771.6,391.6h1.8l1.1,1.1v1.8l-1.1,1.1h-1.8l-1.1,-1.1v-1.8z"/><path d="M774.6,391.4h1.8l1.1,1.1v1.8l-1.1,1.1h-1.8l-1.1,-1.1v-1.8z"/><path d="M777.6,391.6h1.8l1.1,1.1v1.8l-1.1,1.1h-1.8l-1.1,-1.1v-1.8z"/><path d="M195.8,385.9h2.3l1.4,1.4v2.3l-1.4,1.4h-2.3l-1.4,-1.4v-2.3z"/><path d="M210.8,384.9h2.3l1.4,1.4v2.3l-1.4,1.4h-2.3l-1.4,-1.4v-2.3z"/><path d="M218.8,382.4h2.3l1.4,1.4v2.3l-1.4,1.4h-2.3l-1.4,-1.4v-2.3z"/><path d="M692.5,384.6 L695.6,387.8 L692.5,391 L689.4,387.8 Z"/><path d="M510.2,390.0h1.6l1.0,1.0v1.6l-1.0,1.0h-1.6l-1.0,-1.0v-1.6z"/><path d="M565.2,390.0h1.6l1.0,1.0v1.6l-1.0,1.0h-1.6l-1.0,-1.0v-1.6z"/><path d="M602.2,390.0h1.6l1.0,1.0v1.6l-1.0,1.0h-1.6l-1.0,-1.0v-1.6z"/><path d="M645.2,390.0h1.6l1.0,1.0v1.6l-1.0,1.0h-1.6l-1.0,-1.0v-1.6z"/><path d="M759.2,389.4h1.6l1.0,1.0v1.6l-1.0,1.0h-1.6l-1.0,-1.0v-1.6z"/><polyline points="160.0,431.0 197.0,431.0 199.0,429.0 213.0,429.0 216.0,426.8 231.0,426.8 234.0,429.0 781.0,429.0" fill="none" stroke="#000" stroke-width="5.0" stroke-linejoin="round"/><path d="M159.4,428.5h2.2l1.3,1.3v2.2l-1.3,1.3h-2.2l-1.3,-1.3v-2.2z"/><path d="M162.4,428.4h2.2l1.3,1.3v2.2l-1.3,1.3h-2.2l-1.3,-1.3v-2.2z"/><path d="M165.4,428.6h2.2l1.3,1.3v2.2l-1.3,1.3h-2.2l-1.3,-1.3v-2.2z"/><path d="M168.4,428.5h2.2l1.3,1.3v2.2l-1.3,1.3h-2.2l-1.3,-1.3v-2.2z"/><path d="M171.4,428.4h2.2l1.3,1.3v2.2l-1.3,1.3h-2.2l-1.3,-1.3v-2.2z"/><path d="M174.4,428.6h2.2l1.3,1.3v2.2l-1.3,1.3h-2.2l-1.3,-1.3v-2.2z"/><path d="M177.4,428.8h2.2l1.3,1.3v2.2l-1.3,1.3h-2.2l-1.3,-1.3v-2.2z"/><path d="M180.4,428.7h2.2l1.3,1.3v2.2l-1.3,1.3h-2.2l-1.3,-1.3v-2.2z"/><path d="M183.4,428.7h2.2l1.3,1.3v2.2l-1.3,1.3h-2.2l-1.3,-1.3v-2.2z"/><path d="M186.4,428.5h2.2l1.3,1.3v2.2l-1.3,1.3h-2.2l-1.3,-1.3v-2.2z"/><path d="M189.4,428.6h2.2l1.3,1.3v2.2l-1.3,1.3h-2.2l-1.3,-1.3v-2.2z"/><path d="M192.4,428.5h2.2l1.3,1.3v2.2l-1.3,1.3h-2.2l-1.3,-1.3v-2.2z"/><path d="M195.4,428.5h2.2l1.3,1.3v2.2l-1.3,1.3h-2.2l-1.3,-1.3v-2.2z"/><path d="M198.4,426.4h2.2l1.3,1.3v2.2l-1.3,1.3h-2.2l-1.3,-1.3v-2.2z"/><path d="M201.4,426.5h2.2l1.3,1.3v2.2l-1.3,1.3h-2.2l-1.3,-1.3v-2.2z"/><path d="M204.4,426.8h2.2l1.3,1.3v2.2l-1.3,1.3h-2.2l-1.3,-1.3v-2.2z"/><path d="M207.4,426.7h2.2l1.3,1.3v2.2l-1.3,1.3h-2.2l-1.3,-1.3v-2.2z"/><path d="M210.4,426.7h2.2l1.3,1.3v2.2l-1.3,1.3h-2.2l-1.3,-1.3v-2.2z"/><path d="M213.4,425.6h2.2l1.3,1.3v2.2l-1.3,1.3h-2.2l-1.3,-1.3v-2.2z"/><path d="M216.4,424.3h2.2l1.3,1.3v2.2l-1.3,1.3h-2.2l-1.3,-1.3v-2.2z"/><path d="M219.4,424.3h2.2l1.3,1.3v2.2l-1.3,1.3h-2.2l-1.3,-1.3v-2.2z"/><path d="M222.4,424.5h2.2l1.3,1.3v2.2l-1.3,1.3h-2.2l-1.3,-1.3v-2.2z"/><path d="M225.4,424.5h2.2l1.3,1.3v2.2l-1.3,1.3h-2.2l-1.3,-1.3v-2.2z"/><path d="M228.4,424.5h2.2l1.3,1.3v2.2l-1.3,1.3h-2.2l-1.3,-1.3v-2.2z"/><path d="M231.4,425.7h2.2l1.3,1.3v2.2l-1.3,1.3h-2.2l-1.3,-1.3v-2.2z"/><path d="M234.4,426.4h2.2l1.3,1.3v2.2l-1.3,1.3h-2.2l-1.3,-1.3v-2.2z"/><path d="M237.4,426.6h2.2l1.3,1.3v2.2l-1.3,1.3h-2.2l-1.3,-1.3v-2.2z"/><path d="M240.4,426.7h2.2l1.3,1.3v2.2l-1.3,1.3h-2.2l-1.3,-1.3v-2.2z"/><path d="M243.4,426.6h2.2l1.3,1.3v2.2l-1.3,1.3h-2.2l-1.3,-1.3v-2.2z"/><path d="M246.4,426.5h2.2l1.3,1.3v2.2l-1.3,1.3h-2.2l-1.3,-1.3v-2.2z"/><path d="M249.4,426.6h2.2l1.3,1.3v2.2l-1.3,1.3h-2.2l-1.3,-1.3v-2.2z"/><path d="M252.4,426.4h2.2l1.3,1.3v2.2l-1.3,1.3h-2.2l-1.3,-1.3v-2.2z"/><path d="M255.4,426.8h2.2l1.3,1.3v2.2l-1.3,1.3h-2.2l-1.3,-1.3v-2.2z"/><path d="M258.4,426.7h2.2l1.3,1.3v2.2l-1.3,1.3h-2.2l-1.3,-1.3v-2.2z"/><path d="M261.4,426.6h2.2l1.3,1.3v2.2l-1.3,1.3h-2.2l-1.3,-1.3v-2.2z"/><path d="M264.4,426.5h2.2l1.3,1.3v2.2l-1.3,1.3h-2.2l-1.3,-1.3v-2.2z"/><path d="M267.4,426.8h2.2l1.3,1.3v2.2l-1.3,1.3h-2.2l-1.3,-1.3v-2.2z"/><path d="M270.4,426.6h2.2l1.3,1.3v2.2l-1.3,1.3h-2.2l-1.3,-1.3v-2.2z"/><path d="M273.4,426.8h2.2l1.3,1.3v2.2l-1.3,1.3h-2.2l-1.3,-1.3v-2.2z"/><path d="M276.4,426.7h2.2l1.3,1.3v2.2l-1.3,1.3h-2.2l-1.3,-1.3v-2.2z"/><path d="M279.4,426.6h2.2l1.3,1.3v2.2l-1.3,1.3h-2.2l-1.3,-1.3v-2.2z"/><path d="M282.4,426.6h2.2l1.3,1.3v2.2l-1.3,1.3h-2.2l-1.3,-1.3v-2.2z"/><path d="M285.4,426.6h2.2l1.3,1.3v2.2l-1.3,1.3h-2.2l-1.3,-1.3v-2.2z"/><path d="M288.4,426.6h2.2l1.3,1.3v2.2l-1.3,1.3h-2.2l-1.3,-1.3v-2.2z"/><path d="M291.4,426.5h2.2l1.3,1.3v2.2l-1.3,1.3h-2.2l-1.3,-1.3v-2.2z"/><path d="M294.4,426.5h2.2l1.3,1.3v2.2l-1.3,1.3h-2.2l-1.3,-1.3v-2.2z"/><path d="M297.4,426.7h2.2l1.3,1.3v2.2l-1.3,1.3h-2.2l-1.3,-1.3v-2.2z"/><path d="M300.4,426.4h2.2l1.3,1.3v2.2l-1.3,1.3h-2.2l-1.3,-1.3v-2.2z"/><path d="M303.4,426.4h2.2l1.3,1.3v2.2l-1.3,1.3h-2.2l-1.3,-1.3v-2.2z"/><path d="M306.4,426.7h2.2l1.3,1.3v2.2l-1.3,1.3h-2.2l-1.3,-1.3v-2.2z"/><path d="M309.4,426.5h2.2l1.3,1.3v2.2l-1.3,1.3h-2.2l-1.3,-1.3v-2.2z"/><path d="M312.4,426.6h2.2l1.3,1.3v2.2l-1.3,1.3h-2.2l-1.3,-1.3v-2.2z"/><path d="M315.4,426.6h2.2l1.3,1.3v2.2l-1.3,1.3h-2.2l-1.3,-1.3v-2.2z"/><path d="M318.4,426.5h2.2l1.3,1.3v2.2l-1.3,1.3h-2.2l-1.3,-1.3v-2.2z"/><path d="M321.4,426.8h2.2l1.3,1.3v2.2l-1.3,1.3h-2.2l-1.3,-1.3v-2.2z"/><path d="M324.4,426.5h2.2l1.3,1.3v2.2l-1.3,1.3h-2.2l-1.3,-1.3v-2.2z"/><path d="M327.4,426.6h2.2l1.3,1.3v2.2l-1.3,1.3h-2.2l-1.3,-1.3v-2.2z"/><path d="M330.4,426.5h2.2l1.3,1.3v2.2l-1.3,1.3h-2.2l-1.3,-1.3v-2.2z"/><path d="M333.4,426.7h2.2l1.3,1.3v2.2l-1.3,1.3h-2.2l-1.3,-1.3v-2.2z"/><path d="M336.4,426.5h2.2l1.3,1.3v2.2l-1.3,1.3h-2.2l-1.3,-1.3v-2.2z"/><path d="M339.4,426.5h2.2l1.3,1.3v2.2l-1.3,1.3h-2.2l-1.3,-1.3v-2.2z"/><path d="M342.4,426.7h2.2l1.3,1.3v2.2l-1.3,1.3h-2.2l-1.3,-1.3v-2.2z"/><path d="M345.4,426.5h2.2l1.3,1.3v2.2l-1.3,1.3h-2.2l-1.3,-1.3v-2.2z"/><path d="M348.4,426.6h2.2l1.3,1.3v2.2l-1.3,1.3h-2.2l-1.3,-1.3v-2.2z"/><path d="M351.4,426.8h2.2l1.3,1.3v2.2l-1.3,1.3h-2.2l-1.3,-1.3v-2.2z"/><path d="M354.4,426.4h2.2l1.3,1.3v2.2l-1.3,1.3h-2.2l-1.3,-1.3v-2.2z"/><path d="M357.4,426.4h2.2l1.3,1.3v2.2l-1.3,1.3h-2.2l-1.3,-1.3v-2.2z"/><path d="M360.4,426.5h2.2l1.3,1.3v2.2l-1.3,1.3h-2.2l-1.3,-1.3v-2.2z"/><path d="M363.4,426.7h2.2l1.3,1.3v2.2l-1.3,1.3h-2.2l-1.3,-1.3v-2.2z"/><path d="M366.4,426.6h2.2l1.3,1.3v2.2l-1.3,1.3h-2.2l-1.3,-1.3v-2.2z"/><path d="M369.4,426.5h2.2l1.3,1.3v2.2l-1.3,1.3h-2.2l-1.3,-1.3v-2.2z"/><path d="M372.4,426.5h2.2l1.3,1.3v2.2l-1.3,1.3h-2.2l-1.3,-1.3v-2.2z"/><path d="M375.4,426.5h2.2l1.3,1.3v2.2l-1.3,1.3h-2.2l-1.3,-1.3v-2.2z"/><path d="M378.4,426.6h2.2l1.3,1.3v2.2l-1.3,1.3h-2.2l-1.3,-1.3v-2.2z"/><path d="M381.4,426.4h2.2l1.3,1.3v2.2l-1.3,1.3h-2.2l-1.3,-1.3v-2.2z"/><path d="M384.4,426.7h2.2l1.3,1.3v2.2l-1.3,1.3h-2.2l-1.3,-1.3v-2.2z"/><path d="M387.4,426.8h2.2l1.3,1.3v2.2l-1.3,1.3h-2.2l-1.3,-1.3v-2.2z"/><path d="M390.4,426.8h2.2l1.3,1.3v2.2l-1.3,1.3h-2.2l-1.3,-1.3v-2.2z"/><path d="M393.4,426.7h2.2l1.3,1.3v2.2l-1.3,1.3h-2.2l-1.3,-1.3v-2.2z"/><path d="M396.4,426.8h2.2l1.3,1.3v2.2l-1.3,1.3h-2.2l-1.3,-1.3v-2.2z"/><path d="M399.4,426.4h2.2l1.3,1.3v2.2l-1.3,1.3h-2.2l-1.3,-1.3v-2.2z"/><path d="M402.4,426.5h2.2l1.3,1.3v2.2l-1.3,1.3h-2.2l-1.3,-1.3v-2.2z"/><path d="M405.4,426.8h2.2l1.3,1.3v2.2l-1.3,1.3h-2.2l-1.3,-1.3v-2.2z"/><path d="M408.4,426.7h2.2l1.3,1.3v2.2l-1.3,1.3h-2.2l-1.3,-1.3v-2.2z"/><path d="M411.4,426.6h2.2l1.3,1.3v2.2l-1.3,1.3h-2.2l-1.3,-1.3v-2.2z"/><path d="M414.4,426.8h2.2l1.3,1.3v2.2l-1.3,1.3h-2.2l-1.3,-1.3v-2.2z"/><path d="M417.4,426.6h2.2l1.3,1.3v2.2l-1.3,1.3h-2.2l-1.3,-1.3v-2.2z"/><path d="M420.4,426.7h2.2l1.3,1.3v2.2l-1.3,1.3h-2.2l-1.3,-1.3v-2.2z"/><path d="M423.4,426.5h2.2l1.3,1.3v2.2l-1.3,1.3h-2.2l-1.3,-1.3v-2.2z"/><path d="M426.4,426.5h2.2l1.3,1.3v2.2l-1.3,1.3h-2.2l-1.3,-1.3v-2.2z"/><path d="M429.4,426.6h2.2l1.3,1.3v2.2l-1.3,1.3h-2.2l-1.3,-1.3v-2.2z"/><path d="M432.4,426.5h2.2l1.3,1.3v2.2l-1.3,1.3h-2.2l-1.3,-1.3v-2.2z"/><path d="M435.4,426.6h2.2l1.3,1.3v2.2l-1.3,1.3h-2.2l-1.3,-1.3v-2.2z"/><path d="M438.4,426.8h2.2l1.3,1.3v2.2l-1.3,1.3h-2.2l-1.3,-1.3v-2.2z"/><path d="M441.4,426.5h2.2l1.3,1.3v2.2l-1.3,1.3h-2.2l-1.3,-1.3v-2.2z"/><path d="M444.4,426.4h2.2l1.3,1.3v2.2l-1.3,1.3h-2.2l-1.3,-1.3v-2.2z"/><path d="M447.4,426.4h2.2l1.3,1.3v2.2l-1.3,1.3h-2.2l-1.3,-1.3v-2.2z"/><path d="M450.4,426.5h2.2l1.3,1.3v2.2l-1.3,1.3h-2.2l-1.3,-1.3v-2.2z"/><path d="M453.4,426.7h2.2l1.3,1.3v2.2l-1.3,1.3h-2.2l-1.3,-1.3v-2.2z"/><path d="M456.4,426.5h2.2l1.3,1.3v2.2l-1.3,1.3h-2.2l-1.3,-1.3v-2.2z"/><path d="M459.4,426.5h2.2l1.3,1.3v2.2l-1.3,1.3h-2.2l-1.3,-1.3v-2.2z"/><path d="M462.4,426.4h2.2l1.3,1.3v2.2l-1.3,1.3h-2.2l-1.3,-1.3v-2.2z"/><path d="M465.4,426.8h2.2l1.3,1.3v2.2l-1.3,1.3h-2.2l-1.3,-1.3v-2.2z"/><path d="M468.4,426.6h2.2l1.3,1.3v2.2l-1.3,1.3h-2.2l-1.3,-1.3v-2.2z"/><path d="M471.4,426.5h2.2l1.3,1.3v2.2l-1.3,1.3h-2.2l-1.3,-1.3v-2.2z"/><path d="M474.4,426.4h2.2l1.3,1.3v2.2l-1.3,1.3h-2.2l-1.3,-1.3v-2.2z"/><path d="M477.4,426.4h2.2l1.3,1.3v2.2l-1.3,1.3h-2.2l-1.3,-1.3v-2.2z"/><path d="M480.4,426.5h2.2l1.3,1.3v2.2l-1.3,1.3h-2.2l-1.3,-1.3v-2.2z"/><path d="M483.4,426.7h2.2l1.3,1.3v2.2l-1.3,1.3h-2.2l-1.3,-1.3v-2.2z"/><path d="M486.4,426.5h2.2l1.3,1.3v2.2l-1.3,1.3h-2.2l-1.3,-1.3v-2.2z"/><path d="M489.4,426.4h2.2l1.3,1.3v2.2l-1.3,1.3h-2.2l-1.3,-1.3v-2.2z"/><path d="M492.4,426.6h2.2l1.3,1.3v2.2l-1.3,1.3h-2.2l-1.3,-1.3v-2.2z"/><path d="M495.4,426.5h2.2l1.3,1.3v2.2l-1.3,1.3h-2.2l-1.3,-1.3v-2.2z"/><path d="M498.4,426.8h2.2l1.3,1.3v2.2l-1.3,1.3h-2.2l-1.3,-1.3v-2.2z"/><path d="M501.4,426.4h2.2l1.3,1.3v2.2l-1.3,1.3h-2.2l-1.3,-1.3v-2.2z"/><path d="M504.4,426.6h2.2l1.3,1.3v2.2l-1.3,1.3h-2.2l-1.3,-1.3v-2.2z"/><path d="M507.4,426.7h2.2l1.3,1.3v2.2l-1.3,1.3h-2.2l-1.3,-1.3v-2.2z"/><path d="M510.4,426.6h2.2l1.3,1.3v2.2l-1.3,1.3h-2.2l-1.3,-1.3v-2.2z"/><path d="M513.4,426.8h2.2l1.3,1.3v2.2l-1.3,1.3h-2.2l-1.3,-1.3v-2.2z"/><path d="M516.4,426.6h2.2l1.3,1.3v2.2l-1.3,1.3h-2.2l-1.3,-1.3v-2.2z"/><path d="M519.4,426.5h2.2l1.3,1.3v2.2l-1.3,1.3h-2.2l-1.3,-1.3v-2.2z"/><path d="M522.4,426.6h2.2l1.3,1.3v2.2l-1.3,1.3h-2.2l-1.3,-1.3v-2.2z"/><path d="M525.4,426.4h2.2l1.3,1.3v2.2l-1.3,1.3h-2.2l-1.3,-1.3v-2.2z"/><path d="M528.4,426.6h2.2l1.3,1.3v2.2l-1.3,1.3h-2.2l-1.3,-1.3v-2.2z"/><path d="M531.4,426.5h2.2l1.3,1.3v2.2l-1.3,1.3h-2.2l-1.3,-1.3v-2.2z"/><path d="M534.4,426.8h2.2l1.3,1.3v2.2l-1.3,1.3h-2.2l-1.3,-1.3v-2.2z"/><path d="M537.4,426.7h2.2l1.3,1.3v2.2l-1.3,1.3h-2.2l-1.3,-1.3v-2.2z"/><path d="M540.4,426.6h2.2l1.3,1.3v2.2l-1.3,1.3h-2.2l-1.3,-1.3v-2.2z"/><path d="M543.4,426.4h2.2l1.3,1.3v2.2l-1.3,1.3h-2.2l-1.3,-1.3v-2.2z"/><path d="M546.4,426.5h2.2l1.3,1.3v2.2l-1.3,1.3h-2.2l-1.3,-1.3v-2.2z"/><path d="M549.4,426.5h2.2l1.3,1.3v2.2l-1.3,1.3h-2.2l-1.3,-1.3v-2.2z"/><path d="M552.4,426.5h2.2l1.3,1.3v2.2l-1.3,1.3h-2.2l-1.3,-1.3v-2.2z"/><path d="M555.4,426.5h2.2l1.3,1.3v2.2l-1.3,1.3h-2.2l-1.3,-1.3v-2.2z"/><path d="M558.4,426.7h2.2l1.3,1.3v2.2l-1.3,1.3h-2.2l-1.3,-1.3v-2.2z"/><path d="M561.4,426.5h2.2l1.3,1.3v2.2l-1.3,1.3h-2.2l-1.3,-1.3v-2.2z"/><path d="M564.4,426.4h2.2l1.3,1.3v2.2l-1.3,1.3h-2.2l-1.3,-1.3v-2.2z"/><path d="M567.4,426.8h2.2l1.3,1.3v2.2l-1.3,1.3h-2.2l-1.3,-1.3v-2.2z"/><path d="M570.4,426.6h2.2l1.3,1.3v2.2l-1.3,1.3h-2.2l-1.3,-1.3v-2.2z"/><path d="M573.4,426.8h2.2l1.3,1.3v2.2l-1.3,1.3h-2.2l-1.3,-1.3v-2.2z"/><path d="M576.4,426.6h2.2l1.3,1.3v2.2l-1.3,1.3h-2.2l-1.3,-1.3v-2.2z"/><path d="M579.4,426.8h2.2l1.3,1.3v2.2l-1.3,1.3h-2.2l-1.3,-1.3v-2.2z"/><path d="M582.4,426.7h2.2l1.3,1.3v2.2l-1.3,1.3h-2.2l-1.3,-1.3v-2.2z"/><path d="M585.4,426.7h2.2l1.3,1.3v2.2l-1.3,1.3h-2.2l-1.3,-1.3v-2.2z"/><path d="M588.4,426.7h2.2l1.3,1.3v2.2l-1.3,1.3h-2.2l-1.3,-1.3v-2.2z"/><path d="M591.4,426.6h2.2l1.3,1.3v2.2l-1.3,1.3h-2.2l-1.3,-1.3v-2.2z"/><path d="M594.4,426.4h2.2l1.3,1.3v2.2l-1.3,1.3h-2.2l-1.3,-1.3v-2.2z"/><path d="M597.4,426.5h2.2l1.3,1.3v2.2l-1.3,1.3h-2.2l-1.3,-1.3v-2.2z"/><path d="M600.4,426.7h2.2l1.3,1.3v2.2l-1.3,1.3h-2.2l-1.3,-1.3v-2.2z"/><path d="M603.4,426.8h2.2l1.3,1.3v2.2l-1.3,1.3h-2.2l-1.3,-1.3v-2.2z"/><path d="M606.4,426.8h2.2l1.3,1.3v2.2l-1.3,1.3h-2.2l-1.3,-1.3v-2.2z"/><path d="M609.4,426.5h2.2l1.3,1.3v2.2l-1.3,1.3h-2.2l-1.3,-1.3v-2.2z"/><path d="M612.4,426.7h2.2l1.3,1.3v2.2l-1.3,1.3h-2.2l-1.3,-1.3v-2.2z"/><path d="M615.4,426.7h2.2l1.3,1.3v2.2l-1.3,1.3h-2.2l-1.3,-1.3v-2.2z"/><path d="M618.4,426.7h2.2l1.3,1.3v2.2l-1.3,1.3h-2.2l-1.3,-1.3v-2.2z"/><path d="M621.4,426.7h2.2l1.3,1.3v2.2l-1.3,1.3h-2.2l-1.3,-1.3v-2.2z"/><path d="M624.4,426.6h2.2l1.3,1.3v2.2l-1.3,1.3h-2.2l-1.3,-1.3v-2.2z"/><path d="M627.4,426.7h2.2l1.3,1.3v2.2l-1.3,1.3h-2.2l-1.3,-1.3v-2.2z"/><path d="M630.4,426.7h2.2l1.3,1.3v2.2l-1.3,1.3h-2.2l-1.3,-1.3v-2.2z"/><path d="M633.4,426.5h2.2l1.3,1.3v2.2l-1.3,1.3h-2.2l-1.3,-1.3v-2.2z"/><path d="M636.4,426.8h2.2l1.3,1.3v2.2l-1.3,1.3h-2.2l-1.3,-1.3v-2.2z"/><path d="M639.4,426.8h2.2l1.3,1.3v2.2l-1.3,1.3h-2.2l-1.3,-1.3v-2.2z"/><path d="M642.4,426.4h2.2l1.3,1.3v2.2l-1.3,1.3h-2.2l-1.3,-1.3v-2.2z"/><path d="M645.4,426.8h2.2l1.3,1.3v2.2l-1.3,1.3h-2.2l-1.3,-1.3v-2.2z"/><path d="M648.4,426.8h2.2l1.3,1.3v2.2l-1.3,1.3h-2.2l-1.3,-1.3v-2.2z"/><path d="M651.4,426.7h2.2l1.3,1.3v2.2l-1.3,1.3h-2.2l-1.3,-1.3v-2.2z"/><path d="M654.4,426.4h2.2l1.3,1.3v2.2l-1.3,1.3h-2.2l-1.3,-1.3v-2.2z"/><path d="M657.4,426.8h2.2l1.3,1.3v2.2l-1.3,1.3h-2.2l-1.3,-1.3v-2.2z"/><path d="M660.4,426.5h2.2l1.3,1.3v2.2l-1.3,1.3h-2.2l-1.3,-1.3v-2.2z"/><path d="M663.4,426.8h2.2l1.3,1.3v2.2l-1.3,1.3h-2.2l-1.3,-1.3v-2.2z"/><path d="M666.4,426.7h2.2l1.3,1.3v2.2l-1.3,1.3h-2.2l-1.3,-1.3v-2.2z"/><path d="M669.4,426.4h2.2l1.3,1.3v2.2l-1.3,1.3h-2.2l-1.3,-1.3v-2.2z"/><path d="M672.4,426.5h2.2l1.3,1.3v2.2l-1.3,1.3h-2.2l-1.3,-1.3v-2.2z"/><path d="M675.4,426.7h2.2l1.3,1.3v2.2l-1.3,1.3h-2.2l-1.3,-1.3v-2.2z"/><path d="M678.4,426.6h2.2l1.3,1.3v2.2l-1.3,1.3h-2.2l-1.3,-1.3v-2.2z"/><path d="M681.4,426.7h2.2l1.3,1.3v2.2l-1.3,1.3h-2.2l-1.3,-1.3v-2.2z"/><path d="M684.4,426.8h2.2l1.3,1.3v2.2l-1.3,1.3h-2.2l-1.3,-1.3v-2.2z"/><path d="M687.4,426.5h2.2l1.3,1.3v2.2l-1.3,1.3h-2.2l-1.3,-1.3v-2.2z"/><path d="M690.4,426.4h2.2l1.3,1.3v2.2l-1.3,1.3h-2.2l-1.3,-1.3v-2.2z"/><path d="M693.4,426.8h2.2l1.3,1.3v2.2l-1.3,1.3h-2.2l-1.3,-1.3v-2.2z"/><path d="M696.4,426.4h2.2l1.3,1.3v2.2l-1.3,1.3h-2.2l-1.3,-1.3v-2.2z"/><path d="M699.4,426.8h2.2l1.3,1.3v2.2l-1.3,1.3h-2.2l-1.3,-1.3v-2.2z"/><path d="M702.4,426.4h2.2l1.3,1.3v2.2l-1.3,1.3h-2.2l-1.3,-1.3v-2.2z"/><path d="M705.4,426.7h2.2l1.3,1.3v2.2l-1.3,1.3h-2.2l-1.3,-1.3v-2.2z"/><path d="M708.4,426.7h2.2l1.3,1.3v2.2l-1.3,1.3h-2.2l-1.3,-1.3v-2.2z"/><path d="M711.4,426.8h2.2l1.3,1.3v2.2l-1.3,1.3h-2.2l-1.3,-1.3v-2.2z"/><path d="M714.4,426.6h2.2l1.3,1.3v2.2l-1.3,1.3h-2.2l-1.3,-1.3v-2.2z"/><path d="M717.4,426.8h2.2l1.3,1.3v2.2l-1.3,1.3h-2.2l-1.3,-1.3v-2.2z"/><path d="M720.4,426.5h2.2l1.3,1.3v2.2l-1.3,1.3h-2.2l-1.3,-1.3v-2.2z"/><path d="M723.4,426.7h2.2l1.3,1.3v2.2l-1.3,1.3h-2.2l-1.3,-1.3v-2.2z"/><path d="M726.4,426.5h2.2l1.3,1.3v2.2l-1.3,1.3h-2.2l-1.3,-1.3v-2.2z"/><path d="M729.4,426.8h2.2l1.3,1.3v2.2l-1.3,1.3h-2.2l-1.3,-1.3v-2.2z"/><path d="M732.4,426.7h2.2l1.3,1.3v2.2l-1.3,1.3h-2.2l-1.3,-1.3v-2.2z"/><path d="M735.4,426.6h2.2l1.3,1.3v2.2l-1.3,1.3h-2.2l-1.3,-1.3v-2.2z"/><path d="M738.4,426.6h2.2l1.3,1.3v2.2l-1.3,1.3h-2.2l-1.3,-1.3v-2.2z"/><path d="M741.4,426.4h2.2l1.3,1.3v2.2l-1.3,1.3h-2.2l-1.3,-1.3v-2.2z"/><path d="M744.4,426.4h2.2l1.3,1.3v2.2l-1.3,1.3h-2.2l-1.3,-1.3v-2.2z"/><path d="M747.4,426.6h2.2l1.3,1.3v2.2l-1.3,1.3h-2.2l-1.3,-1.3v-2.2z"/><path d="M750.4,426.6h2.2l1.3,1.3v2.2l-1.3,1.3h-2.2l-1.3,-1.3v-2.2z"/><path d="M753.4,426.7h2.2l1.3,1.3v2.2l-1.3,1.3h-2.2l-1.3,-1.3v-2.2z"/><path d="M756.4,426.6h2.2l1.3,1.3v2.2l-1.3,1.3h-2.2l-1.3,-1.3v-2.2z"/><path d="M759.4,426.5h2.2l1.3,1.3v2.2l-1.3,1.3h-2.2l-1.3,-1.3v-2.2z"/><path d="M762.4,426.5h2.2l1.3,1.3v2.2l-1.3,1.3h-2.2l-1.3,-1.3v-2.2z"/><path d="M765.4,426.7h2.2l1.3,1.3v2.2l-1.3,1.3h-2.2l-1.3,-1.3v-2.2z"/><path d="M768.4,426.6h2.2l1.3,1.3v2.2l-1.3,1.3h-2.2l-1.3,-1.3v-2.2z"/><path d="M771.4,426.4h2.2l1.3,1.3v2.2l-1.3,1.3h-2.2l-1.3,-1.3v-2.2z"/><path d="M774.4,426.7h2.2l1.3,1.3v2.2l-1.3,1.3h-2.2l-1.3,-1.3v-2.2z"/><path d="M777.4,426.7h2.2l1.3,1.3v2.2l-1.3,1.3h-2.2l-1.3,-1.3v-2.2z"/><path d="M689,430 L689,427 Q693,424 697,427 L697,430" fill="none" stroke="#000" stroke-width="2"/><polyline points="160.0,470.0 195.0,470.0 197.0,471.0 199.0,470.0 215.0,470.0 217.0,469.0 781.0,469.2" fill="none" stroke="#000" stroke-width="4.8" stroke-linejoin="round"/><path d="M159.5,467.7h2.1l1.3,1.3v2.1l-1.3,1.3h-2.1l-1.3,-1.3v-2.1z"/><path d="M162.5,467.8h2.1l1.3,1.3v2.1l-1.3,1.3h-2.1l-1.3,-1.3v-2.1z"/><path d="M165.5,467.8h2.1l1.3,1.3v2.1l-1.3,1.3h-2.1l-1.3,-1.3v-2.1z"/><path d="M168.5,467.9h2.1l1.3,1.3v2.1l-1.3,1.3h-2.1l-1.3,-1.3v-2.1z"/><path d="M171.5,467.8h2.1l1.3,1.3v2.1l-1.3,1.3h-2.1l-1.3,-1.3v-2.1z"/><path d="M174.5,467.9h2.1l1.3,1.3v2.1l-1.3,1.3h-2.1l-1.3,-1.3v-2.1z"/><path d="M177.5,467.5h2.1l1.3,1.3v2.1l-1.3,1.3h-2.1l-1.3,-1.3v-2.1z"/><path d="M180.5,467.7h2.1l1.3,1.3v2.1l-1.3,1.3h-2.1l-1.3,-1.3v-2.1z"/><path d="M183.5,467.9h2.1l1.3,1.3v2.1l-1.3,1.3h-2.1l-1.3,-1.3v-2.1z"/><path d="M186.5,467.8h2.1l1.3,1.3v2.1l-1.3,1.3h-2.1l-1.3,-1.3v-2.1z"/><path d="M189.5,467.9h2.1l1.3,1.3v2.1l-1.3,1.3h-2.1l-1.3,-1.3v-2.1z"/><path d="M192.5,467.5h2.1l1.3,1.3v2.1l-1.3,1.3h-2.1l-1.3,-1.3v-2.1z"/><path d="M195.5,468.4h2.1l1.3,1.3v2.1l-1.3,1.3h-2.1l-1.3,-1.3v-2.1z"/><path d="M198.5,467.6h2.1l1.3,1.3v2.1l-1.3,1.3h-2.1l-1.3,-1.3v-2.1z"/><path d="M201.5,467.7h2.1l1.3,1.3v2.1l-1.3,1.3h-2.1l-1.3,-1.3v-2.1z"/><path d="M204.5,467.7h2.1l1.3,1.3v2.1l-1.3,1.3h-2.1l-1.3,-1.3v-2.1z"/><path d="M207.5,467.5h2.1l1.3,1.3v2.1l-1.3,1.3h-2.1l-1.3,-1.3v-2.1z"/><path d="M210.5,467.6h2.1l1.3,1.3v2.1l-1.3,1.3h-2.1l-1.3,-1.3v-2.1z"/><path d="M213.5,467.6h2.1l1.3,1.3v2.1l-1.3,1.3h-2.1l-1.3,-1.3v-2.1z"/><path d="M216.5,466.9h2.1l1.3,1.3v2.1l-1.3,1.3h-2.1l-1.3,-1.3v-2.1z"/><path d="M219.5,466.8h2.1l1.3,1.3v2.1l-1.3,1.3h-2.1l-1.3,-1.3v-2.1z"/><path d="M222.5,466.6h2.1l1.3,1.3v2.1l-1.3,1.3h-2.1l-1.3,-1.3v-2.1z"/><path d="M225.5,466.8h2.1l1.3,1.3v2.1l-1.3,1.3h-2.1l-1.3,-1.3v-2.1z"/><path d="M228.5,466.6h2.1l1.3,1.3v2.1l-1.3,1.3h-2.1l-1.3,-1.3v-2.1z"/><path d="M231.5,466.8h2.1l1.3,1.3v2.1l-1.3,1.3h-2.1l-1.3,-1.3v-2.1z"/><path d="M234.5,466.6h2.1l1.3,1.3v2.1l-1.3,1.3h-2.1l-1.3,-1.3v-2.1z"/><path d="M237.5,466.5h2.1l1.3,1.3v2.1l-1.3,1.3h-2.1l-1.3,-1.3v-2.1z"/><path d="M240.5,466.9h2.1l1.3,1.3v2.1l-1.3,1.3h-2.1l-1.3,-1.3v-2.1z"/><path d="M243.5,466.6h2.1l1.3,1.3v2.1l-1.3,1.3h-2.1l-1.3,-1.3v-2.1z"/><path d="M246.5,466.6h2.1l1.3,1.3v2.1l-1.3,1.3h-2.1l-1.3,-1.3v-2.1z"/><path d="M249.5,466.9h2.1l1.3,1.3v2.1l-1.3,1.3h-2.1l-1.3,-1.3v-2.1z"/><path d="M252.5,466.9h2.1l1.3,1.3v2.1l-1.3,1.3h-2.1l-1.3,-1.3v-2.1z"/><path d="M255.5,466.6h2.1l1.3,1.3v2.1l-1.3,1.3h-2.1l-1.3,-1.3v-2.1z"/><path d="M258.5,466.9h2.1l1.3,1.3v2.1l-1.3,1.3h-2.1l-1.3,-1.3v-2.1z"/><path d="M261.5,466.7h2.1l1.3,1.3v2.1l-1.3,1.3h-2.1l-1.3,-1.3v-2.1z"/><path d="M264.5,466.8h2.1l1.3,1.3v2.1l-1.3,1.3h-2.1l-1.3,-1.3v-2.1z"/><path d="M267.5,466.6h2.1l1.3,1.3v2.1l-1.3,1.3h-2.1l-1.3,-1.3v-2.1z"/><path d="M270.5,466.9h2.1l1.3,1.3v2.1l-1.3,1.3h-2.1l-1.3,-1.3v-2.1z"/><path d="M273.5,466.8h2.1l1.3,1.3v2.1l-1.3,1.3h-2.1l-1.3,-1.3v-2.1z"/><path d="M276.5,466.9h2.1l1.3,1.3v2.1l-1.3,1.3h-2.1l-1.3,-1.3v-2.1z"/><path d="M279.5,466.9h2.1l1.3,1.3v2.1l-1.3,1.3h-2.1l-1.3,-1.3v-2.1z"/><path d="M282.5,466.6h2.1l1.3,1.3v2.1l-1.3,1.3h-2.1l-1.3,-1.3v-2.1z"/><path d="M285.5,466.7h2.1l1.3,1.3v2.1l-1.3,1.3h-2.1l-1.3,-1.3v-2.1z"/><path d="M288.5,466.6h2.1l1.3,1.3v2.1l-1.3,1.3h-2.1l-1.3,-1.3v-2.1z"/><path d="M291.5,466.6h2.1l1.3,1.3v2.1l-1.3,1.3h-2.1l-1.3,-1.3v-2.1z"/><path d="M294.5,466.6h2.1l1.3,1.3v2.1l-1.3,1.3h-2.1l-1.3,-1.3v-2.1z"/><path d="M297.5,466.6h2.1l1.3,1.3v2.1l-1.3,1.3h-2.1l-1.3,-1.3v-2.1z"/><path d="M300.5,466.8h2.1l1.3,1.3v2.1l-1.3,1.3h-2.1l-1.3,-1.3v-2.1z"/><path d="M303.5,466.5h2.1l1.3,1.3v2.1l-1.3,1.3h-2.1l-1.3,-1.3v-2.1z"/><path d="M306.5,466.8h2.1l1.3,1.3v2.1l-1.3,1.3h-2.1l-1.3,-1.3v-2.1z"/><path d="M309.5,466.7h2.1l1.3,1.3v2.1l-1.3,1.3h-2.1l-1.3,-1.3v-2.1z"/><path d="M312.5,466.7h2.1l1.3,1.3v2.1l-1.3,1.3h-2.1l-1.3,-1.3v-2.1z"/><path d="M315.5,466.9h2.1l1.3,1.3v2.1l-1.3,1.3h-2.1l-1.3,-1.3v-2.1z"/><path d="M318.5,466.7h2.1l1.3,1.3v2.1l-1.3,1.3h-2.1l-1.3,-1.3v-2.1z"/><path d="M321.5,466.7h2.1l1.3,1.3v2.1l-1.3,1.3h-2.1l-1.3,-1.3v-2.1z"/><path d="M324.5,466.7h2.1l1.3,1.3v2.1l-1.3,1.3h-2.1l-1.3,-1.3v-2.1z"/><path d="M327.5,466.8h2.1l1.3,1.3v2.1l-1.3,1.3h-2.1l-1.3,-1.3v-2.1z"/><path d="M330.5,466.6h2.1l1.3,1.3v2.1l-1.3,1.3h-2.1l-1.3,-1.3v-2.1z"/><path d="M333.5,466.9h2.1l1.3,1.3v2.1l-1.3,1.3h-2.1l-1.3,-1.3v-2.1z"/><path d="M336.5,466.6h2.1l1.3,1.3v2.1l-1.3,1.3h-2.1l-1.3,-1.3v-2.1z"/><path d="M339.5,466.8h2.1l1.3,1.3v2.1l-1.3,1.3h-2.1l-1.3,-1.3v-2.1z"/><path d="M342.5,466.9h2.1l1.3,1.3v2.1l-1.3,1.3h-2.1l-1.3,-1.3v-2.1z"/><path d="M345.5,466.6h2.1l1.3,1.3v2.1l-1.3,1.3h-2.1l-1.3,-1.3v-2.1z"/><path d="M348.5,466.9h2.1l1.3,1.3v2.1l-1.3,1.3h-2.1l-1.3,-1.3v-2.1z"/><path d="M351.5,466.7h2.1l1.3,1.3v2.1l-1.3,1.3h-2.1l-1.3,-1.3v-2.1z"/><path d="M354.5,466.8h2.1l1.3,1.3v2.1l-1.3,1.3h-2.1l-1.3,-1.3v-2.1z"/><path d="M357.5,466.6h2.1l1.3,1.3v2.1l-1.3,1.3h-2.1l-1.3,-1.3v-2.1z"/><path d="M360.5,466.6h2.1l1.3,1.3v2.1l-1.3,1.3h-2.1l-1.3,-1.3v-2.1z"/><path d="M363.5,466.6h2.1l1.3,1.3v2.1l-1.3,1.3h-2.1l-1.3,-1.3v-2.1z"/><path d="M366.5,466.9h2.1l1.3,1.3v2.1l-1.3,1.3h-2.1l-1.3,-1.3v-2.1z"/><path d="M369.5,466.6h2.1l1.3,1.3v2.1l-1.3,1.3h-2.1l-1.3,-1.3v-2.1z"/><path d="M372.5,466.9h2.1l1.3,1.3v2.1l-1.3,1.3h-2.1l-1.3,-1.3v-2.1z"/><path d="M375.5,466.9h2.1l1.3,1.3v2.1l-1.3,1.3h-2.1l-1.3,-1.3v-2.1z"/><path d="M378.5,466.9h2.1l1.3,1.3v2.1l-1.3,1.3h-2.1l-1.3,-1.3v-2.1z"/><path d="M381.5,466.7h2.1l1.3,1.3v2.1l-1.3,1.3h-2.1l-1.3,-1.3v-2.1z"/><path d="M384.5,466.7h2.1l1.3,1.3v2.1l-1.3,1.3h-2.1l-1.3,-1.3v-2.1z"/><path d="M387.5,466.8h2.1l1.3,1.3v2.1l-1.3,1.3h-2.1l-1.3,-1.3v-2.1z"/><path d="M390.5,466.9h2.1l1.3,1.3v2.1l-1.3,1.3h-2.1l-1.3,-1.3v-2.1z"/><path d="M393.5,466.6h2.1l1.3,1.3v2.1l-1.3,1.3h-2.1l-1.3,-1.3v-2.1z"/><path d="M396.5,466.9h2.1l1.3,1.3v2.1l-1.3,1.3h-2.1l-1.3,-1.3v-2.1z"/><path d="M399.5,466.9h2.1l1.3,1.3v2.1l-1.3,1.3h-2.1l-1.3,-1.3v-2.1z"/><path d="M402.5,466.9h2.1l1.3,1.3v2.1l-1.3,1.3h-2.1l-1.3,-1.3v-2.1z"/><path d="M405.5,466.6h2.1l1.3,1.3v2.1l-1.3,1.3h-2.1l-1.3,-1.3v-2.1z"/><path d="M408.5,466.9h2.1l1.3,1.3v2.1l-1.3,1.3h-2.1l-1.3,-1.3v-2.1z"/><path d="M411.5,466.6h2.1l1.3,1.3v2.1l-1.3,1.3h-2.1l-1.3,-1.3v-2.1z"/><path d="M414.5,466.7h2.1l1.3,1.3v2.1l-1.3,1.3h-2.1l-1.3,-1.3v-2.1z"/><path d="M417.5,466.8h2.1l1.3,1.3v2.1l-1.3,1.3h-2.1l-1.3,-1.3v-2.1z"/><path d="M420.5,466.9h2.1l1.3,1.3v2.1l-1.3,1.3h-2.1l-1.3,-1.3v-2.1z"/><path d="M423.5,466.7h2.1l1.3,1.3v2.1l-1.3,1.3h-2.1l-1.3,-1.3v-2.1z"/><path d="M426.5,466.9h2.1l1.3,1.3v2.1l-1.3,1.3h-2.1l-1.3,-1.3v-2.1z"/><path d="M429.5,466.8h2.1l1.3,1.3v2.1l-1.3,1.3h-2.1l-1.3,-1.3v-2.1z"/><path d="M432.5,466.7h2.1l1.3,1.3v2.1l-1.3,1.3h-2.1l-1.3,-1.3v-2.1z"/><path d="M435.5,466.7h2.1l1.3,1.3v2.1l-1.3,1.3h-2.1l-1.3,-1.3v-2.1z"/><path d="M438.5,466.6h2.1l1.3,1.3v2.1l-1.3,1.3h-2.1l-1.3,-1.3v-2.1z"/><path d="M441.5,466.6h2.1l1.3,1.3v2.1l-1.3,1.3h-2.1l-1.3,-1.3v-2.1z"/><path d="M444.5,466.6h2.1l1.3,1.3v2.1l-1.3,1.3h-2.1l-1.3,-1.3v-2.1z"/><path d="M447.5,466.9h2.1l1.3,1.3v2.1l-1.3,1.3h-2.1l-1.3,-1.3v-2.1z"/><path d="M450.5,467.0h2.1l1.3,1.3v2.1l-1.3,1.3h-2.1l-1.3,-1.3v-2.1z"/><path d="M453.5,466.6h2.1l1.3,1.3v2.1l-1.3,1.3h-2.1l-1.3,-1.3v-2.1z"/><path d="M456.5,466.6h2.1l1.3,1.3v2.1l-1.3,1.3h-2.1l-1.3,-1.3v-2.1z"/><path d="M459.5,467.0h2.1l1.3,1.3v2.1l-1.3,1.3h-2.1l-1.3,-1.3v-2.1z"/><path d="M462.5,466.8h2.1l1.3,1.3v2.1l-1.3,1.3h-2.1l-1.3,-1.3v-2.1z"/><path d="M465.5,466.8h2.1l1.3,1.3v2.1l-1.3,1.3h-2.1l-1.3,-1.3v-2.1z"/><path d="M468.5,466.7h2.1l1.3,1.3v2.1l-1.3,1.3h-2.1l-1.3,-1.3v-2.1z"/><path d="M471.5,466.8h2.1l1.3,1.3v2.1l-1.3,1.3h-2.1l-1.3,-1.3v-2.1z"/><path d="M474.5,466.9h2.1l1.3,1.3v2.1l-1.3,1.3h-2.1l-1.3,-1.3v-2.1z"/><path d="M477.5,466.8h2.1l1.3,1.3v2.1l-1.3,1.3h-2.1l-1.3,-1.3v-2.1z"/><path d="M480.5,466.8h2.1l1.3,1.3v2.1l-1.3,1.3h-2.1l-1.3,-1.3v-2.1z"/><path d="M483.5,466.6h2.1l1.3,1.3v2.1l-1.3,1.3h-2.1l-1.3,-1.3v-2.1z"/><path d="M486.5,467.0h2.1l1.3,1.3v2.1l-1.3,1.3h-2.1l-1.3,-1.3v-2.1z"/><path d="M489.5,466.6h2.1l1.3,1.3v2.1l-1.3,1.3h-2.1l-1.3,-1.3v-2.1z"/><path d="M492.5,466.8h2.1l1.3,1.3v2.1l-1.3,1.3h-2.1l-1.3,-1.3v-2.1z"/><path d="M495.5,466.9h2.1l1.3,1.3v2.1l-1.3,1.3h-2.1l-1.3,-1.3v-2.1z"/><path d="M498.5,466.7h2.1l1.3,1.3v2.1l-1.3,1.3h-2.1l-1.3,-1.3v-2.1z"/><path d="M501.5,466.9h2.1l1.3,1.3v2.1l-1.3,1.3h-2.1l-1.3,-1.3v-2.1z"/><path d="M504.5,467.0h2.1l1.3,1.3v2.1l-1.3,1.3h-2.1l-1.3,-1.3v-2.1z"/><path d="M507.5,466.9h2.1l1.3,1.3v2.1l-1.3,1.3h-2.1l-1.3,-1.3v-2.1z"/><path d="M510.5,466.9h2.1l1.3,1.3v2.1l-1.3,1.3h-2.1l-1.3,-1.3v-2.1z"/><path d="M513.5,466.6h2.1l1.3,1.3v2.1l-1.3,1.3h-2.1l-1.3,-1.3v-2.1z"/><path d="M516.5,466.8h2.1l1.3,1.3v2.1l-1.3,1.3h-2.1l-1.3,-1.3v-2.1z"/><path d="M519.5,466.7h2.1l1.3,1.3v2.1l-1.3,1.3h-2.1l-1.3,-1.3v-2.1z"/><path d="M522.5,466.9h2.1l1.3,1.3v2.1l-1.3,1.3h-2.1l-1.3,-1.3v-2.1z"/><path d="M525.5,466.7h2.1l1.3,1.3v2.1l-1.3,1.3h-2.1l-1.3,-1.3v-2.1z"/><path d="M528.5,466.8h2.1l1.3,1.3v2.1l-1.3,1.3h-2.1l-1.3,-1.3v-2.1z"/><path d="M531.5,467.0h2.1l1.3,1.3v2.1l-1.3,1.3h-2.1l-1.3,-1.3v-2.1z"/><path d="M534.5,467.0h2.1l1.3,1.3v2.1l-1.3,1.3h-2.1l-1.3,-1.3v-2.1z"/><path d="M537.5,467.0h2.1l1.3,1.3v2.1l-1.3,1.3h-2.1l-1.3,-1.3v-2.1z"/><path d="M540.5,466.8h2.1l1.3,1.3v2.1l-1.3,1.3h-2.1l-1.3,-1.3v-2.1z"/><path d="M543.5,466.8h2.1l1.3,1.3v2.1l-1.3,1.3h-2.1l-1.3,-1.3v-2.1z"/><path d="M546.5,466.9h2.1l1.3,1.3v2.1l-1.3,1.3h-2.1l-1.3,-1.3v-2.1z"/><path d="M549.5,466.8h2.1l1.3,1.3v2.1l-1.3,1.3h-2.1l-1.3,-1.3v-2.1z"/><path d="M552.5,466.7h2.1l1.3,1.3v2.1l-1.3,1.3h-2.1l-1.3,-1.3v-2.1z"/><path d="M555.5,466.8h2.1l1.3,1.3v2.1l-1.3,1.3h-2.1l-1.3,-1.3v-2.1z"/><path d="M558.5,466.7h2.1l1.3,1.3v2.1l-1.3,1.3h-2.1l-1.3,-1.3v-2.1z"/><path d="M561.5,466.8h2.1l1.3,1.3v2.1l-1.3,1.3h-2.1l-1.3,-1.3v-2.1z"/><path d="M564.5,467.0h2.1l1.3,1.3v2.1l-1.3,1.3h-2.1l-1.3,-1.3v-2.1z"/><path d="M567.5,467.0h2.1l1.3,1.3v2.1l-1.3,1.3h-2.1l-1.3,-1.3v-2.1z"/><path d="M570.5,466.9h2.1l1.3,1.3v2.1l-1.3,1.3h-2.1l-1.3,-1.3v-2.1z"/><path d="M573.5,466.8h2.1l1.3,1.3v2.1l-1.3,1.3h-2.1l-1.3,-1.3v-2.1z"/><path d="M576.5,466.8h2.1l1.3,1.3v2.1l-1.3,1.3h-2.1l-1.3,-1.3v-2.1z"/><path d="M579.5,466.7h2.1l1.3,1.3v2.1l-1.3,1.3h-2.1l-1.3,-1.3v-2.1z"/><path d="M582.5,466.7h2.1l1.3,1.3v2.1l-1.3,1.3h-2.1l-1.3,-1.3v-2.1z"/><path d="M585.5,466.9h2.1l1.3,1.3v2.1l-1.3,1.3h-2.1l-1.3,-1.3v-2.1z"/><path d="M588.5,467.0h2.1l1.3,1.3v2.1l-1.3,1.3h-2.1l-1.3,-1.3v-2.1z"/><path d="M591.5,466.8h2.1l1.3,1.3v2.1l-1.3,1.3h-2.1l-1.3,-1.3v-2.1z"/><path d="M594.5,466.9h2.1l1.3,1.3v2.1l-1.3,1.3h-2.1l-1.3,-1.3v-2.1z"/><path d="M597.5,466.9h2.1l1.3,1.3v2.1l-1.3,1.3h-2.1l-1.3,-1.3v-2.1z"/><path d="M600.5,466.9h2.1l1.3,1.3v2.1l-1.3,1.3h-2.1l-1.3,-1.3v-2.1z"/><path d="M603.5,466.9h2.1l1.3,1.3v2.1l-1.3,1.3h-2.1l-1.3,-1.3v-2.1z"/><path d="M606.5,466.9h2.1l1.3,1.3v2.1l-1.3,1.3h-2.1l-1.3,-1.3v-2.1z"/><path d="M609.5,466.8h2.1l1.3,1.3v2.1l-1.3,1.3h-2.1l-1.3,-1.3v-2.1z"/><path d="M612.5,466.9h2.1l1.3,1.3v2.1l-1.3,1.3h-2.1l-1.3,-1.3v-2.1z"/><path d="M615.5,466.8h2.1l1.3,1.3v2.1l-1.3,1.3h-2.1l-1.3,-1.3v-2.1z"/><path d="M618.5,466.8h2.1l1.3,1.3v2.1l-1.3,1.3h-2.1l-1.3,-1.3v-2.1z"/><path d="M621.5,467.0h2.1l1.3,1.3v2.1l-1.3,1.3h-2.1l-1.3,-1.3v-2.1z"/><path d="M624.5,466.9h2.1l1.3,1.3v2.1l-1.3,1.3h-2.1l-1.3,-1.3v-2.1z"/><path d="M627.5,466.8h2.1l1.3,1.3v2.1l-1.3,1.3h-2.1l-1.3,-1.3v-2.1z"/><path d="M630.5,467.0h2.1l1.3,1.3v2.1l-1.3,1.3h-2.1l-1.3,-1.3v-2.1z"/><path d="M633.5,466.9h2.1l1.3,1.3v2.1l-1.3,1.3h-2.1l-1.3,-1.3v-2.1z"/><path d="M636.5,466.9h2.1l1.3,1.3v2.1l-1.3,1.3h-2.1l-1.3,-1.3v-2.1z"/><path d="M639.5,466.7h2.1l1.3,1.3v2.1l-1.3,1.3h-2.1l-1.3,-1.3v-2.1z"/><path d="M642.5,466.9h2.1l1.3,1.3v2.1l-1.3,1.3h-2.1l-1.3,-1.3v-2.1z"/><path d="M645.5,466.8h2.1l1.3,1.3v2.1l-1.3,1.3h-2.1l-1.3,-1.3v-2.1z"/><path d="M648.5,466.9h2.1l1.3,1.3v2.1l-1.3,1.3h-2.1l-1.3,-1.3v-2.1z"/><path d="M651.5,466.8h2.1l1.3,1.3v2.1l-1.3,1.3h-2.1l-1.3,-1.3v-2.1z"/><path d="M654.5,467.0h2.1l1.3,1.3v2.1l-1.3,1.3h-2.1l-1.3,-1.3v-2.1z"/><path d="M657.5,466.9h2.1l1.3,1.3v2.1l-1.3,1.3h-2.1l-1.3,-1.3v-2.1z"/><path d="M660.5,467.0h2.1l1.3,1.3v2.1l-1.3,1.3h-2.1l-1.3,-1.3v-2.1z"/><path d="M663.5,466.8h2.1l1.3,1.3v2.1l-1.3,1.3h-2.1l-1.3,-1.3v-2.1z"/><path d="M666.5,466.9h2.1l1.3,1.3v2.1l-1.3,1.3h-2.1l-1.3,-1.3v-2.1z"/><path d="M669.5,467.0h2.1l1.3,1.3v2.1l-1.3,1.3h-2.1l-1.3,-1.3v-2.1z"/><path d="M672.5,467.0h2.1l1.3,1.3v2.1l-1.3,1.3h-2.1l-1.3,-1.3v-2.1z"/><path d="M675.5,466.8h2.1l1.3,1.3v2.1l-1.3,1.3h-2.1l-1.3,-1.3v-2.1z"/><path d="M678.5,467.0h2.1l1.3,1.3v2.1l-1.3,1.3h-2.1l-1.3,-1.3v-2.1z"/><path d="M681.5,467.0h2.1l1.3,1.3v2.1l-1.3,1.3h-2.1l-1.3,-1.3v-2.1z"/><path d="M684.5,466.9h2.1l1.3,1.3v2.1l-1.3,1.3h-2.1l-1.3,-1.3v-2.1z"/><path d="M687.5,467.1h2.1l1.3,1.3v2.1l-1.3,1.3h-2.1l-1.3,-1.3v-2.1z"/><path d="M690.5,467.1h2.1l1.3,1.3v2.1l-1.3,1.3h-2.1l-1.3,-1.3v-2.1z"/><path d="M693.5,466.9h2.1l1.3,1.3v2.1l-1.3,1.3h-2.1l-1.3,-1.3v-2.1z"/><path d="M696.5,466.9h2.1l1.3,1.3v2.1l-1.3,1.3h-2.1l-1.3,-1.3v-2.1z"/><path d="M699.5,466.7h2.1l1.3,1.3v2.1l-1.3,1.3h-2.1l-1.3,-1.3v-2.1z"/><path d="M702.5,467.0h2.1l1.3,1.3v2.1l-1.3,1.3h-2.1l-1.3,-1.3v-2.1z"/><path d="M705.5,467.0h2.1l1.3,1.3v2.1l-1.3,1.3h-2.1l-1.3,-1.3v-2.1z"/><path d="M708.5,466.9h2.1l1.3,1.3v2.1l-1.3,1.3h-2.1l-1.3,-1.3v-2.1z"/><path d="M711.5,467.0h2.1l1.3,1.3v2.1l-1.3,1.3h-2.1l-1.3,-1.3v-2.1z"/><path d="M714.5,467.0h2.1l1.3,1.3v2.1l-1.3,1.3h-2.1l-1.3,-1.3v-2.1z"/><path d="M717.5,467.0h2.1l1.3,1.3v2.1l-1.3,1.3h-2.1l-1.3,-1.3v-2.1z"/><path d="M720.5,466.7h2.1l1.3,1.3v2.1l-1.3,1.3h-2.1l-1.3,-1.3v-2.1z"/><path d="M723.5,467.0h2.1l1.3,1.3v2.1l-1.3,1.3h-2.1l-1.3,-1.3v-2.1z"/><path d="M726.5,466.9h2.1l1.3,1.3v2.1l-1.3,1.3h-2.1l-1.3,-1.3v-2.1z"/><path d="M729.5,466.9h2.1l1.3,1.3v2.1l-1.3,1.3h-2.1l-1.3,-1.3v-2.1z"/><path d="M732.5,466.9h2.1l1.3,1.3v2.1l-1.3,1.3h-2.1l-1.3,-1.3v-2.1z"/><path d="M735.5,466.9h2.1l1.3,1.3v2.1l-1.3,1.3h-2.1l-1.3,-1.3v-2.1z"/><path d="M738.5,467.0h2.1l1.3,1.3v2.1l-1.3,1.3h-2.1l-1.3,-1.3v-2.1z"/><path d="M741.5,466.9h2.1l1.3,1.3v2.1l-1.3,1.3h-2.1l-1.3,-1.3v-2.1z"/><path d="M744.5,467.0h2.1l1.3,1.3v2.1l-1.3,1.3h-2.1l-1.3,-1.3v-2.1z"/><path d="M747.5,466.7h2.1l1.3,1.3v2.1l-1.3,1.3h-2.1l-1.3,-1.3v-2.1z"/><path d="M750.5,466.8h2.1l1.3,1.3v2.1l-1.3,1.3h-2.1l-1.3,-1.3v-2.1z"/><path d="M753.5,466.9h2.1l1.3,1.3v2.1l-1.3,1.3h-2.1l-1.3,-1.3v-2.1z"/><path d="M756.5,467.0h2.1l1.3,1.3v2.1l-1.3,1.3h-2.1l-1.3,-1.3v-2.1z"/><path d="M759.5,466.8h2.1l1.3,1.3v2.1l-1.3,1.3h-2.1l-1.3,-1.3v-2.1z"/><path d="M762.5,467.0h2.1l1.3,1.3v2.1l-1.3,1.3h-2.1l-1.3,-1.3v-2.1z"/><path d="M765.5,466.9h2.1l1.3,1.3v2.1l-1.3,1.3h-2.1l-1.3,-1.3v-2.1z"/><path d="M768.5,466.7h2.1l1.3,1.3v2.1l-1.3,1.3h-2.1l-1.3,-1.3v-2.1z"/><path d="M771.5,466.9h2.1l1.3,1.3v2.1l-1.3,1.3h-2.1l-1.3,-1.3v-2.1z"/><path d="M774.5,466.8h2.1l1.3,1.3v2.1l-1.3,1.3h-2.1l-1.3,-1.3v-2.1z"/><path d="M777.5,466.7h2.1l1.3,1.3v2.1l-1.3,1.3h-2.1l-1.3,-1.3v-2.1z"/><path d="M216.3,464.9h1.4l0.9,0.9v1.4l-0.9,0.9h-1.4l-0.9,-0.9v-1.4z"/><path d="M225.3,464.9h1.4l0.9,0.9v1.4l-0.9,0.9h-1.4l-0.9,-0.9v-1.4z"/><path d="M699.3,465.1h1.4l0.9,0.9v1.4l-0.9,0.9h-1.4l-0.9,-0.9v-1.4z"/></g></svg>
<div style="left:799px;top:234px;width:1px;height:273px;background:#fff"></div>
<div style="left:800px;top:234px;width:1px;height:273px;background:#989898"></div>
<div style="left:801px;top:234px;width:3px;height:273px;background:#fff"></div>
<div style="left:804px;top:234px;width:1px;height:273px;background:#989898"></div>
<div style="left:805px;top:234px;width:154px;height:273px;background:#f7f7f7"></div>
<div style="left:805px;top:234px;width:1px;height:273px;background:#fff"></div>
<div style="left:959px;top:234px;width:16px;height:273px;background:#f0f0f0"></div>
<div style="left:959px;top:234px;width:1px;height:273px;background:#ffffff"></div>
<svg style="left:961px;top:238px" width="12" height="10"><polyline points="2,7 6,3 10,7" fill="none" stroke="#c4c4c4" stroke-width="1.8"/></svg>
<div style="left:811px;top:243px;width:13px;height:13px;border:1px solid #333;box-sizing:border-box;background:#f7f7f7"></div>
<svg style="left:811px;top:243px" width="13" height="13"><polyline points="2.5,6.5 5.2,9.5 10.5,3.5" fill="none" stroke="#333" stroke-width="1.3"/></svg>
<div class="t" style="left:832px;top:240px;font-size:12px;color:#000;font-weight:bold">Thermal Sample</div>
<svg style="left:818px;top:258px" width="24" height="18" fill="#000"><ellipse cx="7" cy="7.4" rx="1.3" ry="1.1"/><ellipse cx="10.5" cy="9.1" rx="1.3" ry="1.2"/><ellipse cx="14" cy="13.2" rx="1.3" ry="1.2"/><ellipse cx="17.5" cy="11.3" rx="1.3" ry="1.2"/></svg>
<div class="t" style="left:842px;top:259px;font-size:12.25px;color:#000;">Temperature in (oC)</div>
<div style="left:0;top:0;width:977px;height:508px;box-sizing:border-box;border-left:1px solid #7a7a7a;border-top:1px solid #7a7a7a;border-right:2px solid #7a7a7a;border-bottom:1px solid #7a7a7a"></div>
</body></html>
